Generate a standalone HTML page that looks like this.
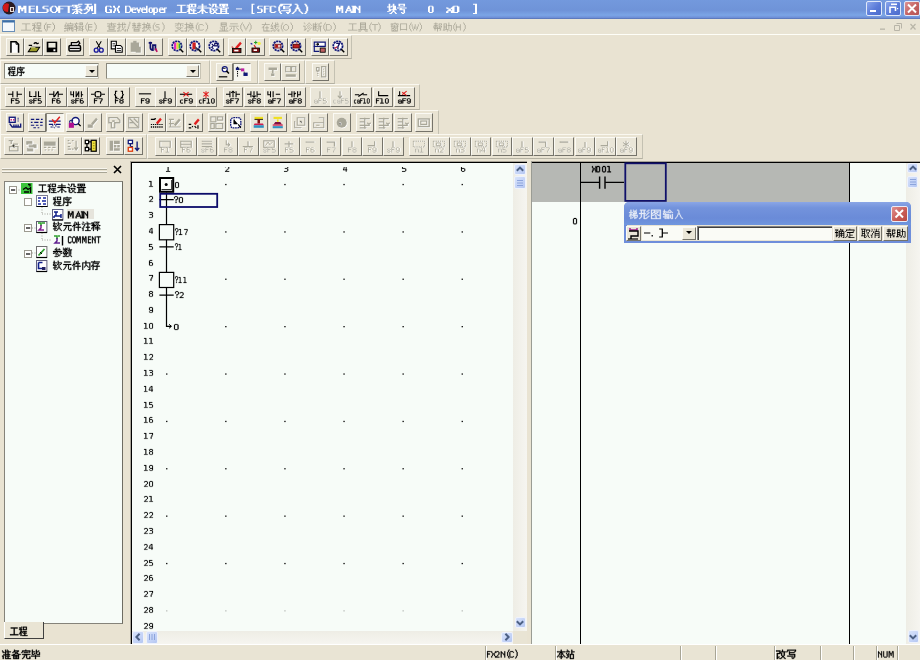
<!DOCTYPE html><html><head><meta charset="utf-8"><style>
*{margin:0;padding:0;box-sizing:border-box}
html,body{width:920px;height:660px;overflow:hidden;background:#e9e3d2;font-family:"Liberation Sans",sans-serif}
body{position:relative}
.a{position:absolute}
.t{position:absolute;overflow:visible}
.b{position:absolute;border-left:1px solid #fbfaf4;border-top:1px solid #fbfaf4;border-right:1px solid #75736a;border-bottom:1px solid #75736a;background:#eae6d8}
.i{position:absolute;overflow:visible}
</style></head><body><div class="a" style="left:0px;top:0px;width:920px;height:19px;background:linear-gradient(#7399dd 0%,#6f93d8 55%,#7ba5e6 80%,#6f90d8 92%,#5570b0 100%)"></div>
<svg class="i" style="left:2px;top:1px;width:14px;height:14px" viewBox="0 0 14 14"><circle cx="7" cy="7" r="6.5" fill="#2a1a20"/><path d="M1 5 Q3 1 7 3 L6 11 Q2 11 1 8z" fill="#d01818"/><rect x="8" y="6" width="4" height="5" fill="#e8e0d8"/><rect x="9" y="7" width="2" height="3" fill="#503030"/></svg>
<svg class="t" style="left:17.80px;top:1.60px;width:82.43px;height:14.72px" viewBox="0 0 78 16" preserveAspectRatio="none" aria-label="MELSOFT系列"><path fill="#fff" d="M57 2h4v1h-4zM63 2h7v1h-7zM72 2h2v1h-2zM51 3h7v1h-7zM65 3h2v1h-2zM72 3h2v1h-2zM0 4h3v1h-3zM5 4h3v1h-3zM10 4h6v1h-6zM17 4h2v1h-2zM24 4h5v1h-5zM32 4h4v1h-4zM38 4h14v1h-14zM54 4h2v1h-2zM58 4h2v1h-2zM65 4h2v1h-2zM69 4h2v1h-2zM72 4h2v1h-2zM0 5h3v1h-3zM5 5h3v1h-3zM10 5h2v1h-2zM17 5h2v1h-2zM23 5h2v1h-2zM31 5h2v1h-2zM35 5h2v1h-2zM38 5h2v1h-2zM47 5h2v1h-2zM52 5h7v1h-7zM64 5h7v1h-7zM72 5h2v1h-2zM0 6h8v1h-8zM10 6h2v1h-2zM17 6h2v1h-2zM23 6h2v1h-2zM30 6h2v1h-2zM36 6h4v1h-4zM47 6h2v1h-2zM55 6h2v1h-2zM64 6h2v1h-2zM67 6h4v1h-4zM72 6h2v1h-2zM0 7h8v1h-8zM10 7h6v1h-6zM17 7h2v1h-2zM24 7h4v1h-4zM30 7h2v1h-2zM36 7h7v1h-7zM47 7h2v1h-2zM54 7h2v1h-2zM58 7h2v1h-2zM63 7h3v1h-3zM67 7h4v1h-4zM72 7h2v1h-2zM0 8h2v1h-2zM3 8h2v1h-2zM6 8h2v1h-2zM10 8h2v1h-2zM17 8h2v1h-2zM27 8h2v1h-2zM30 8h2v1h-2zM36 8h4v1h-4zM47 8h2v1h-2zM51 8h10v1h-10zM62 8h2v1h-2zM65 8h3v1h-3zM69 8h2v1h-2zM72 8h2v1h-2zM0 9h2v1h-2zM3 9h2v1h-2zM6 9h2v1h-2zM10 9h2v1h-2zM17 9h2v1h-2zM27 9h2v1h-2zM30 9h2v1h-2zM36 9h4v1h-4zM47 9h2v1h-2zM55 9h2v1h-2zM59 9h2v1h-2zM66 9h2v1h-2zM69 9h2v1h-2zM72 9h2v1h-2zM0 10h2v1h-2zM6 10h2v1h-2zM10 10h2v1h-2zM17 10h2v1h-2zM27 10h2v1h-2zM31 10h2v1h-2zM35 10h2v1h-2zM38 10h2v1h-2zM47 10h2v1h-2zM53 10h6v1h-6zM65 10h2v1h-2zM72 10h2v1h-2zM0 11h2v1h-2zM6 11h2v1h-2zM10 11h6v1h-6zM17 11h11v1h-11zM32 11h4v1h-4zM38 11h2v1h-2zM47 11h2v1h-2zM52 11h2v1h-2zM55 11h2v1h-2zM58 11h2v1h-2zM64 11h2v1h-2zM72 11h2v1h-2zM51 12h2v1h-2zM54 12h3v1h-3zM59 12h2v1h-2zM62 12h3v1h-3zM70 12h4v1h-4z"/></svg>
<svg class="t" style="left:105.00px;top:1.60px;width:19.00px;height:14.72px" viewBox="0 0 19 16" preserveAspectRatio="none" aria-label="GX"><path fill="#fff" d="M1 4h5v1h-5zM8 4h2v1h-2zM13 4h2v1h-2zM0 5h2v1h-2zM5 5h2v1h-2zM8 5h2v1h-2zM13 5h2v1h-2zM0 6h2v1h-2zM9 6h2v1h-2zM12 6h2v1h-2zM0 7h2v1h-2zM10 7h3v1h-3zM0 8h2v1h-2zM4 8h3v1h-3zM9 8h2v1h-2zM12 8h2v1h-2zM0 9h2v1h-2zM5 9h2v1h-2zM9 9h2v1h-2zM12 9h2v1h-2zM0 10h2v1h-2zM5 10h2v1h-2zM8 10h2v1h-2zM13 10h2v1h-2zM1 11h6v1h-6zM8 11h2v1h-2zM13 11h2v1h-2z"/></svg>
<svg class="t" style="left:125.00px;top:1.60px;width:46.04px;height:14.72px" viewBox="0 0 57 16" preserveAspectRatio="none" aria-label="Developer"><path fill="#fff" d="M0 4h6v1h-6zM26 4h2v1h-2zM0 5h2v1h-2zM5 5h2v1h-2zM26 5h2v1h-2zM0 6h2v1h-2zM6 6h2v1h-2zM9 6h4v1h-4zM14 6h2v1h-2zM18 6h2v1h-2zM21 6h4v1h-4zM26 6h2v1h-2zM30 6h4v1h-4zM35 6h5v1h-5zM43 6h4v1h-4zM48 6h4v1h-4zM0 7h2v1h-2zM6 7h4v1h-4zM12 7h4v1h-4zM18 7h4v1h-4zM24 7h4v1h-4zM29 7h2v1h-2zM33 7h4v1h-4zM39 7h2v1h-2zM42 7h2v1h-2zM46 7h4v1h-4zM0 8h2v1h-2zM6 8h8v1h-8zM15 8h4v1h-4zM20 8h8v1h-8zM29 8h2v1h-2zM33 8h4v1h-4zM39 8h2v1h-2zM42 8h8v1h-8zM0 9h2v1h-2zM6 9h4v1h-4zM15 9h4v1h-4zM20 9h2v1h-2zM26 9h2v1h-2zM29 9h2v1h-2zM33 9h4v1h-4zM39 9h2v1h-2zM42 9h2v1h-2zM48 9h2v1h-2zM0 10h2v1h-2zM5 10h2v1h-2zM8 10h2v1h-2zM16 10h2v1h-2zM20 10h2v1h-2zM26 10h2v1h-2zM29 10h2v1h-2zM33 10h4v1h-4zM39 10h2v1h-2zM42 10h2v1h-2zM48 10h2v1h-2zM0 11h6v1h-6zM9 11h5v1h-5zM16 11h2v1h-2zM21 11h7v1h-7zM30 11h4v1h-4zM35 11h5v1h-5zM43 11h7v1h-7zM35 12h2v1h-2zM35 13h2v1h-2z"/></svg>
<svg class="t" style="left:176.00px;top:1.60px;width:57.42px;height:14.72px" viewBox="0 0 65 16" preserveAspectRatio="none" aria-label="工程未设置"><path fill="#fff" d="M15 2h8v1h-8zM29 2h2v1h-2zM37 2h2v1h-2zM41 2h5v1h-5zM49 2h10v1h-10zM1 3h10v1h-10zM12 3h4v1h-4zM17 3h2v1h-2zM21 3h2v1h-2zM29 3h2v1h-2zM38 3h2v1h-2zM41 3h2v1h-2zM44 3h2v1h-2zM49 3h2v1h-2zM52 3h4v1h-4zM57 3h2v1h-2zM5 4h2v1h-2zM14 4h2v1h-2zM17 4h2v1h-2zM21 4h2v1h-2zM25 4h10v1h-10zM41 4h2v1h-2zM44 4h2v1h-2zM49 4h10v1h-10zM5 5h2v1h-2zM12 5h11v1h-11zM29 5h2v1h-2zM40 5h2v1h-2zM44 5h4v1h-4zM53 5h2v1h-2zM5 6h2v1h-2zM14 6h2v1h-2zM24 6h16v1h-16zM48 6h12v1h-12zM5 7h2v1h-2zM14 7h9v1h-9zM29 7h2v1h-2zM38 7h9v1h-9zM50 7h2v1h-2zM56 7h2v1h-2zM5 8h2v1h-2zM13 8h5v1h-5zM19 8h2v1h-2zM28 8h4v1h-4zM38 8h2v1h-2zM41 8h2v1h-2zM45 8h2v1h-2zM50 8h8v1h-8zM5 9h2v1h-2zM13 9h3v1h-3zM17 9h6v1h-6zM27 9h6v1h-6zM38 9h2v1h-2zM42 9h4v1h-4zM50 9h2v1h-2zM56 9h2v1h-2zM5 10h2v1h-2zM12 10h4v1h-4zM19 10h2v1h-2zM26 10h2v1h-2zM29 10h2v1h-2zM32 10h2v1h-2zM38 10h3v1h-3zM43 10h2v1h-2zM50 10h8v1h-8zM0 11h12v1h-12zM14 11h2v1h-2zM19 11h2v1h-2zM24 11h3v1h-3zM29 11h2v1h-2zM33 11h3v1h-3zM38 11h2v1h-2zM42 11h4v1h-4zM50 11h2v1h-2zM56 11h2v1h-2zM14 12h10v1h-10zM29 12h2v1h-2zM39 12h4v1h-4zM45 12h15v1h-15z"/></svg>
<svg class="t" style="left:236.00px;top:1.60px;width:8.00px;height:14.72px" viewBox="0 0 8 16" preserveAspectRatio="none" aria-label="-"><path fill="#fff" d="M0 7h6v1h-6z"/></svg>
<svg class="t" style="left:249.50px;top:1.60px;width:6.00px;height:14.72px" viewBox="0 0 8 16" preserveAspectRatio="none" aria-label="["><path fill="#fff" d="M2 2h4v1h-4zM2 3h2v1h-2zM2 4h2v1h-2zM2 5h2v1h-2zM2 6h2v1h-2zM2 7h2v1h-2zM2 8h2v1h-2zM2 9h2v1h-2zM2 10h2v1h-2zM2 11h2v1h-2zM2 12h4v1h-4z"/></svg>
<svg class="t" style="left:256.50px;top:1.60px;width:54.10px;height:14.72px" viewBox="0 0 56 16" preserveAspectRatio="none" aria-label="SFC(写入)"><path fill="#fff" d="M24 2h12v1h-12zM39 2h3v1h-3zM49 2h2v1h-2zM23 3h4v1h-4zM34 3h2v1h-2zM41 3h2v1h-2zM50 3h2v1h-2zM1 4h5v1h-5zM7 4h6v1h-6zM14 4h5v1h-5zM23 4h3v1h-3zM27 4h2v1h-2zM33 4h2v1h-2zM41 4h2v1h-2zM50 4h2v1h-2zM0 5h2v1h-2zM7 5h2v1h-2zM13 5h2v1h-2zM18 5h2v1h-2zM22 5h2v1h-2zM27 5h7v1h-7zM41 5h2v1h-2zM51 5h2v1h-2zM0 6h2v1h-2zM7 6h2v1h-2zM13 6h2v1h-2zM22 6h2v1h-2zM27 6h2v1h-2zM40 6h4v1h-4zM51 6h2v1h-2zM1 7h4v1h-4zM7 7h5v1h-5zM13 7h2v1h-2zM22 7h2v1h-2zM27 7h8v1h-8zM40 7h4v1h-4zM51 7h2v1h-2zM4 8h2v1h-2zM7 8h2v1h-2zM13 8h2v1h-2zM22 8h2v1h-2zM33 8h2v1h-2zM39 8h2v1h-2zM43 8h2v1h-2zM51 8h2v1h-2zM4 9h2v1h-2zM7 9h2v1h-2zM13 9h2v1h-2zM22 9h2v1h-2zM25 9h10v1h-10zM39 9h2v1h-2zM43 9h2v1h-2zM51 9h2v1h-2zM4 10h2v1h-2zM7 10h2v1h-2zM13 10h2v1h-2zM18 10h2v1h-2zM23 10h2v1h-2zM33 10h2v1h-2zM38 10h2v1h-2zM44 10h2v1h-2zM50 10h2v1h-2zM0 11h5v1h-5zM7 11h2v1h-2zM14 11h5v1h-5zM23 11h2v1h-2zM30 11h4v1h-4zM37 11h2v1h-2zM45 11h2v1h-2zM50 11h2v1h-2zM24 12h2v1h-2zM31 12h2v1h-2zM36 12h2v1h-2zM46 12h2v1h-2zM49 12h2v1h-2z"/></svg>
<svg class="t" style="left:336.00px;top:1.60px;width:29.04px;height:14.72px" viewBox="0 0 32 16" preserveAspectRatio="none" aria-label="MAIN"><path fill="#fff" d="M0 4h3v1h-3zM5 4h3v1h-3zM13 4h2v1h-2zM17 4h5v1h-5zM25 4h2v1h-2zM0 5h3v1h-3zM5 5h3v1h-3zM13 5h2v1h-2zM18 5h5v1h-5zM25 5h2v1h-2zM0 6h8v1h-8zM12 6h4v1h-4zM18 6h6v1h-6zM25 6h2v1h-2zM0 7h8v1h-8zM12 7h4v1h-4zM18 7h4v1h-4zM23 7h4v1h-4zM0 8h2v1h-2zM3 8h2v1h-2zM6 8h2v1h-2zM11 8h2v1h-2zM15 8h2v1h-2zM18 8h4v1h-4zM24 8h3v1h-3zM0 9h2v1h-2zM3 9h2v1h-2zM6 9h2v1h-2zM11 9h6v1h-6zM18 9h4v1h-4zM25 9h2v1h-2zM0 10h2v1h-2zM6 10h2v1h-2zM10 10h2v1h-2zM16 10h6v1h-6zM25 10h2v1h-2zM0 11h2v1h-2zM6 11h2v1h-2zM10 11h2v1h-2zM16 11h6v1h-6zM25 11h2v1h-2z"/></svg>
<svg class="t" style="left:386.80px;top:1.60px;width:23.80px;height:14.72px" viewBox="0 0 29 16" preserveAspectRatio="none" aria-label="块号"><path fill="#fff" d="M2 2h2v1h-2zM7 2h2v1h-2zM14 2h8v1h-8zM2 3h2v1h-2zM7 3h2v1h-2zM14 3h2v1h-2zM20 3h2v1h-2zM2 4h2v1h-2zM5 4h6v1h-6zM14 4h8v1h-8zM0 5h6v1h-6zM7 5h4v1h-4zM2 6h2v1h-2zM7 6h4v1h-4zM12 6h12v1h-12zM2 7h2v1h-2zM7 7h4v1h-4zM16 7h2v1h-2zM2 8h10v1h-10zM15 8h7v1h-7zM2 9h3v1h-3zM7 9h2v1h-2zM20 9h2v1h-2zM0 10h3v1h-3zM6 10h4v1h-4zM20 10h2v1h-2zM5 11h2v1h-2zM9 11h2v1h-2zM17 11h2v1h-2zM20 11h2v1h-2zM3 12h3v1h-3zM10 12h2v1h-2zM18 12h3v1h-3z"/></svg>
<svg class="t" style="left:427.70px;top:1.60px;width:11.40px;height:14.72px" viewBox="0 0 12 16" preserveAspectRatio="none" aria-label="0"><path fill="#fff" d="M1 4h4v1h-4zM0 5h2v1h-2zM4 5h2v1h-2zM0 6h2v1h-2zM4 6h2v1h-2zM0 7h2v1h-2zM4 7h2v1h-2zM0 8h2v1h-2zM4 8h2v1h-2zM0 9h2v1h-2zM4 9h2v1h-2zM0 10h2v1h-2zM4 10h2v1h-2zM1 11h4v1h-4z"/></svg>
<svg class="t" style="left:446.00px;top:1.60px;width:20.71px;height:14.72px" viewBox="0 0 17 16" preserveAspectRatio="none" aria-label="x0"><path fill="#fff" d="M6 4h4v1h-4zM5 5h2v1h-2zM9 5h2v1h-2zM0 6h2v1h-2zM4 6h3v1h-3zM9 6h2v1h-2zM1 7h6v1h-6zM9 7h2v1h-2zM2 8h2v1h-2zM5 8h2v1h-2zM9 8h2v1h-2zM1 9h6v1h-6zM9 9h2v1h-2zM0 10h2v1h-2zM4 10h3v1h-3zM9 10h2v1h-2zM0 11h2v1h-2zM4 11h6v1h-6z"/></svg>
<svg class="t" style="left:472.00px;top:1.60px;width:8.00px;height:14.72px" viewBox="0 0 8 16" preserveAspectRatio="none" aria-label="]"><path fill="#fff" d="M1 2h4v1h-4zM3 3h2v1h-2zM3 4h2v1h-2zM3 5h2v1h-2zM3 6h2v1h-2zM3 7h2v1h-2zM3 8h2v1h-2zM3 9h2v1h-2zM3 10h2v1h-2zM3 11h2v1h-2zM1 12h4v1h-4z"/></svg>
<div class="a" style="left:866px;top:1px;width:16px;height:15px;border:1px solid #dfe8fa;border-radius:2px;background:linear-gradient(135deg,#8aa6ec,#5a7ad8 55%,#4c6ccc)"></div>
<div class="a" style="left:870px;top:10px;width:6px;height:2px;background:#fff"></div>
<div class="a" style="left:885px;top:1px;width:16px;height:15px;border:1px solid #dfe8fa;border-radius:2px;background:linear-gradient(135deg,#8aa6ec,#5a7ad8 55%,#4c6ccc)"></div>
<svg class="i" style="left:885px;top:1px;width:16px;height:15px" viewBox="0 0 16 15"><rect x="6" y="2.5" width="6" height="1.6" fill="#fff"/><path d="M5 12V6.2H10.5V10" fill="none" stroke="#fff" stroke-width="1.6"/><rect x="12" y="7" width="1.2" height="1.2" fill="#fff"/></svg>
<div class="a" style="left:904px;top:1px;width:16px;height:15px;border:1px solid #dfe8fa;border-radius:2px;background:linear-gradient(135deg,#dc9494,#c46262 55%,#b45454)"></div>
<svg class="i" style="left:904px;top:1px;width:16px;height:15px" viewBox="0 0 16 15"><path d="M4 3.5L12 11.5M12 3.5L4 11.5" stroke="#fff" stroke-width="2"/></svg>
<div class="a" style="left:0px;top:19px;width:920px;height:15px;background:#e9e4d4"></div>
<div class="a" style="left:0px;top:34px;width:920px;height:1px;background:#fefef8"></div>
<svg class="i" style="left:2px;top:20px;width:14px;height:12px" viewBox="0 0 14 12"><rect x="0.5" y="0.5" width="12" height="11" fill="#f4f8fc" stroke="#6a8fb8"/><rect x="0.5" y="0.5" width="12" height="2" fill="#3a6ea8"/></svg>
<svg class="t" style="left:21.00px;top:21.00px;width:36.76px;height:12.80px" viewBox="0 0 40 16" preserveAspectRatio="none" aria-label="工程(F)"><path fill="#a9a697" d="M15 2h1v1h-1zM17 2h5v1h-5zM27 2h1v1h-1zM34 2h1v1h-1zM1 3h9v1h-9zM12 3h3v1h-3zM17 3h1v1h-1zM21 3h1v1h-1zM26 3h1v1h-1zM35 3h1v1h-1zM5 4h1v1h-1zM14 4h1v1h-1zM17 4h1v1h-1zM21 4h1v1h-1zM26 4h1v1h-1zM28 4h5v1h-5zM35 4h1v1h-1zM5 5h1v1h-1zM12 5h4v1h-4zM17 5h5v1h-5zM25 5h1v1h-1zM28 5h1v1h-1zM36 5h1v1h-1zM5 6h1v1h-1zM14 6h1v1h-1zM25 6h1v1h-1zM28 6h1v1h-1zM36 6h1v1h-1zM5 7h1v1h-1zM14 7h2v1h-2zM17 7h5v1h-5zM25 7h1v1h-1zM28 7h4v1h-4zM36 7h1v1h-1zM5 8h1v1h-1zM13 8h2v1h-2zM16 8h1v1h-1zM19 8h1v1h-1zM25 8h1v1h-1zM28 8h1v1h-1zM36 8h1v1h-1zM5 9h1v1h-1zM13 9h2v1h-2zM17 9h5v1h-5zM25 9h1v1h-1zM28 9h1v1h-1zM36 9h1v1h-1zM5 10h1v1h-1zM12 10h1v1h-1zM14 10h1v1h-1zM19 10h1v1h-1zM26 10h1v1h-1zM28 10h1v1h-1zM35 10h1v1h-1zM0 11h11v1h-11zM14 11h1v1h-1zM19 11h1v1h-1zM26 11h1v1h-1zM28 11h1v1h-1zM35 11h1v1h-1zM14 12h1v1h-1zM16 12h7v1h-7zM27 12h1v1h-1zM34 12h1v1h-1z"/></svg>
<svg class="t" style="left:64.00px;top:21.00px;width:35.17px;height:12.80px" viewBox="0 0 41 16" preserveAspectRatio="none" aria-label="编辑(E)"><path fill="#a9a697" d="M2 2h1v1h-1zM7 2h1v1h-1zM14 2h1v1h-1zM18 2h4v1h-4zM27 2h1v1h-1zM35 2h1v1h-1zM2 3h1v1h-1zM4 3h7v1h-7zM12 3h5v1h-5zM18 3h1v1h-1zM21 3h1v1h-1zM26 3h1v1h-1zM36 3h1v1h-1zM1 4h1v1h-1zM4 4h1v1h-1zM10 4h1v1h-1zM13 4h1v1h-1zM18 4h4v1h-4zM26 4h1v1h-1zM28 4h5v1h-5zM36 4h1v1h-1zM1 5h1v1h-1zM3 5h8v1h-8zM13 5h2v1h-2zM25 5h1v1h-1zM28 5h1v1h-1zM37 5h1v1h-1zM0 6h3v1h-3zM4 6h1v1h-1zM12 6h1v1h-1zM14 6h1v1h-1zM17 6h6v1h-6zM25 6h1v1h-1zM28 6h1v1h-1zM37 6h1v1h-1zM2 7h1v1h-1zM4 7h7v1h-7zM12 7h5v1h-5zM18 7h1v1h-1zM21 7h1v1h-1zM25 7h1v1h-1zM28 7h5v1h-5zM37 7h1v1h-1zM1 8h1v1h-1zM4 8h1v1h-1zM6 8h1v1h-1zM8 8h1v1h-1zM10 8h1v1h-1zM14 8h1v1h-1zM18 8h2v1h-2zM21 8h1v1h-1zM25 8h1v1h-1zM28 8h1v1h-1zM37 8h1v1h-1zM0 9h11v1h-11zM14 9h3v1h-3zM18 9h1v1h-1zM20 9h2v1h-2zM25 9h1v1h-1zM28 9h1v1h-1zM37 9h1v1h-1zM4 10h1v1h-1zM6 10h1v1h-1zM8 10h1v1h-1zM10 10h1v1h-1zM12 10h3v1h-3zM18 10h1v1h-1zM21 10h2v1h-2zM26 10h1v1h-1zM28 10h1v1h-1zM36 10h1v1h-1zM2 11h3v1h-3zM6 11h1v1h-1zM8 11h1v1h-1zM10 11h1v1h-1zM14 11h1v1h-1zM16 11h6v1h-6zM26 11h1v1h-1zM28 11h5v1h-5zM36 11h1v1h-1zM0 12h2v1h-2zM4 12h1v1h-1zM9 12h2v1h-2zM14 12h1v1h-1zM21 12h1v1h-1zM27 12h1v1h-1zM35 12h1v1h-1z"/></svg>
<svg class="t" style="left:107.00px;top:21.00px;width:60.00px;height:12.80px" viewBox="0 0 72 16" preserveAspectRatio="none" aria-label="查找/替换(S)"><path fill="#a9a697" d="M27 1h1v1h-1zM5 2h1v1h-1zM14 2h1v1h-1zM18 2h1v1h-1zM20 2h1v1h-1zM27 2h1v1h-1zM32 2h1v1h-1zM38 2h1v1h-1zM44 2h1v1h-1zM48 2h1v1h-1zM57 2h1v1h-1zM66 2h1v1h-1zM0 3h11v1h-11zM14 3h1v1h-1zM18 3h1v1h-1zM21 3h1v1h-1zM27 3h1v1h-1zM30 3h5v1h-5zM36 3h5v1h-5zM44 3h1v1h-1zM48 3h4v1h-4zM56 3h1v1h-1zM67 3h1v1h-1zM3 4h1v1h-1zM5 4h1v1h-1zM7 4h1v1h-1zM12 4h11v1h-11zM26 4h1v1h-1zM32 4h1v1h-1zM38 4h1v1h-1zM42 4h6v1h-6zM50 4h1v1h-1zM56 4h1v1h-1zM59 4h4v1h-4zM67 4h1v1h-1zM2 5h1v1h-1zM5 5h1v1h-1zM8 5h1v1h-1zM14 5h1v1h-1zM18 5h1v1h-1zM26 5h1v1h-1zM30 5h5v1h-5zM36 5h5v1h-5zM44 5h1v1h-1zM47 5h5v1h-5zM55 5h1v1h-1zM58 5h1v1h-1zM68 5h1v1h-1zM0 6h11v1h-11zM14 6h1v1h-1zM16 6h1v1h-1zM18 6h1v1h-1zM21 6h1v1h-1zM26 6h1v1h-1zM32 6h2v1h-2zM37 6h2v1h-2zM44 6h1v1h-1zM46 6h2v1h-2zM49 6h1v1h-1zM51 6h1v1h-1zM55 6h1v1h-1zM58 6h1v1h-1zM68 6h1v1h-1zM2 7h1v1h-1zM8 7h1v1h-1zM14 7h2v1h-2zM18 7h1v1h-1zM21 7h1v1h-1zM25 7h1v1h-1zM31 7h1v1h-1zM34 7h1v1h-1zM36 7h1v1h-1zM39 7h1v1h-1zM44 7h2v1h-2zM47 7h1v1h-1zM49 7h1v1h-1zM51 7h1v1h-1zM55 7h1v1h-1zM59 7h3v1h-3zM68 7h1v1h-1zM2 8h7v1h-7zM13 8h2v1h-2zM18 8h1v1h-1zM20 8h1v1h-1zM25 8h1v1h-1zM30 8h1v1h-1zM32 8h7v1h-7zM40 8h1v1h-1zM43 8h2v1h-2zM46 8h7v1h-7zM55 8h1v1h-1zM62 8h1v1h-1zM68 8h1v1h-1zM2 9h1v1h-1zM8 9h1v1h-1zM12 9h1v1h-1zM14 9h1v1h-1zM19 9h1v1h-1zM25 9h1v1h-1zM32 9h1v1h-1zM38 9h1v1h-1zM42 9h1v1h-1zM44 9h1v1h-1zM49 9h1v1h-1zM55 9h1v1h-1zM62 9h1v1h-1zM68 9h1v1h-1zM2 10h7v1h-7zM14 10h1v1h-1zM18 10h2v1h-2zM22 10h1v1h-1zM24 10h1v1h-1zM32 10h7v1h-7zM44 10h1v1h-1zM48 10h1v1h-1zM50 10h1v1h-1zM56 10h1v1h-1zM62 10h1v1h-1zM67 10h1v1h-1zM14 11h1v1h-1zM17 11h1v1h-1zM20 11h1v1h-1zM22 11h1v1h-1zM24 11h1v1h-1zM32 11h1v1h-1zM38 11h1v1h-1zM44 11h1v1h-1zM47 11h1v1h-1zM51 11h1v1h-1zM56 11h1v1h-1zM58 11h4v1h-4zM67 11h1v1h-1zM0 12h11v1h-11zM12 12h3v1h-3zM16 12h1v1h-1zM21 12h2v1h-2zM24 12h1v1h-1zM32 12h7v1h-7zM42 12h3v1h-3zM46 12h1v1h-1zM52 12h1v1h-1zM57 12h1v1h-1zM66 12h1v1h-1z"/></svg>
<svg class="t" style="left:173.53px;top:21.00px;width:36.69px;height:12.80px" viewBox="0 0 42 16" preserveAspectRatio="none" aria-label="变换(C)"><path fill="#a9a697" d="M5 2h1v1h-1zM14 2h1v1h-1zM18 2h1v1h-1zM27 2h1v1h-1zM36 2h1v1h-1zM1 3h10v1h-10zM14 3h1v1h-1zM18 3h4v1h-4zM26 3h1v1h-1zM37 3h1v1h-1zM4 4h1v1h-1zM7 4h1v1h-1zM12 4h6v1h-6zM20 4h1v1h-1zM26 4h1v1h-1zM29 4h4v1h-4zM37 4h1v1h-1zM2 5h1v1h-1zM4 5h1v1h-1zM7 5h1v1h-1zM9 5h1v1h-1zM14 5h1v1h-1zM17 5h5v1h-5zM25 5h1v1h-1zM28 5h1v1h-1zM33 5h1v1h-1zM38 5h1v1h-1zM1 6h1v1h-1zM4 6h1v1h-1zM7 6h1v1h-1zM10 6h1v1h-1zM14 6h1v1h-1zM16 6h2v1h-2zM19 6h1v1h-1zM21 6h1v1h-1zM25 6h1v1h-1zM28 6h1v1h-1zM38 6h1v1h-1zM14 7h2v1h-2zM17 7h1v1h-1zM19 7h1v1h-1zM21 7h1v1h-1zM25 7h1v1h-1zM28 7h1v1h-1zM38 7h1v1h-1zM2 8h8v1h-8zM13 8h2v1h-2zM16 8h7v1h-7zM25 8h1v1h-1zM28 8h1v1h-1zM38 8h1v1h-1zM4 9h1v1h-1zM7 9h1v1h-1zM12 9h1v1h-1zM14 9h1v1h-1zM19 9h1v1h-1zM25 9h1v1h-1zM28 9h1v1h-1zM38 9h1v1h-1zM5 10h2v1h-2zM14 10h1v1h-1zM18 10h1v1h-1zM20 10h1v1h-1zM26 10h1v1h-1zM28 10h1v1h-1zM33 10h1v1h-1zM37 10h1v1h-1zM4 11h1v1h-1zM7 11h1v1h-1zM14 11h1v1h-1zM17 11h1v1h-1zM21 11h1v1h-1zM26 11h1v1h-1zM29 11h4v1h-4zM37 11h1v1h-1zM1 12h3v1h-3zM8 12h3v1h-3zM12 12h3v1h-3zM16 12h1v1h-1zM22 12h1v1h-1zM27 12h1v1h-1zM36 12h1v1h-1z"/></svg>
<svg class="t" style="left:218.50px;top:21.00px;width:35.07px;height:12.80px" viewBox="0 0 41 16" preserveAspectRatio="none" aria-label="显示(V)"><path fill="#a9a697" d="M2 2h7v1h-7zM27 2h1v1h-1zM35 2h1v1h-1zM2 3h1v1h-1zM8 3h1v1h-1zM13 3h9v1h-9zM26 3h1v1h-1zM36 3h1v1h-1zM2 4h7v1h-7zM26 4h1v1h-1zM28 4h1v1h-1zM34 4h1v1h-1zM36 4h1v1h-1zM2 5h1v1h-1zM8 5h1v1h-1zM25 5h1v1h-1zM28 5h1v1h-1zM34 5h1v1h-1zM37 5h1v1h-1zM2 6h7v1h-7zM12 6h11v1h-11zM25 6h1v1h-1zM29 6h1v1h-1zM33 6h1v1h-1zM37 6h1v1h-1zM4 7h1v1h-1zM6 7h1v1h-1zM17 7h1v1h-1zM25 7h1v1h-1zM29 7h1v1h-1zM33 7h1v1h-1zM37 7h1v1h-1zM1 8h1v1h-1zM4 8h1v1h-1zM6 8h1v1h-1zM9 8h1v1h-1zM14 8h1v1h-1zM17 8h1v1h-1zM20 8h1v1h-1zM25 8h1v1h-1zM30 8h1v1h-1zM32 8h1v1h-1zM37 8h1v1h-1zM2 9h1v1h-1zM4 9h1v1h-1zM6 9h1v1h-1zM9 9h1v1h-1zM14 9h1v1h-1zM17 9h1v1h-1zM21 9h1v1h-1zM25 9h1v1h-1zM30 9h1v1h-1zM32 9h1v1h-1zM37 9h1v1h-1zM2 10h1v1h-1zM4 10h1v1h-1zM6 10h1v1h-1zM8 10h1v1h-1zM13 10h1v1h-1zM17 10h1v1h-1zM22 10h1v1h-1zM26 10h1v1h-1zM31 10h1v1h-1zM36 10h1v1h-1zM4 11h1v1h-1zM6 11h1v1h-1zM12 11h1v1h-1zM17 11h1v1h-1zM22 11h1v1h-1zM26 11h1v1h-1zM31 11h1v1h-1zM36 11h1v1h-1zM0 12h11v1h-11zM16 12h2v1h-2zM27 12h1v1h-1zM35 12h1v1h-1z"/></svg>
<svg class="t" style="left:261.21px;top:21.00px;width:34.18px;height:12.80px" viewBox="0 0 43 16" preserveAspectRatio="none" aria-label="在线(O)"><path fill="#a9a697" d="M5 2h1v1h-1zM14 2h1v1h-1zM18 2h1v1h-1zM20 2h1v1h-1zM27 2h1v1h-1zM37 2h1v1h-1zM5 3h1v1h-1zM14 3h1v1h-1zM18 3h1v1h-1zM21 3h1v1h-1zM26 3h1v1h-1zM38 3h1v1h-1zM1 4h10v1h-10zM13 4h1v1h-1zM18 4h4v1h-4zM26 4h1v1h-1zM30 4h3v1h-3zM38 4h1v1h-1zM4 5h1v1h-1zM13 5h1v1h-1zM16 5h3v1h-3zM25 5h1v1h-1zM29 5h1v1h-1zM33 5h1v1h-1zM39 5h1v1h-1zM3 6h1v1h-1zM7 6h1v1h-1zM12 6h3v1h-3zM18 6h5v1h-5zM25 6h1v1h-1zM28 6h1v1h-1zM34 6h1v1h-1zM39 6h1v1h-1zM2 7h2v1h-2zM7 7h1v1h-1zM14 7h1v1h-1zM16 7h3v1h-3zM25 7h1v1h-1zM28 7h1v1h-1zM34 7h1v1h-1zM39 7h1v1h-1zM1 8h1v1h-1zM3 8h1v1h-1zM5 8h5v1h-5zM13 8h1v1h-1zM18 8h1v1h-1zM21 8h1v1h-1zM25 8h1v1h-1zM28 8h1v1h-1zM34 8h1v1h-1zM39 8h1v1h-1zM3 9h1v1h-1zM7 9h1v1h-1zM12 9h4v1h-4zM18 9h1v1h-1zM20 9h1v1h-1zM25 9h1v1h-1zM28 9h1v1h-1zM34 9h1v1h-1zM39 9h1v1h-1zM3 10h1v1h-1zM7 10h1v1h-1zM16 10h1v1h-1zM19 10h1v1h-1zM22 10h1v1h-1zM26 10h1v1h-1zM29 10h1v1h-1zM33 10h1v1h-1zM38 10h1v1h-1zM3 11h1v1h-1zM7 11h1v1h-1zM14 11h2v1h-2zM18 11h1v1h-1zM20 11h1v1h-1zM22 11h1v1h-1zM26 11h1v1h-1zM30 11h3v1h-3zM38 11h1v1h-1zM3 12h8v1h-8zM12 12h2v1h-2zM16 12h2v1h-2zM21 12h2v1h-2zM27 12h1v1h-1zM37 12h1v1h-1z"/></svg>
<svg class="t" style="left:303.00px;top:21.00px;width:35.15px;height:12.80px" viewBox="0 0 43 16" preserveAspectRatio="none" aria-label="诊断(D)"><path fill="#a9a697" d="M1 2h1v1h-1zM7 2h1v1h-1zM15 2h1v1h-1zM21 2h2v1h-2zM27 2h1v1h-1zM37 2h1v1h-1zM2 3h1v1h-1zM6 3h1v1h-1zM8 3h1v1h-1zM12 3h2v1h-2zM15 3h1v1h-1zM17 3h1v1h-1zM19 3h2v1h-2zM26 3h1v1h-1zM38 3h1v1h-1zM5 4h1v1h-1zM9 4h1v1h-1zM12 4h1v1h-1zM14 4h3v1h-3zM19 4h1v1h-1zM26 4h1v1h-1zM28 4h5v1h-5zM38 4h1v1h-1zM4 5h1v1h-1zM7 5h1v1h-1zM10 5h1v1h-1zM12 5h1v1h-1zM15 5h1v1h-1zM19 5h1v1h-1zM25 5h1v1h-1zM28 5h1v1h-1zM33 5h1v1h-1zM39 5h1v1h-1zM0 6h3v1h-3zM6 6h1v1h-1zM12 6h6v1h-6zM19 6h4v1h-4zM25 6h1v1h-1zM28 6h1v1h-1zM34 6h1v1h-1zM39 6h1v1h-1zM2 7h1v1h-1zM5 7h1v1h-1zM8 7h1v1h-1zM12 7h1v1h-1zM14 7h2v1h-2zM19 7h1v1h-1zM21 7h1v1h-1zM25 7h1v1h-1zM28 7h1v1h-1zM34 7h1v1h-1zM39 7h1v1h-1zM2 8h1v1h-1zM7 8h1v1h-1zM10 8h1v1h-1zM12 8h2v1h-2zM15 8h2v1h-2zM19 8h1v1h-1zM21 8h1v1h-1zM25 8h1v1h-1zM28 8h1v1h-1zM34 8h1v1h-1zM39 8h1v1h-1zM2 9h1v1h-1zM4 9h1v1h-1zM6 9h1v1h-1zM9 9h1v1h-1zM12 9h2v1h-2zM15 9h1v1h-1zM17 9h1v1h-1zM19 9h1v1h-1zM21 9h1v1h-1zM25 9h1v1h-1zM28 9h1v1h-1zM34 9h1v1h-1zM39 9h1v1h-1zM2 10h2v1h-2zM8 10h1v1h-1zM12 10h1v1h-1zM15 10h1v1h-1zM19 10h1v1h-1zM21 10h1v1h-1zM26 10h1v1h-1zM28 10h1v1h-1zM33 10h1v1h-1zM38 10h1v1h-1zM1 11h2v1h-2zM7 11h1v1h-1zM12 11h5v1h-5zM18 11h1v1h-1zM21 11h1v1h-1zM26 11h1v1h-1zM28 11h5v1h-5zM38 11h1v1h-1zM5 12h2v1h-2zM17 12h1v1h-1zM21 12h1v1h-1zM27 12h1v1h-1zM37 12h1v1h-1z"/></svg>
<svg class="t" style="left:348.40px;top:21.00px;width:35.17px;height:12.80px" viewBox="0 0 41 16" preserveAspectRatio="none" aria-label="工具(T)"><path fill="#a9a697" d="M14 2h7v1h-7zM27 2h1v1h-1zM35 2h1v1h-1zM1 3h9v1h-9zM14 3h1v1h-1zM20 3h1v1h-1zM26 3h1v1h-1zM36 3h1v1h-1zM5 4h1v1h-1zM14 4h7v1h-7zM26 4h1v1h-1zM28 4h7v1h-7zM36 4h1v1h-1zM5 5h1v1h-1zM14 5h1v1h-1zM20 5h1v1h-1zM25 5h1v1h-1zM31 5h1v1h-1zM37 5h1v1h-1zM5 6h1v1h-1zM14 6h7v1h-7zM25 6h1v1h-1zM31 6h1v1h-1zM37 6h1v1h-1zM5 7h1v1h-1zM14 7h1v1h-1zM20 7h1v1h-1zM25 7h1v1h-1zM31 7h1v1h-1zM37 7h1v1h-1zM5 8h1v1h-1zM14 8h7v1h-7zM25 8h1v1h-1zM31 8h1v1h-1zM37 8h1v1h-1zM5 9h1v1h-1zM14 9h1v1h-1zM20 9h1v1h-1zM25 9h1v1h-1zM31 9h1v1h-1zM37 9h1v1h-1zM5 10h1v1h-1zM12 10h11v1h-11zM26 10h1v1h-1zM31 10h1v1h-1zM36 10h1v1h-1zM0 11h11v1h-11zM15 11h1v1h-1zM19 11h1v1h-1zM26 11h1v1h-1zM31 11h1v1h-1zM36 11h1v1h-1zM12 12h3v1h-3zM20 12h3v1h-3zM27 12h1v1h-1zM35 12h1v1h-1z"/></svg>
<svg class="t" style="left:390.23px;top:21.00px;width:34.88px;height:12.80px" viewBox="0 0 45 16" preserveAspectRatio="none" aria-label="窗口(W)"><path fill="#a9a697" d="M6 2h1v1h-1zM27 2h1v1h-1zM38 2h1v1h-1zM1 3h10v1h-10zM13 3h9v1h-9zM26 3h1v1h-1zM39 3h1v1h-1zM1 4h1v1h-1zM3 4h1v1h-1zM8 4h1v1h-1zM10 4h1v1h-1zM13 4h1v1h-1zM21 4h1v1h-1zM26 4h1v1h-1zM28 4h1v1h-1zM32 4h1v1h-1zM36 4h1v1h-1zM39 4h1v1h-1zM2 5h1v1h-1zM5 5h1v1h-1zM9 5h1v1h-1zM13 5h1v1h-1zM21 5h1v1h-1zM25 5h1v1h-1zM28 5h1v1h-1zM32 5h1v1h-1zM36 5h1v1h-1zM40 5h1v1h-1zM1 6h10v1h-10zM13 6h1v1h-1zM21 6h1v1h-1zM25 6h1v1h-1zM28 6h1v1h-1zM32 6h1v1h-1zM36 6h1v1h-1zM40 6h1v1h-1zM2 7h1v1h-1zM5 7h1v1h-1zM9 7h1v1h-1zM13 7h1v1h-1zM21 7h1v1h-1zM25 7h1v1h-1zM29 7h1v1h-1zM31 7h1v1h-1zM33 7h1v1h-1zM35 7h1v1h-1zM40 7h1v1h-1zM2 8h1v1h-1zM4 8h6v1h-6zM13 8h1v1h-1zM21 8h1v1h-1zM25 8h1v1h-1zM29 8h1v1h-1zM31 8h1v1h-1zM33 8h1v1h-1zM35 8h1v1h-1zM40 8h1v1h-1zM2 9h3v1h-3zM7 9h1v1h-1zM9 9h1v1h-1zM13 9h1v1h-1zM21 9h1v1h-1zM25 9h1v1h-1zM29 9h1v1h-1zM31 9h1v1h-1zM33 9h1v1h-1zM35 9h1v1h-1zM40 9h1v1h-1zM2 10h1v1h-1zM5 10h2v1h-2zM9 10h1v1h-1zM13 10h9v1h-9zM26 10h1v1h-1zM30 10h1v1h-1zM34 10h1v1h-1zM39 10h1v1h-1zM2 11h1v1h-1zM4 11h1v1h-1zM7 11h1v1h-1zM9 11h1v1h-1zM13 11h1v1h-1zM21 11h1v1h-1zM26 11h1v1h-1zM30 11h1v1h-1zM34 11h1v1h-1zM39 11h1v1h-1zM2 12h8v1h-8zM27 12h1v1h-1zM38 12h1v1h-1z"/></svg>
<svg class="t" style="left:433.00px;top:21.00px;width:35.05px;height:12.80px" viewBox="0 0 43 16" preserveAspectRatio="none" aria-label="帮助(H)"><path fill="#a9a697" d="M3 2h1v1h-1zM19 2h1v1h-1zM27 2h1v1h-1zM37 2h1v1h-1zM1 3h5v1h-5zM7 3h4v1h-4zM13 3h4v1h-4zM19 3h1v1h-1zM26 3h1v1h-1zM38 3h1v1h-1zM3 4h1v1h-1zM7 4h1v1h-1zM10 4h1v1h-1zM13 4h1v1h-1zM16 4h1v1h-1zM19 4h1v1h-1zM26 4h1v1h-1zM28 4h1v1h-1zM33 4h1v1h-1zM38 4h1v1h-1zM1 5h5v1h-5zM7 5h1v1h-1zM9 5h1v1h-1zM13 5h1v1h-1zM16 5h1v1h-1zM18 5h5v1h-5zM25 5h1v1h-1zM28 5h1v1h-1zM33 5h1v1h-1zM39 5h1v1h-1zM3 6h1v1h-1zM7 6h1v1h-1zM10 6h1v1h-1zM13 6h4v1h-4zM19 6h1v1h-1zM22 6h1v1h-1zM25 6h1v1h-1zM28 6h1v1h-1zM33 6h1v1h-1zM39 6h1v1h-1zM0 7h6v1h-6zM7 7h4v1h-4zM13 7h1v1h-1zM16 7h1v1h-1zM19 7h1v1h-1zM22 7h1v1h-1zM25 7h1v1h-1zM28 7h6v1h-6zM39 7h1v1h-1zM2 8h1v1h-1zM5 8h1v1h-1zM7 8h1v1h-1zM13 8h4v1h-4zM19 8h1v1h-1zM22 8h1v1h-1zM25 8h1v1h-1zM28 8h1v1h-1zM33 8h1v1h-1zM39 8h1v1h-1zM1 9h9v1h-9zM13 9h1v1h-1zM16 9h1v1h-1zM19 9h1v1h-1zM22 9h1v1h-1zM25 9h1v1h-1zM28 9h1v1h-1zM33 9h1v1h-1zM39 9h1v1h-1zM2 10h1v1h-1zM5 10h1v1h-1zM9 10h1v1h-1zM13 10h1v1h-1zM15 10h4v1h-4zM22 10h1v1h-1zM26 10h1v1h-1zM28 10h1v1h-1zM33 10h1v1h-1zM38 10h1v1h-1zM2 11h1v1h-1zM5 11h1v1h-1zM8 11h2v1h-2zM12 11h3v1h-3zM18 11h1v1h-1zM20 11h1v1h-1zM22 11h1v1h-1zM26 11h1v1h-1zM28 11h1v1h-1zM33 11h1v1h-1zM38 11h1v1h-1zM5 12h1v1h-1zM17 12h1v1h-1zM21 12h1v1h-1zM27 12h1v1h-1zM37 12h1v1h-1z"/></svg>
<svg class="i" style="left:868px;top:21px;width:52px;height:12px" viewBox="0 0 52 12"><rect x="12" y="7.5" width="5" height="1.3" fill="#b8b5a8"/><path d="M26.5 4.5h5v5h-5z M28.5 2.5h5v5" fill="none" stroke="#b8b5a8" stroke-width="1"/><path d="M42.5 3L47.5 8.5M47.5 3L42.5 8.5" stroke="#b8b5a8" stroke-width="1.2"/></svg>
<div class="a" style="left:0px;top:35px;width:352px;height:24px;border-top:1px solid #faf8f0;border-left:1px solid #faf8f0;border-bottom:1px solid #b4b1a2;border-right:1px solid #c4c1b2"></div>
<div class="b" style="left:5.5px;top:38px;width:18.5px;height:18px"></div>
<svg class="i" style="left:8.00px;top:40.25px;width:13.5px;height:13.5px" viewBox="0 0 16 16"><path d="M3.5 15V2h6l3 3v10" fill="#fcfcfc" stroke="#000" stroke-width="1.8"/><path d="M9.5 2v3h3" fill="none" stroke="#000" stroke-width="1.1"/></svg>
<div class="b" style="left:24px;top:38px;width:18.5px;height:18px"></div>
<svg class="i" style="left:26.50px;top:40.25px;width:13.5px;height:13.5px" viewBox="0 0 16 16"><path d="M1.5 14L5 8.5h10L11.5 14z" fill="#9a9a2a" stroke="#000" stroke-width="1.2"/><path d="M2 6.5h4M8 4.5q2.5 -2.5 4 0l2 -1" fill="none" stroke="#000" stroke-width="1.5"/><path d="M4 9h6" stroke="#e8e890" stroke-width="1"/></svg>
<div class="b" style="left:42.5px;top:38px;width:18.5px;height:18px"></div>
<svg class="i" style="left:45.00px;top:40.25px;width:13.5px;height:13.5px" viewBox="0 0 16 16"><rect x="2" y="2" width="12.5" height="12.5" fill="#000"/><rect x="4" y="3.5" width="8.5" height="5.5" fill="#ecebdf"/><rect x="10" y="11" width="2.3" height="2.3" fill="#fff"/></svg>
<div class="b" style="left:65.5px;top:38px;width:18.5px;height:18px"></div>
<svg class="i" style="left:68.00px;top:40.25px;width:13.5px;height:13.5px" viewBox="0 0 16 16"><path d="M4 6V3h6.5l2 -1.5 1.5 2.5-2 1.5" fill="#fff" stroke="#000" stroke-width="1.5"/><rect x="1.2" y="6.5" width="13.6" height="6.5" rx="1.5" fill="#fff" stroke="#000" stroke-width="1.8"/><path d="M2 10h12" stroke="#000" stroke-width="1.6"/></svg>
<div class="b" style="left:89px;top:38px;width:18.5px;height:18px"></div>
<svg class="i" style="left:91.50px;top:40.25px;width:13.5px;height:13.5px" viewBox="0 0 16 16"><path d="M5 1.5L10 10M11 1.5L6 10" stroke="#000" stroke-width="1.2"/><circle cx="5" cy="12" r="2.3" fill="none" stroke="#1a1a9a" stroke-width="1.6"/><circle cx="11" cy="12" r="2.3" fill="none" stroke="#1a1a9a" stroke-width="1.6"/></svg>
<div class="b" style="left:107.5px;top:38px;width:18.5px;height:18px"></div>
<svg class="i" style="left:110.00px;top:40.25px;width:13.5px;height:13.5px" viewBox="0 0 16 16"><path d="M1.5 1.5h6v9h-6z" fill="#fff" stroke="#000" stroke-width="1.3"/><path d="M3 4.5h3M3 7h3" stroke="#000"/><path d="M6.5 6.5h6l2 2v6h-8z" fill="#fff" stroke="#000" stroke-width="1.3"/><path d="M8 10h5M8 12.5h5" stroke="#000"/></svg>
<div class="b" style="left:126px;top:38px;width:18.5px;height:18px"></div>
<svg class="i" style="left:128.50px;top:40.25px;width:13.5px;height:13.5px" viewBox="0 0 16 16"><g transform="translate(0.8,0.8)"><rect x="2" y="3" width="10" height="11" fill="#ffffff"/><rect x="5" y="1" width="4" height="3" fill="#ffffff"/><rect x="8" y="8" width="6" height="7" fill="#ffffff"/></g><rect x="2" y="3" width="10" height="11" fill="#a9a799"/><rect x="5" y="1" width="4" height="3" fill="#a9a799"/><rect x="8" y="8" width="6" height="7" fill="#a9a799"/></svg>
<div class="b" style="left:144.5px;top:38px;width:18.5px;height:18px"></div>
<svg class="i" style="left:147.00px;top:40.25px;width:13.5px;height:13.5px" viewBox="0 0 16 16"><path d="M2 3.5h4M4 2v7q0 3 3 3V6h3v6" fill="none" stroke="#10106a" stroke-width="2"/><path d="M10 10l2 4" stroke="#c01060" stroke-width="2"/></svg>
<div class="b" style="left:168px;top:38px;width:18.5px;height:18px"></div>
<svg class="i" style="left:170.50px;top:40.25px;width:13.5px;height:13.5px" viewBox="0 0 16 16"><circle cx="7" cy="7" r="5.5" fill="#fff" stroke="#101878" stroke-width="2.1" stroke-dasharray="2.6 0.7"/><rect x="3.5" y="3" width="3" height="8" fill="#e030c0"/><rect x="6.5" y="3" width="2.5" height="8" fill="#f0e030"/><rect x="9" y="4" width="2" height="6" fill="#30b030"/><path d="M11 11L14.5 14.5" stroke="#000" stroke-width="1.8"/></svg>
<div class="b" style="left:186.5px;top:38px;width:18.5px;height:18px"></div>
<svg class="i" style="left:189.00px;top:40.25px;width:13.5px;height:13.5px" viewBox="0 0 16 16"><circle cx="7" cy="7" r="5.5" fill="#fff" stroke="#101878" stroke-width="2.1" stroke-dasharray="2.6 0.7"/><path d="M4 3h4v8H4z" fill="#d02020"/><path d="M7 7l4 3-3 2z" fill="#404050"/><path d="M11 11L14.5 14.5" stroke="#000" stroke-width="1.8"/></svg>
<div class="b" style="left:205px;top:38px;width:18.5px;height:18px"></div>
<svg class="i" style="left:207.50px;top:40.25px;width:13.5px;height:13.5px" viewBox="0 0 16 16"><circle cx="7" cy="7" r="5.5" fill="#fff" stroke="#101878" stroke-width="2.1" stroke-dasharray="2.6 0.7"/><path d="M4.5 4.5l2 2-2 2 2 2M8 4h3v3H8z" stroke="#101060" stroke-width="1.4" fill="none"/><path d="M11 11L14.5 14.5" stroke="#000" stroke-width="1.8"/></svg>
<div class="b" style="left:227.5px;top:38px;width:18.5px;height:18px"></div>
<svg class="i" style="left:230.00px;top:40.25px;width:13.5px;height:13.5px" viewBox="0 0 16 16"><path d="M6 9l6-7 2 2-6 7z" fill="#e02020"/><path d="M2 8l2 1" stroke="#c02020" stroke-width="1.2"/><rect x="3" y="10" width="10" height="5" fill="#801010" stroke="#000" stroke-width="1"/><rect x="5" y="11.5" width="5" height="2" fill="#fff"/></svg>
<div class="b" style="left:246px;top:38px;width:18.5px;height:18px"></div>
<svg class="i" style="left:248.50px;top:40.25px;width:13.5px;height:13.5px" viewBox="0 0 16 16"><path d="M8 1v4M6 3h4" stroke="#20a020" stroke-width="1.2"/><circle cx="12" cy="4" r="2" fill="#f0f040"/><path d="M2 4l2 1" stroke="#1a1a9a" stroke-width="1.4"/><path d="M6 6l2 3" stroke="#e02020" stroke-width="1.4"/><rect x="3.5" y="9.5" width="9" height="5" fill="#801010" stroke="#000" stroke-width="1"/><rect x="5.5" y="11" width="4" height="2" fill="#fff"/></svg>
<div class="b" style="left:269px;top:38px;width:18.5px;height:18px"></div>
<svg class="i" style="left:271.50px;top:40.25px;width:13.5px;height:13.5px" viewBox="0 0 16 16"><circle cx="7" cy="7" r="5.5" fill="#fff" stroke="#101878" stroke-width="2.1" stroke-dasharray="2.6 0.7"/><rect x="3.5" y="5" width="7" height="4.5" fill="#e8c0c0" stroke="#600000" stroke-width="1"/><rect x="4" y="5.5" width="3" height="3.5" fill="#b01010"/><path d="M11 11L14.5 14.5" stroke="#000" stroke-width="1.8"/></svg>
<div class="b" style="left:287.5px;top:38px;width:18.5px;height:18px"></div>
<svg class="i" style="left:290.00px;top:40.25px;width:13.5px;height:13.5px" viewBox="0 0 16 16"><circle cx="7" cy="7" r="5.5" fill="#fff" stroke="#101878" stroke-width="2.1" stroke-dasharray="2.6 0.7"/><rect x="3.5" y="5" width="7.5" height="4.5" fill="#c02020" stroke="#400000" stroke-width="1"/><rect x="7" y="2.5" width="2" height="2" fill="#c06060"/><path d="M11 11L14.5 14.5" stroke="#000" stroke-width="1.8"/></svg>
<div class="b" style="left:310.5px;top:38px;width:18.5px;height:18px"></div>
<svg class="i" style="left:313.00px;top:40.25px;width:13.5px;height:13.5px" viewBox="0 0 16 16"><path d="M1.5 2.5h13v5h-13z" fill="#fff" stroke="#101878" stroke-width="1.4"/><path d="M3 5h4M5 3.5L7 5 5 6.5" stroke="#000" stroke-width="1"/><path d="M1.5 7.5v6h6" fill="none" stroke="#101878" stroke-width="1.4"/><rect x="8.5" y="9.5" width="6" height="5" fill="#c06060" stroke="#000" stroke-width="1"/></svg>
<div class="b" style="left:329px;top:38px;width:18.5px;height:18px"></div>
<svg class="i" style="left:331.50px;top:40.25px;width:13.5px;height:13.5px" viewBox="0 0 16 16"><circle cx="7" cy="7" r="5.5" fill="#fff" stroke="#101878" stroke-width="2.1" stroke-dasharray="2.6 0.7"/><path d="M5 4h4l-2 4v3" stroke="#101060" stroke-width="1.6" fill="none"/><path d="M3 10l3 -2" stroke="#c02040" stroke-width="1.6"/><path d="M11 11L14.5 14.5" stroke="#000" stroke-width="1.8"/></svg>
<div class="a" style="left:0px;top:60px;width:210px;height:24px;border-top:1px solid #faf8f0;border-left:1px solid #faf8f0;border-bottom:1px solid #b4b1a2;border-right:1px solid #c4c1b2"></div>
<div class="a" style="left:4px;top:63px;width:95px;height:16px;background:#f7fcf8;border:1.5px solid #8a887c;border-right-color:#c8c4b4;border-bottom-color:#c8c4b4"></div>
<div class="b" style="left:85px;top:65px;width:13px;height:12px"></div>
<svg class="t" style="left:7.50px;top:64.62px;width:20.09px;height:13.60px" viewBox="0 0 28 16" preserveAspectRatio="none" aria-label="程序"><path fill="#000" d="M3 2h1v1h-1zM5 2h5v1h-5zM17 2h1v1h-1zM0 3h3v1h-3zM5 3h1v1h-1zM9 3h1v1h-1zM13 3h10v1h-10zM2 4h1v1h-1zM5 4h1v1h-1zM9 4h1v1h-1zM13 4h1v1h-1zM0 5h4v1h-4zM5 5h5v1h-5zM13 5h1v1h-1zM15 5h6v1h-6zM2 6h1v1h-1zM13 6h1v1h-1zM17 6h1v1h-1zM19 6h1v1h-1zM2 7h2v1h-2zM5 7h5v1h-5zM13 7h1v1h-1zM18 7h1v1h-1zM1 8h2v1h-2zM4 8h1v1h-1zM7 8h1v1h-1zM13 8h10v1h-10zM1 9h2v1h-2zM5 9h5v1h-5zM13 9h1v1h-1zM18 9h1v1h-1zM21 9h1v1h-1zM0 10h1v1h-1zM2 10h1v1h-1zM7 10h1v1h-1zM13 10h1v1h-1zM18 10h1v1h-1zM2 11h1v1h-1zM7 11h1v1h-1zM12 11h1v1h-1zM18 11h1v1h-1zM2 12h1v1h-1zM4 12h7v1h-7zM12 12h1v1h-1zM16 12h3v1h-3z" stroke="#000" stroke-width="0.25"/></svg>
<div class="a" style="left:106px;top:63px;width:95px;height:16px;background:#f7fcf8;border:1.5px solid #8a887c;border-right-color:#c8c4b4;border-bottom-color:#c8c4b4"></div>
<div class="b" style="left:186px;top:65px;width:13px;height:12px"></div>
<svg class="i" style="left:88.5px;top:70px;width:6px;height:4px" viewBox="0 0 6 4"><path d="M0 0h6L3 3z" fill="#000"/></svg>
<svg class="i" style="left:189.5px;top:70px;width:6px;height:4px" viewBox="0 0 6 4"><path d="M0 0h6L3 3z" fill="#000"/></svg>
<div class="a" style="left:210px;top:60px;width:47.5px;height:24px;border-top:1px solid #faf8f0;border-left:1px solid #faf8f0;border-bottom:1px solid #b4b1a2;border-right:1px solid #c4c1b2"></div>
<div class="b" style="left:216px;top:63px;width:17px;height:18px"></div>
<svg class="i" style="left:217.75px;top:65.25px;width:13.5px;height:13.5px" viewBox="0 0 16 16"><circle cx="8" cy="5" r="3" fill="#fff" stroke="#101878" stroke-width="1.4"/><path d="M10 7l3 3" stroke="#000" stroke-width="1.8"/><path d="M1 14h10" stroke="#000" stroke-width="1.4"/><path d="M6 4h3" stroke="#000"/></svg>
<div class="b" style="left:233px;top:63px;width:18px;height:18px;border-color:#8a887c #fbfaf4 #fbfaf4 #8a887c;background:#f6f5ee"></div>
<svg class="i" style="left:235.25px;top:65.25px;width:13.5px;height:13.5px" viewBox="0 0 16 16"><path d="M3 2v12" stroke="#000" stroke-width="1.2" stroke-dasharray="1.5 1"/><rect x="1" y="3" width="4" height="3" fill="#101878"/><rect x="7" y="4" width="4" height="3.5" fill="#c020a0"/><rect x="10" y="9" width="5" height="4" fill="#101878"/><path d="M5 5h2M11 8v1" stroke="#000"/></svg>
<div class="a" style="left:257.5px;top:60px;width:47.5px;height:24px;border-top:1px solid #faf8f0;border-left:1px solid #faf8f0;border-bottom:1px solid #b4b1a2;border-right:1px solid #c4c1b2"></div>
<div class="b" style="left:264px;top:63px;width:17px;height:18px"></div>
<svg class="i" style="left:265.75px;top:65.25px;width:13.5px;height:13.5px" viewBox="0 0 16 16"><g transform="translate(0.8,0.8)"><rect x="3" y="3" width="10" height="3" fill="#ffffff"/><rect x="7" y="6" width="2" height="4" fill="#ffffff"/><rect x="6" y="10" width="4" height="3" fill="#ffffff"/></g><rect x="3" y="3" width="10" height="3" fill="#a9a799"/><rect x="7" y="6" width="2" height="4" fill="#a9a799"/><rect x="6" y="10" width="4" height="3" fill="#a9a799"/></svg>
<div class="b" style="left:281px;top:63px;width:18.7px;height:18px"></div>
<svg class="i" style="left:283.60px;top:65.25px;width:13.5px;height:13.5px" viewBox="0 0 16 16"><g transform="translate(0.8,0.8)"><path d="M2 2h6v6H2z M9 2h5v6H9z" fill="none" stroke="#ffffff" stroke-width="1.4"/><path d="M2 11h12v3H2z" fill="#ffffff"/></g><path d="M2 2h6v6H2z M9 2h5v6H9z" fill="none" stroke="#a9a799" stroke-width="1.4"/><path d="M2 11h12v3H2z" fill="#a9a799"/></svg>
<div class="a" style="left:305px;top:60px;width:30px;height:24px;border-top:1px solid #faf8f0;border-left:1px solid #faf8f0;border-bottom:1px solid #b4b1a2;border-right:1px solid #c4c1b2"></div>
<div class="b" style="left:312px;top:63px;width:17.4px;height:18px"></div>
<svg class="i" style="left:313.95px;top:65.25px;width:13.5px;height:13.5px" viewBox="0 0 16 16"><g transform="translate(0.8,0.8)"><path d="M3 3h3v4H3z" fill="none" stroke="#ffffff" stroke-width="1.4"/><path d="M4.5 7v6" stroke="#ffffff" stroke-width="1.4" stroke-dasharray="1.5 1"/><path d="M9 2h5v12H9z" fill="none" stroke="#ffffff" stroke-width="1.4"/><path d="M11 5h1M11 8h1M11 11h1" stroke="#ffffff" stroke-width="1.4"/></g><path d="M3 3h3v4H3z" fill="none" stroke="#a9a799" stroke-width="1.4"/><path d="M4.5 7v6" stroke="#a9a799" stroke-width="1.4" stroke-dasharray="1.5 1"/><path d="M9 2h5v12H9z" fill="none" stroke="#a9a799" stroke-width="1.4"/><path d="M11 5h1M11 8h1M11 11h1" stroke="#a9a799" stroke-width="1.4"/></svg>
<div class="a" style="left:0px;top:84px;width:420px;height:26px;border-top:1px solid #faf8f0;border-left:1px solid #faf8f0;border-bottom:1px solid #b4b1a2;border-right:1px solid #c4c1b2"></div>
<div class="b" style="left:4.5px;top:87px;width:20.5px;height:19.5px"></div>
<svg class="i" style="left:7.70px;top:89.60px;width:14.00px;height:8.55px" viewBox="0 0 16 9"><path d="M0 4.5h5M11 4.5h5M5.5 1v7M10.5 1v7" stroke="#000" stroke-width="1.25"/></svg>
<svg class="t" style="left:10.55px;top:95.65px;width:12.22px;height:9.92px" viewBox="0 0 16 16" preserveAspectRatio="none" aria-label="F5"><path fill="#000" d="M0 4h5v1h-5zM6 4h4v1h-4zM0 5h1v1h-1zM6 5h1v1h-1zM0 6h1v1h-1zM6 6h1v1h-1zM0 7h4v1h-4zM6 7h4v1h-4zM0 8h1v1h-1zM10 8h1v1h-1zM0 9h1v1h-1zM10 9h1v1h-1zM0 10h1v1h-1zM10 10h1v1h-1zM0 11h1v1h-1zM6 11h4v1h-4z" stroke="#000" stroke-width="0.3"/></svg>
<div class="b" style="left:25px;top:87px;width:20.5px;height:19.5px"></div>
<svg class="i" style="left:28.20px;top:89.60px;width:14.00px;height:8.55px" viewBox="0 0 16 9"><path d="M2 1v6h3M9 1v7M12 1v7M12 7h3M9 7H6" stroke="#000" stroke-width="1.25" fill="none"/></svg>
<svg class="t" style="left:28.95px;top:95.65px;width:17.05px;height:9.92px" viewBox="0 0 23 16" preserveAspectRatio="none" aria-label="sF5"><path fill="#000" d="M6 4h5v1h-5zM12 4h4v1h-4zM6 5h1v1h-1zM12 5h1v1h-1zM1 6h3v1h-3zM6 6h1v1h-1zM12 6h1v1h-1zM0 7h1v1h-1zM4 7h1v1h-1zM6 7h4v1h-4zM12 7h4v1h-4zM1 8h2v1h-2zM6 8h1v1h-1zM16 8h1v1h-1zM3 9h1v1h-1zM6 9h1v1h-1zM16 9h1v1h-1zM0 10h1v1h-1zM4 10h1v1h-1zM6 10h1v1h-1zM16 10h1v1h-1zM1 11h3v1h-3zM6 11h1v1h-1zM12 11h4v1h-4z" stroke="#000" stroke-width="0.3"/></svg>
<div class="b" style="left:46px;top:87px;width:20.5px;height:19.5px"></div>
<svg class="i" style="left:49.20px;top:89.60px;width:14.00px;height:8.55px" viewBox="0 0 16 9"><path d="M0 4.5h5M11 4.5h5M5.5 1v7M10.5 1v7M6 7.5l4-6" stroke="#000" stroke-width="1.25"/></svg>
<svg class="t" style="left:52.05px;top:95.65px;width:12.22px;height:9.92px" viewBox="0 0 16 16" preserveAspectRatio="none" aria-label="F6"><path fill="#000" d="M0 4h5v1h-5zM7 4h3v1h-3zM0 5h1v1h-1zM6 5h1v1h-1zM0 6h1v1h-1zM6 6h1v1h-1zM0 7h4v1h-4zM6 7h4v1h-4zM0 8h1v1h-1zM6 8h1v1h-1zM10 8h1v1h-1zM0 9h1v1h-1zM6 9h1v1h-1zM10 9h1v1h-1zM0 10h1v1h-1zM6 10h1v1h-1zM10 10h1v1h-1zM0 11h1v1h-1zM7 11h3v1h-3z" stroke="#000" stroke-width="0.3"/></svg>
<div class="b" style="left:67px;top:87px;width:20.5px;height:19.5px"></div>
<svg class="i" style="left:70.20px;top:89.60px;width:14.00px;height:8.55px" viewBox="0 0 16 9"><path d="M1 1v4h3M4 1v7M7 1v7M7 7.5l3-6M10 1v7M13 1v7M13 5h2" stroke="#000" stroke-width="1.2" fill="none"/></svg>
<svg class="t" style="left:70.95px;top:95.65px;width:17.05px;height:9.92px" viewBox="0 0 23 16" preserveAspectRatio="none" aria-label="sF6"><path fill="#000" d="M6 4h5v1h-5zM13 4h3v1h-3zM6 5h1v1h-1zM12 5h1v1h-1zM1 6h3v1h-3zM6 6h1v1h-1zM12 6h1v1h-1zM0 7h1v1h-1zM4 7h1v1h-1zM6 7h4v1h-4zM12 7h4v1h-4zM1 8h2v1h-2zM6 8h1v1h-1zM12 8h1v1h-1zM16 8h1v1h-1zM3 9h1v1h-1zM6 9h1v1h-1zM12 9h1v1h-1zM16 9h1v1h-1zM0 10h1v1h-1zM4 10h1v1h-1zM6 10h1v1h-1zM12 10h1v1h-1zM16 10h1v1h-1zM1 11h3v1h-3zM6 11h1v1h-1zM13 11h3v1h-3z" stroke="#000" stroke-width="0.3"/></svg>
<div class="b" style="left:88px;top:87px;width:20.5px;height:19.5px"></div>
<svg class="i" style="left:91.20px;top:89.60px;width:14.00px;height:8.55px" viewBox="0 0 16 9"><path d="M0 4.5h4M12 4.5h4" stroke="#000" stroke-width="1.25"/><path d="M5.5 1.5q-2 3 0 6M10.5 1.5q2 3 0 6" fill="none" stroke="#000" stroke-width="1.25"/><path d="M6 1.5h4M6 7.5h4" stroke="#000" stroke-width="1.3"/></svg>
<svg class="t" style="left:94.05px;top:95.65px;width:12.22px;height:9.92px" viewBox="0 0 16 16" preserveAspectRatio="none" aria-label="F7"><path fill="#000" d="M0 4h5v1h-5zM6 4h5v1h-5zM0 5h1v1h-1zM10 5h1v1h-1zM0 6h1v1h-1zM10 6h1v1h-1zM0 7h4v1h-4zM9 7h1v1h-1zM0 8h1v1h-1zM9 8h1v1h-1zM0 9h1v1h-1zM8 9h1v1h-1zM0 10h1v1h-1zM8 10h1v1h-1zM0 11h1v1h-1zM8 11h1v1h-1z" stroke="#000" stroke-width="0.3"/></svg>
<div class="b" style="left:109px;top:87px;width:20.5px;height:19.5px"></div>
<svg class="i" style="left:112.20px;top:89.60px;width:14.00px;height:8.55px" viewBox="0 0 16 9"><path d="M6 1h-2v3l-1 1 1 1v2h2M10 1h2v3l1 1-1 1v2h-2" fill="none" stroke="#000" stroke-width="1.25"/></svg>
<svg class="t" style="left:115.05px;top:95.65px;width:12.22px;height:9.92px" viewBox="0 0 16 16" preserveAspectRatio="none" aria-label="F8"><path fill="#000" d="M0 4h5v1h-5zM7 4h3v1h-3zM0 5h1v1h-1zM6 5h1v1h-1zM10 5h1v1h-1zM0 6h1v1h-1zM6 6h1v1h-1zM10 6h1v1h-1zM0 7h4v1h-4zM7 7h3v1h-3zM0 8h1v1h-1zM6 8h1v1h-1zM10 8h1v1h-1zM0 9h1v1h-1zM6 9h1v1h-1zM10 9h1v1h-1zM0 10h1v1h-1zM6 10h1v1h-1zM10 10h1v1h-1zM0 11h1v1h-1zM7 11h3v1h-3z" stroke="#000" stroke-width="0.3"/></svg>
<div class="b" style="left:135px;top:87px;width:20.5px;height:19.5px"></div>
<svg class="i" style="left:138.20px;top:89.60px;width:14.00px;height:8.55px" viewBox="0 0 16 9"><path d="M1 4h14" stroke="#000" stroke-width="1.25"/></svg>
<svg class="t" style="left:141.05px;top:95.65px;width:12.22px;height:9.92px" viewBox="0 0 16 16" preserveAspectRatio="none" aria-label="F9"><path fill="#000" d="M0 4h5v1h-5zM7 4h3v1h-3zM0 5h1v1h-1zM6 5h1v1h-1zM10 5h1v1h-1zM0 6h1v1h-1zM6 6h1v1h-1zM10 6h1v1h-1zM0 7h4v1h-4zM6 7h1v1h-1zM10 7h1v1h-1zM0 8h1v1h-1zM7 8h4v1h-4zM0 9h1v1h-1zM10 9h1v1h-1zM0 10h1v1h-1zM6 10h1v1h-1zM10 10h1v1h-1zM0 11h1v1h-1zM7 11h3v1h-3z" stroke="#000" stroke-width="0.3"/></svg>
<div class="b" style="left:155px;top:87px;width:20.5px;height:19.5px"></div>
<svg class="i" style="left:158.20px;top:89.60px;width:14.00px;height:8.55px" viewBox="0 0 16 9"><path d="M8 1v8" stroke="#000" stroke-width="1.25"/></svg>
<svg class="t" style="left:158.95px;top:95.65px;width:17.05px;height:9.92px" viewBox="0 0 23 16" preserveAspectRatio="none" aria-label="sF9"><path fill="#000" d="M6 4h5v1h-5zM13 4h3v1h-3zM6 5h1v1h-1zM12 5h1v1h-1zM16 5h1v1h-1zM1 6h3v1h-3zM6 6h1v1h-1zM12 6h1v1h-1zM16 6h1v1h-1zM0 7h1v1h-1zM4 7h1v1h-1zM6 7h4v1h-4zM12 7h1v1h-1zM16 7h1v1h-1zM1 8h2v1h-2zM6 8h1v1h-1zM13 8h4v1h-4zM3 9h1v1h-1zM6 9h1v1h-1zM16 9h1v1h-1zM0 10h1v1h-1zM4 10h1v1h-1zM6 10h1v1h-1zM12 10h1v1h-1zM16 10h1v1h-1zM1 11h3v1h-3zM6 11h1v1h-1zM13 11h3v1h-3z" stroke="#000" stroke-width="0.3"/></svg>
<div class="b" style="left:176px;top:87px;width:20.5px;height:19.5px"></div>
<svg class="i" style="left:179.20px;top:89.60px;width:14.00px;height:8.55px" viewBox="0 0 16 9"><path d="M1 4.5h14" stroke="#000" stroke-width="1.25"/><path d="M5 2l6 5M11 2L5 7" stroke="#e01818" stroke-width="1.2"/></svg>
<svg class="t" style="left:179.95px;top:95.65px;width:16.31px;height:9.92px" viewBox="0 0 22 16" preserveAspectRatio="none" aria-label="cF9"><path fill="#000" d="M6 4h5v1h-5zM13 4h3v1h-3zM6 5h1v1h-1zM12 5h1v1h-1zM16 5h1v1h-1zM1 6h3v1h-3zM6 6h1v1h-1zM12 6h1v1h-1zM16 6h1v1h-1zM0 7h1v1h-1zM6 7h4v1h-4zM12 7h1v1h-1zM16 7h1v1h-1zM0 8h1v1h-1zM6 8h1v1h-1zM13 8h4v1h-4zM0 9h1v1h-1zM6 9h1v1h-1zM16 9h1v1h-1zM0 10h1v1h-1zM6 10h1v1h-1zM12 10h1v1h-1zM16 10h1v1h-1zM1 11h3v1h-3zM6 11h1v1h-1zM13 11h3v1h-3z" stroke="#000" stroke-width="0.3"/></svg>
<div class="b" style="left:196px;top:87px;width:20.5px;height:19.5px"></div>
<svg class="i" style="left:199.20px;top:89.60px;width:14.00px;height:8.55px" viewBox="0 0 16 9"><path d="M8 1v8" stroke="#e01818" stroke-width="1.25"/><path d="M5 2l6 5M11 2L5 7" stroke="#e01818" stroke-width="1.2"/></svg>
<svg class="t" style="left:198.50px;top:95.65px;width:18.73px;height:9.92px" viewBox="0 0 29 16" preserveAspectRatio="none" aria-label="cF10"><path fill="#000" d="M6 4h5v1h-5zM12 4h3v1h-3zM20 4h3v1h-3zM6 5h1v1h-1zM14 5h1v1h-1zM19 5h1v1h-1zM23 5h1v1h-1zM1 6h3v1h-3zM6 6h1v1h-1zM14 6h1v1h-1zM19 6h1v1h-1zM23 6h1v1h-1zM0 7h1v1h-1zM6 7h4v1h-4zM14 7h1v1h-1zM19 7h1v1h-1zM23 7h1v1h-1zM0 8h1v1h-1zM6 8h1v1h-1zM14 8h1v1h-1zM19 8h1v1h-1zM23 8h1v1h-1zM0 9h1v1h-1zM6 9h1v1h-1zM14 9h1v1h-1zM19 9h1v1h-1zM23 9h1v1h-1zM0 10h1v1h-1zM6 10h1v1h-1zM14 10h1v1h-1zM19 10h1v1h-1zM23 10h1v1h-1zM1 11h3v1h-3zM6 11h1v1h-1zM12 11h5v1h-5zM20 11h3v1h-3z" stroke="#000" stroke-width="0.3"/></svg>
<div class="b" style="left:222.5px;top:87px;width:20.5px;height:19.5px"></div>
<svg class="i" style="left:225.70px;top:89.60px;width:14.00px;height:8.55px" viewBox="0 0 16 9"><path d="M0 4.5h4M4.5 1v7M8 1v7M6 3l2-2 2 2M11.5 1v7M12 4.5h4" stroke="#000" stroke-width="1.2" fill="none"/></svg>
<svg class="t" style="left:226.45px;top:95.65px;width:17.05px;height:9.92px" viewBox="0 0 23 16" preserveAspectRatio="none" aria-label="sF7"><path fill="#000" d="M6 4h5v1h-5zM12 4h5v1h-5zM6 5h1v1h-1zM16 5h1v1h-1zM1 6h3v1h-3zM6 6h1v1h-1zM16 6h1v1h-1zM0 7h1v1h-1zM4 7h1v1h-1zM6 7h4v1h-4zM15 7h1v1h-1zM1 8h2v1h-2zM6 8h1v1h-1zM15 8h1v1h-1zM3 9h1v1h-1zM6 9h1v1h-1zM14 9h1v1h-1zM0 10h1v1h-1zM4 10h1v1h-1zM6 10h1v1h-1zM14 10h1v1h-1zM1 11h3v1h-3zM6 11h1v1h-1zM14 11h1v1h-1z" stroke="#000" stroke-width="0.3"/></svg>
<div class="b" style="left:244px;top:87px;width:20.5px;height:19.5px"></div>
<svg class="i" style="left:247.20px;top:89.60px;width:14.00px;height:8.55px" viewBox="0 0 16 9"><path d="M0 4.5h4M4.5 1v7M8 1v7M6 6l2 2 2-2M11.5 1v7M12 4.5h4" stroke="#000" stroke-width="1.2" fill="none"/></svg>
<svg class="t" style="left:247.95px;top:95.65px;width:17.05px;height:9.92px" viewBox="0 0 23 16" preserveAspectRatio="none" aria-label="sF8"><path fill="#000" d="M6 4h5v1h-5zM13 4h3v1h-3zM6 5h1v1h-1zM12 5h1v1h-1zM16 5h1v1h-1zM1 6h3v1h-3zM6 6h1v1h-1zM12 6h1v1h-1zM16 6h1v1h-1zM0 7h1v1h-1zM4 7h1v1h-1zM6 7h4v1h-4zM13 7h3v1h-3zM1 8h2v1h-2zM6 8h1v1h-1zM12 8h1v1h-1zM16 8h1v1h-1zM3 9h1v1h-1zM6 9h1v1h-1zM12 9h1v1h-1zM16 9h1v1h-1zM0 10h1v1h-1zM4 10h1v1h-1zM6 10h1v1h-1zM12 10h1v1h-1zM16 10h1v1h-1zM1 11h3v1h-3zM6 11h1v1h-1zM13 11h3v1h-3z" stroke="#000" stroke-width="0.3"/></svg>
<div class="b" style="left:264px;top:87px;width:20.5px;height:19.5px"></div>
<svg class="i" style="left:267.20px;top:89.60px;width:14.00px;height:8.55px" viewBox="0 0 16 9"><path d="M1 1v4h3M4 1v7M7 1v7M10 4.5h5" stroke="#000" stroke-width="1.2" fill="none"/></svg>
<svg class="t" style="left:267.95px;top:95.65px;width:17.05px;height:9.92px" viewBox="0 0 23 16" preserveAspectRatio="none" aria-label="aF7"><path fill="#000" d="M6 4h5v1h-5zM12 4h5v1h-5zM6 5h1v1h-1zM16 5h1v1h-1zM1 6h3v1h-3zM6 6h1v1h-1zM16 6h1v1h-1zM0 7h1v1h-1zM4 7h1v1h-1zM6 7h4v1h-4zM15 7h1v1h-1zM1 8h4v1h-4zM6 8h1v1h-1zM15 8h1v1h-1zM0 9h1v1h-1zM4 9h1v1h-1zM6 9h1v1h-1zM14 9h1v1h-1zM0 10h1v1h-1zM4 10h1v1h-1zM6 10h1v1h-1zM14 10h1v1h-1zM1 11h4v1h-4zM6 11h1v1h-1zM14 11h1v1h-1z" stroke="#000" stroke-width="0.3"/></svg>
<div class="b" style="left:285px;top:87px;width:20.5px;height:19.5px"></div>
<svg class="i" style="left:288.20px;top:89.60px;width:14.00px;height:8.55px" viewBox="0 0 16 9"><path d="M0 4.5h4M4.5 1v7M7 1v7M7 5l2-2M11 1v7M14 1v4h-3" stroke="#000" stroke-width="1.2" fill="none"/></svg>
<svg class="t" style="left:288.95px;top:95.65px;width:17.05px;height:9.92px" viewBox="0 0 23 16" preserveAspectRatio="none" aria-label="aF8"><path fill="#000" d="M6 4h5v1h-5zM13 4h3v1h-3zM6 5h1v1h-1zM12 5h1v1h-1zM16 5h1v1h-1zM1 6h3v1h-3zM6 6h1v1h-1zM12 6h1v1h-1zM16 6h1v1h-1zM0 7h1v1h-1zM4 7h1v1h-1zM6 7h4v1h-4zM13 7h3v1h-3zM1 8h4v1h-4zM6 8h1v1h-1zM12 8h1v1h-1zM16 8h1v1h-1zM0 9h1v1h-1zM4 9h1v1h-1zM6 9h1v1h-1zM12 9h1v1h-1zM16 9h1v1h-1zM0 10h1v1h-1zM4 10h1v1h-1zM6 10h1v1h-1zM12 10h1v1h-1zM16 10h1v1h-1zM1 11h4v1h-4zM6 11h1v1h-1zM13 11h3v1h-3z" stroke="#000" stroke-width="0.3"/></svg>
<div class="b" style="left:310px;top:87px;width:20.5px;height:19.5px"></div>
<svg class="i" style="left:314.00px;top:90.40px;width:14.00px;height:8.55px" viewBox="0 0 16 9"><path d="M8 1v8" stroke="#fff" stroke-width="1.3"/></svg>
<svg class="i" style="left:313.20px;top:89.60px;width:14.00px;height:8.55px" viewBox="0 0 16 9"><path d="M8 1v8" stroke="#aaa89a" stroke-width="1.3"/></svg>
<svg class="t" style="left:314.75px;top:96.45px;width:17.05px;height:9.92px" viewBox="0 0 23 16" preserveAspectRatio="none" aria-label="aF5"><path fill="#fff" d="M6 4h5v1h-5zM12 4h4v1h-4zM6 5h1v1h-1zM12 5h1v1h-1zM1 6h3v1h-3zM6 6h1v1h-1zM12 6h1v1h-1zM0 7h1v1h-1zM4 7h1v1h-1zM6 7h4v1h-4zM12 7h4v1h-4zM1 8h4v1h-4zM6 8h1v1h-1zM16 8h1v1h-1zM0 9h1v1h-1zM4 9h1v1h-1zM6 9h1v1h-1zM16 9h1v1h-1zM0 10h1v1h-1zM4 10h1v1h-1zM6 10h1v1h-1zM16 10h1v1h-1zM1 11h4v1h-4zM6 11h1v1h-1zM12 11h4v1h-4z"/></svg>
<svg class="t" style="left:313.95px;top:95.65px;width:17.05px;height:9.92px" viewBox="0 0 23 16" preserveAspectRatio="none" aria-label="aF5"><path fill="#aaa89a" d="M6 4h5v1h-5zM12 4h4v1h-4zM6 5h1v1h-1zM12 5h1v1h-1zM1 6h3v1h-3zM6 6h1v1h-1zM12 6h1v1h-1zM0 7h1v1h-1zM4 7h1v1h-1zM6 7h4v1h-4zM12 7h4v1h-4zM1 8h4v1h-4zM6 8h1v1h-1zM16 8h1v1h-1zM0 9h1v1h-1zM4 9h1v1h-1zM6 9h1v1h-1zM16 9h1v1h-1zM0 10h1v1h-1zM4 10h1v1h-1zM6 10h1v1h-1zM16 10h1v1h-1zM1 11h4v1h-4zM6 11h1v1h-1zM12 11h4v1h-4z"/></svg>
<div class="b" style="left:330px;top:87px;width:20.5px;height:19.5px"></div>
<svg class="i" style="left:334.00px;top:90.40px;width:14.00px;height:8.55px" viewBox="0 0 16 9"><path d="M8 1v8M5.5 6l2.5 3 2.5-3" stroke="#fff" stroke-width="1.3" fill="none"/></svg>
<svg class="i" style="left:333.20px;top:89.60px;width:14.00px;height:8.55px" viewBox="0 0 16 9"><path d="M8 1v8M5.5 6l2.5 3 2.5-3" stroke="#aaa89a" stroke-width="1.3" fill="none"/></svg>
<svg class="t" style="left:333.30px;top:96.45px;width:19.54px;height:9.92px" viewBox="0 0 29 16" preserveAspectRatio="none" aria-label="caF5"><path fill="#fff" d="M12 4h5v1h-5zM18 4h4v1h-4zM12 5h1v1h-1zM18 5h1v1h-1zM1 6h3v1h-3zM7 6h3v1h-3zM12 6h1v1h-1zM18 6h1v1h-1zM0 7h1v1h-1zM6 7h1v1h-1zM10 7h1v1h-1zM12 7h4v1h-4zM18 7h4v1h-4zM0 8h1v1h-1zM7 8h4v1h-4zM12 8h1v1h-1zM22 8h1v1h-1zM0 9h1v1h-1zM6 9h1v1h-1zM10 9h1v1h-1zM12 9h1v1h-1zM22 9h1v1h-1zM0 10h1v1h-1zM6 10h1v1h-1zM10 10h1v1h-1zM12 10h1v1h-1zM22 10h1v1h-1zM1 11h3v1h-3zM7 11h4v1h-4zM12 11h1v1h-1zM18 11h4v1h-4z"/></svg>
<svg class="t" style="left:332.50px;top:95.65px;width:19.54px;height:9.92px" viewBox="0 0 29 16" preserveAspectRatio="none" aria-label="caF5"><path fill="#aaa89a" d="M12 4h5v1h-5zM18 4h4v1h-4zM12 5h1v1h-1zM18 5h1v1h-1zM1 6h3v1h-3zM7 6h3v1h-3zM12 6h1v1h-1zM18 6h1v1h-1zM0 7h1v1h-1zM6 7h1v1h-1zM10 7h1v1h-1zM12 7h4v1h-4zM18 7h4v1h-4zM0 8h1v1h-1zM7 8h4v1h-4zM12 8h1v1h-1zM22 8h1v1h-1zM0 9h1v1h-1zM6 9h1v1h-1zM10 9h1v1h-1zM12 9h1v1h-1zM22 9h1v1h-1zM0 10h1v1h-1zM6 10h1v1h-1zM10 10h1v1h-1zM12 10h1v1h-1zM22 10h1v1h-1zM1 11h3v1h-3zM7 11h4v1h-4zM12 11h1v1h-1zM18 11h4v1h-4z"/></svg>
<div class="b" style="left:351px;top:87px;width:20.5px;height:19.5px"></div>
<svg class="i" style="left:354.20px;top:89.60px;width:14.00px;height:8.55px" viewBox="0 0 16 9"><path d="M1 5h5M10 5h5M5 7l6-4" stroke="#000" stroke-width="1.25"/></svg>
<svg class="t" style="left:353.50px;top:95.65px;width:18.60px;height:9.92px" viewBox="0 0 36 16" preserveAspectRatio="none" aria-label="caF10"><path fill="#000" d="M12 4h5v1h-5zM18 4h3v1h-3zM26 4h3v1h-3zM12 5h1v1h-1zM20 5h1v1h-1zM25 5h1v1h-1zM29 5h1v1h-1zM1 6h3v1h-3zM7 6h3v1h-3zM12 6h1v1h-1zM20 6h1v1h-1zM25 6h1v1h-1zM29 6h1v1h-1zM0 7h1v1h-1zM6 7h1v1h-1zM10 7h1v1h-1zM12 7h4v1h-4zM20 7h1v1h-1zM25 7h1v1h-1zM29 7h1v1h-1zM0 8h1v1h-1zM7 8h4v1h-4zM12 8h1v1h-1zM20 8h1v1h-1zM25 8h1v1h-1zM29 8h1v1h-1zM0 9h1v1h-1zM6 9h1v1h-1zM10 9h1v1h-1zM12 9h1v1h-1zM20 9h1v1h-1zM25 9h1v1h-1zM29 9h1v1h-1zM0 10h1v1h-1zM6 10h1v1h-1zM10 10h1v1h-1zM12 10h1v1h-1zM20 10h1v1h-1zM25 10h1v1h-1zM29 10h1v1h-1zM1 11h3v1h-3zM7 11h4v1h-4zM12 11h1v1h-1zM18 11h5v1h-5zM26 11h3v1h-3z" stroke="#000" stroke-width="0.3"/></svg>
<div class="b" style="left:372.5px;top:87px;width:20.5px;height:19.5px"></div>
<svg class="i" style="left:375.70px;top:89.60px;width:14.00px;height:8.55px" viewBox="0 0 16 9"><path d="M3 1v5h11" stroke="#000" stroke-width="1.25" fill="none"/></svg>
<svg class="t" style="left:376.45px;top:95.65px;width:16.80px;height:9.92px" viewBox="0 0 24 16" preserveAspectRatio="none" aria-label="F10"><path fill="#000" d="M0 4h5v1h-5zM6 4h3v1h-3zM14 4h3v1h-3zM0 5h1v1h-1zM8 5h1v1h-1zM13 5h1v1h-1zM17 5h1v1h-1zM0 6h1v1h-1zM8 6h1v1h-1zM13 6h1v1h-1zM17 6h1v1h-1zM0 7h4v1h-4zM8 7h1v1h-1zM13 7h1v1h-1zM17 7h1v1h-1zM0 8h1v1h-1zM8 8h1v1h-1zM13 8h1v1h-1zM17 8h1v1h-1zM0 9h1v1h-1zM8 9h1v1h-1zM13 9h1v1h-1zM17 9h1v1h-1zM0 10h1v1h-1zM8 10h1v1h-1zM13 10h1v1h-1zM17 10h1v1h-1zM0 11h1v1h-1zM6 11h5v1h-5zM14 11h3v1h-3z" stroke="#000" stroke-width="0.3"/></svg>
<div class="b" style="left:394px;top:87px;width:20.5px;height:19.5px"></div>
<svg class="i" style="left:397.20px;top:89.60px;width:14.00px;height:8.55px" viewBox="0 0 16 9"><path d="M1 6h14M3 1v5" stroke="#000" stroke-width="1.25" fill="none"/><path d="M6 2l5 4M11 1L6 5" stroke="#e01818" stroke-width="1.2"/></svg>
<svg class="t" style="left:397.95px;top:95.65px;width:17.05px;height:9.92px" viewBox="0 0 23 16" preserveAspectRatio="none" aria-label="aF9"><path fill="#000" d="M6 4h5v1h-5zM13 4h3v1h-3zM6 5h1v1h-1zM12 5h1v1h-1zM16 5h1v1h-1zM1 6h3v1h-3zM6 6h1v1h-1zM12 6h1v1h-1zM16 6h1v1h-1zM0 7h1v1h-1zM4 7h1v1h-1zM6 7h4v1h-4zM12 7h1v1h-1zM16 7h1v1h-1zM1 8h4v1h-4zM6 8h1v1h-1zM13 8h4v1h-4zM0 9h1v1h-1zM4 9h1v1h-1zM6 9h1v1h-1zM16 9h1v1h-1zM0 10h1v1h-1zM4 10h1v1h-1zM6 10h1v1h-1zM12 10h1v1h-1zM16 10h1v1h-1zM1 11h4v1h-4zM6 11h1v1h-1zM13 11h3v1h-3z" stroke="#000" stroke-width="0.3"/></svg>
<div class="a" style="left:0px;top:110px;width:439px;height:25px;border-top:1px solid #faf8f0;border-left:1px solid #faf8f0;border-bottom:1px solid #b4b1a2;border-right:1px solid #c4c1b2"></div>
<div class="b" style="left:5.5px;top:113px;width:18px;height:18.5px"></div>
<svg class="i" style="left:7.75px;top:115.50px;width:13.5px;height:13.5px" viewBox="0 0 16 16"><rect x="1.5" y="1.5" width="7" height="6" fill="#fff" stroke="#101878" stroke-width="1.6"/><rect x="3" y="3.5" width="1.6" height="2" fill="#c02070"/><rect x="6" y="3.5" width="1.6" height="2" fill="#c02070"/><path d="M2 9l3 4h10V9" fill="none" stroke="#101878" stroke-width="1.6"/><path d="M7 10v3M9.5 10v3M12 10v3" stroke="#101878" stroke-width="1.6"/><path d="M12 2v5" stroke="#101878" stroke-width="1.3" stroke-dasharray="1.2 1"/></svg>
<div class="b" style="left:27.5px;top:113px;width:18px;height:18.5px"></div>
<svg class="i" style="left:29.75px;top:115.50px;width:13.5px;height:13.5px" viewBox="0 0 16 16"><path d="M1 4h4M7 4h4M13 4h2M1 7.5h2M5 7.5h5M12 7.5h3M1 11h4M7 11h3M12 11h3M4 14h3M9 14h2" stroke="#101878" stroke-width="1.3"/></svg>
<div class="b" style="left:46px;top:113px;width:18px;height:18.5px;border-color:#8a887c #fbfaf4 #fbfaf4 #8a887c;background:#f6f5ee"></div>
<svg class="i" style="left:48.25px;top:115.50px;width:13.5px;height:13.5px" viewBox="0 0 16 16"><path d="M1 6h14M1 10h5M9 10h6" stroke="#101878" stroke-width="1.4"/><path d="M5 4l3 4 6-7" fill="none" stroke="#e02020" stroke-width="1.8"/><circle cx="7.5" cy="12" r="2" fill="none" stroke="#101878" stroke-width="1.2" stroke-dasharray="1 1"/><path d="M3 13h2M11 13h3" stroke="#101878" stroke-width="1.3"/></svg>
<div class="b" style="left:65.5px;top:113px;width:18px;height:18.5px"></div>
<svg class="i" style="left:67.75px;top:115.50px;width:13.5px;height:13.5px" viewBox="0 0 16 16"><circle cx="9" cy="6" r="4.2" fill="#fff" stroke="#101878" stroke-width="1.6"/><path d="M12 9l3 3" stroke="#000" stroke-width="1.6"/><rect x="1" y="8" width="6" height="6" fill="#b01090"/><path d="M2 8V6q2-2 4 0" fill="none" stroke="#101878" stroke-width="1.2"/></svg>
<div class="b" style="left:84px;top:113px;width:18px;height:18.5px"></div>
<svg class="i" style="left:86.25px;top:115.50px;width:13.5px;height:13.5px" viewBox="0 0 16 16"><g transform="translate(0.8,0.8)"><path d="M6 9l6-7 2 2-6 7z" fill="#ffffff"/><path d="M2 10h6v4H2z" fill="#ffffff"/></g><path d="M6 9l6-7 2 2-6 7z" fill="#a9a799"/><path d="M2 10h6v4H2z" fill="#a9a799"/></svg>
<div class="b" style="left:106px;top:113px;width:18px;height:18.5px"></div>
<svg class="i" style="left:108.25px;top:115.50px;width:13.5px;height:13.5px" viewBox="0 0 16 16"><g transform="translate(0.8,0.8)"><path d="M1 2h10l3 3v3H8v6H4V8H1z" fill="none" stroke="#ffffff" stroke-width="1.6"/><rect x="5" y="5" width="3" height="2" fill="#ffffff"/></g><path d="M1 2h10l3 3v3H8v6H4V8H1z" fill="none" stroke="#a9a799" stroke-width="1.6"/><rect x="5" y="5" width="3" height="2" fill="#a9a799"/></svg>
<div class="b" style="left:125px;top:113px;width:18px;height:18.5px"></div>
<svg class="i" style="left:127.25px;top:115.50px;width:13.5px;height:13.5px" viewBox="0 0 16 16"><g transform="translate(0.8,0.8)"><path d="M2 2h12v12H2z" fill="none" stroke="#ffffff" stroke-width="1.4"/><path d="M3 3l10 10M3 8h5M8 3l5 5" stroke="#ffffff" stroke-width="1.6"/></g><path d="M2 2h12v12H2z" fill="none" stroke="#a9a799" stroke-width="1.4"/><path d="M3 3l10 10M3 8h5M8 3l5 5" stroke="#a9a799" stroke-width="1.6"/></svg>
<div class="b" style="left:147.5px;top:113px;width:18px;height:18.5px"></div>
<svg class="i" style="left:149.75px;top:115.50px;width:13.5px;height:13.5px" viewBox="0 0 16 16"><path d="M1 4h4l2 -1" stroke="#000" stroke-width="1.4"/><path d="M7 8l5-6 2 2-5 6z" fill="#e02020"/><path d="M1 10h14" stroke="#000" stroke-width="1.2" stroke-dasharray="1.5 1"/><path d="M1 13h14" stroke="#000" stroke-width="2" stroke-dasharray="1.5 1"/></svg>
<div class="b" style="left:166px;top:113px;width:18px;height:18.5px"></div>
<svg class="i" style="left:168.25px;top:115.50px;width:13.5px;height:13.5px" viewBox="0 0 16 16"><g transform="translate(0.8,0.8)"><path d="M1 4h6M1 9h6M1 13h14M3 4v9" stroke="#ffffff" stroke-width="1.4"/><path d="M7 10l6-7 2 2-6 7z" fill="#ffffff"/></g><path d="M1 4h6M1 9h6M1 13h14M3 4v9" stroke="#a9a799" stroke-width="1.4"/><path d="M7 10l6-7 2 2-6 7z" fill="#a9a799"/></svg>
<div class="b" style="left:185px;top:113px;width:18px;height:18.5px"></div>
<svg class="i" style="left:187.25px;top:115.50px;width:13.5px;height:13.5px" viewBox="0 0 16 16"><path d="M8 9l5-6 2 2-5 6z" fill="#e02020"/><path d="M2 10h3M9 12l2 2M2 14h3M13 11v4M6 12l1 1" stroke="#000" stroke-width="1.4"/></svg>
<div class="b" style="left:207.5px;top:113px;width:18px;height:18.5px"></div>
<svg class="i" style="left:209.75px;top:115.50px;width:13.5px;height:13.5px" viewBox="0 0 16 16"><g transform="translate(0.8,0.8)"><path d="M1 1h6v6H1z M9 1h6v4H9z M1 9h4v6H1z M7 9h8v6H7z" fill="none" stroke="#ffffff" stroke-width="1.5"/></g><path d="M1 1h6v6H1z M9 1h6v4H9z M1 9h4v6H1z M7 9h8v6H7z" fill="none" stroke="#a9a799" stroke-width="1.5"/></svg>
<div class="b" style="left:227px;top:113px;width:18px;height:18.5px"></div>
<svg class="i" style="left:229.25px;top:115.50px;width:13.5px;height:13.5px" viewBox="0 0 16 16"><path d="M2 6q0-4 4-4h5q3 0 3 4v4q0 4-4 4H5q-3 0-3-4z" fill="#fff" stroke="#101878" stroke-width="1.6" stroke-dasharray="2 0.8"/><path d="M6 4v5h4M11 10l3 4" stroke="#000" stroke-width="1.4"/></svg>
<div class="b" style="left:250px;top:113px;width:18px;height:18.5px"></div>
<svg class="i" style="left:252.25px;top:115.50px;width:13.5px;height:13.5px" viewBox="0 0 16 16"><path d="M3 1h10v3H3z" fill="#f0e020"/><path d="M3 4h10" stroke="#000"/><path d="M6.5 4h3v5h-3z" fill="#801010"/><path d="M3 9h10l1 2H2z" fill="#d02050"/><path d="M2 11h12v3H2z" fill="#3090c0"/></svg>
<div class="b" style="left:269px;top:113px;width:18px;height:18.5px"></div>
<svg class="i" style="left:271.25px;top:115.50px;width:13.5px;height:13.5px" viewBox="0 0 16 16"><path d="M3 1h10v2.5H3z" fill="#f0e020"/><path d="M7 4h2v3H7z" fill="#f0e020"/><path d="M5 7h6l2 3H3z" fill="#801040"/><path d="M2 10h12v1.5H2z" fill="#d02050"/><path d="M2 12h12v2.5H2z" fill="#3090c0"/></svg>
<div class="b" style="left:291px;top:113px;width:18px;height:18.5px"></div>
<svg class="i" style="left:293.25px;top:115.50px;width:13.5px;height:13.5px" viewBox="0 0 16 16"><g transform="translate(0.8,0.8)"><path d="M5 2h9v9H5z M2 6v8h8" fill="none" stroke="#ffffff" stroke-width="1.3"/><path d="M8 6h2v2" stroke="#ffffff"/></g><path d="M5 2h9v9H5z M2 6v8h8" fill="none" stroke="#a9a799" stroke-width="1.3"/><path d="M8 6h2v2" stroke="#a9a799"/></svg>
<div class="b" style="left:310px;top:113px;width:18px;height:18.5px"></div>
<svg class="i" style="left:312.25px;top:115.50px;width:13.5px;height:13.5px" viewBox="0 0 16 16"><g transform="translate(0.8,0.8)"><path d="M8 2h6v6 M2 8h12v6H2z M5 11h4" fill="none" stroke="#ffffff" stroke-width="1.3"/></g><path d="M8 2h6v6 M2 8h12v6H2z M5 11h4" fill="none" stroke="#a9a799" stroke-width="1.3"/></svg>
<div class="b" style="left:332.5px;top:113px;width:18px;height:18.5px"></div>
<svg class="i" style="left:334.75px;top:115.50px;width:13.5px;height:13.5px" viewBox="0 0 16 16"><g transform="translate(0.8,0.8)"><circle cx="8" cy="8" r="6" fill="#ffffff"/><path d="M5 8h2v3" stroke="#fff" stroke-width="1"/></g><circle cx="8" cy="8" r="6" fill="#a9a799"/><path d="M5 8h2v3" stroke="#fff" stroke-width="1"/></svg>
<div class="b" style="left:356px;top:113px;width:18px;height:18.5px"></div>
<svg class="i" style="left:358.25px;top:115.50px;width:13.5px;height:13.5px" viewBox="0 0 16 16"><g transform="translate(0.8,0.8)"><path d="M2 3h12M2 7h6M2 11h12M2 14h8M8 2v13" stroke="#ffffff" stroke-width="1.5"/><path d="M11 8l2 2 2-2" stroke="#ffffff" stroke-width="1.3" fill="none"/></g><path d="M2 3h12M2 7h6M2 11h12M2 14h8M8 2v13" stroke="#a9a799" stroke-width="1.5"/><path d="M11 8l2 2 2-2" stroke="#a9a799" stroke-width="1.3" fill="none"/></svg>
<div class="b" style="left:375px;top:113px;width:18px;height:18.5px"></div>
<svg class="i" style="left:377.25px;top:115.50px;width:13.5px;height:13.5px" viewBox="0 0 16 16"><g transform="translate(0.8,0.8)"><path d="M2 3h12M2 7h6M2 11h12M2 14h8M8 2v13" stroke="#ffffff" stroke-width="1.5"/><path d="M11 8l2 2 2-2" stroke="#ffffff" stroke-width="1.3" fill="none"/></g><path d="M2 3h12M2 7h6M2 11h12M2 14h8M8 2v13" stroke="#a9a799" stroke-width="1.5"/><path d="M11 8l2 2 2-2" stroke="#a9a799" stroke-width="1.3" fill="none"/></svg>
<div class="b" style="left:394px;top:113px;width:18px;height:18.5px"></div>
<svg class="i" style="left:396.25px;top:115.50px;width:13.5px;height:13.5px" viewBox="0 0 16 16"><g transform="translate(0.8,0.8)"><path d="M2 3h12M2 7h6M2 11h12M2 14h8M8 2v13" stroke="#ffffff" stroke-width="1.5"/><path d="M11 8l2 2 2-2" stroke="#ffffff" stroke-width="1.3" fill="none"/></g><path d="M2 3h12M2 7h6M2 11h12M2 14h8M8 2v13" stroke="#a9a799" stroke-width="1.5"/><path d="M11 8l2 2 2-2" stroke="#a9a799" stroke-width="1.3" fill="none"/></svg>
<div class="b" style="left:415px;top:113px;width:18px;height:18.5px"></div>
<svg class="i" style="left:417.25px;top:115.50px;width:13.5px;height:13.5px" viewBox="0 0 16 16"><g transform="translate(0.8,0.8)"><rect x="1.5" y="3.5" width="13" height="9" fill="none" stroke="#ffffff" stroke-width="1.6"/><rect x="4.5" y="6" width="7" height="4" fill="none" stroke="#ffffff" stroke-width="1.4"/></g><rect x="1.5" y="3.5" width="13" height="9" fill="none" stroke="#a9a799" stroke-width="1.6"/><rect x="4.5" y="6" width="7" height="4" fill="none" stroke="#a9a799" stroke-width="1.4"/></svg>
<div class="a" style="left:0px;top:134px;width:147px;height:25px;border-top:1px solid #faf8f0;border-left:1px solid #faf8f0;border-bottom:1px solid #b4b1a2;border-right:1px solid #c4c1b2"></div>
<div class="b" style="left:4.3px;top:137px;width:18.3px;height:18px"></div>
<svg class="i" style="left:6.70px;top:139.25px;width:13.5px;height:13.5px" viewBox="0 0 16 16"><g transform="translate(0.8,0.8)"><path d="M2 2h5M5 2v4M7 6h6M3 9h10v5H3z" fill="none" stroke="#ffffff" stroke-width="1.5"/><path d="M8 6l-2 2 2 2" stroke="#ffffff"/></g><path d="M2 2h5M5 2v4M7 6h6M3 9h10v5H3z" fill="none" stroke="#a9a799" stroke-width="1.5"/><path d="M8 6l-2 2 2 2" stroke="#a9a799"/></svg>
<div class="b" style="left:22.6px;top:137px;width:18.3px;height:18px"></div>
<svg class="i" style="left:25.00px;top:139.25px;width:13.5px;height:13.5px" viewBox="0 0 16 16"><g transform="translate(0.8,0.8)"><path d="M1 2h8v5H1z M4 6h10v5H4z M2 10h8v5H2z" fill="#ffffff" stroke="#fff" stroke-width="0.6"/></g><path d="M1 2h8v5H1z M4 6h10v5H4z M2 10h8v5H2z" fill="#a9a799" stroke="#fff" stroke-width="0.6"/></svg>
<div class="b" style="left:41px;top:137px;width:18.3px;height:18px"></div>
<svg class="i" style="left:43.40px;top:139.25px;width:13.5px;height:13.5px" viewBox="0 0 16 16"><g transform="translate(0.8,0.8)"><path d="M1 3h14v5H1z" fill="#ffffff"/><path d="M1 10h3M6 10h3M11 10h4M2 13h2M6 13h2M10 13h2" stroke="#ffffff" stroke-width="1.4"/></g><path d="M1 3h14v5H1z" fill="#a9a799"/><path d="M1 10h3M6 10h3M11 10h4M2 13h2M6 13h2M10 13h2" stroke="#a9a799" stroke-width="1.4"/></svg>
<div class="b" style="left:63.5px;top:137px;width:18.3px;height:18px"></div>
<svg class="i" style="left:65.90px;top:139.25px;width:13.5px;height:13.5px" viewBox="0 0 16 16"><g transform="translate(0.8,0.8)"><path d="M2 2h2M2 5h4M7 2h2M2 9h3M2 12h4M7 12h2M12 2v11M10 10l2 3 2-3" fill="none" stroke="#ffffff" stroke-width="1.4"/></g><path d="M2 2h2M2 5h4M7 2h2M2 9h3M2 12h4M7 12h2M12 2v11M10 10l2 3 2-3" fill="none" stroke="#a9a799" stroke-width="1.4"/></svg>
<div class="b" style="left:81.7px;top:137px;width:18.3px;height:18px"></div>
<svg class="i" style="left:84.10px;top:139.25px;width:13.5px;height:13.5px" viewBox="0 0 16 16"><rect x="1.5" y="1.5" width="4" height="4" fill="#fff" stroke="#000" stroke-width="1.5"/><rect x="1.5" y="10" width="4" height="4" fill="#fff" stroke="#000" stroke-width="1.5"/><path d="M3.5 5.5v4.5M5.5 3.5h3M5.5 12h3" stroke="#000" stroke-width="1.5"/><rect x="8.5" y="1.5" width="6" height="13" fill="#f0e040" stroke="#000" stroke-width="1.5"/><path d="M10.5 5h2M10.5 8h2M10.5 11h2" stroke="#808000"/></svg>
<div class="b" style="left:106px;top:137px;width:18.3px;height:18px"></div>
<svg class="i" style="left:108.40px;top:139.25px;width:13.5px;height:13.5px" viewBox="0 0 16 16"><g transform="translate(0.8,0.8)"><path d="M2 2h4v12H2z M7 2h7v4H7z M7 7h3v3H7z M11 7h3v3h-3z M7 11h7v3H7z" fill="#ffffff"/></g><path d="M2 2h4v12H2z M7 2h7v4H7z M7 7h3v3H7z M11 7h3v3h-3z M7 11h7v3H7z" fill="#a9a799"/></svg>
<div class="b" style="left:124.3px;top:137px;width:18.3px;height:18px"></div>
<svg class="i" style="left:126.70px;top:139.25px;width:13.5px;height:13.5px" viewBox="0 0 16 16"><rect x="1.5" y="1.5" width="5" height="4" fill="#fff" stroke="#101878" stroke-width="1.5"/><path d="M4 5.5V9M4 9h3" stroke="#101878" stroke-width="1.5"/><rect x="1.5" y="10" width="5" height="4.5" fill="#fff" stroke="#e04010" stroke-width="1.6"/><path d="M12 3v10M9.5 10.5l2.5 3 2.5-3" fill="none" stroke="#101878" stroke-width="1.6"/></svg>
<div class="a" style="left:147px;top:134px;width:496px;height:25px;border-top:1px solid #faf8f0;border-left:1px solid #faf8f0;border-bottom:1px solid #b4b1a2;border-right:1px solid #c4c1b2"></div>
<div class="b" style="left:155px;top:137px;width:20.5px;height:18.5px"></div>
<svg class="i" style="left:159.00px;top:140.40px;width:14.00px;height:8.55px" viewBox="0 0 16 9"><rect x="2" y="1" width="12" height="7" fill="none" stroke="#fff" stroke-width="1.3"/></svg>
<svg class="i" style="left:158.20px;top:139.60px;width:14.00px;height:8.55px" viewBox="0 0 16 9"><rect x="2" y="1" width="12" height="7" fill="none" stroke="#aaa89a" stroke-width="1.3"/></svg>
<svg class="t" style="left:161.85px;top:145.45px;width:12.22px;height:9.92px" viewBox="0 0 16 16" preserveAspectRatio="none" aria-label="F1"><path fill="#fff" d="M0 4h5v1h-5zM6 4h3v1h-3zM0 5h1v1h-1zM8 5h1v1h-1zM0 6h1v1h-1zM8 6h1v1h-1zM0 7h4v1h-4zM8 7h1v1h-1zM0 8h1v1h-1zM8 8h1v1h-1zM0 9h1v1h-1zM8 9h1v1h-1zM0 10h1v1h-1zM8 10h1v1h-1zM0 11h1v1h-1zM6 11h5v1h-5z"/></svg>
<svg class="t" style="left:161.05px;top:144.65px;width:12.22px;height:9.92px" viewBox="0 0 16 16" preserveAspectRatio="none" aria-label="F1"><path fill="#aaa89a" d="M0 4h5v1h-5zM6 4h3v1h-3zM0 5h1v1h-1zM8 5h1v1h-1zM0 6h1v1h-1zM8 6h1v1h-1zM0 7h4v1h-4zM8 7h1v1h-1zM0 8h1v1h-1zM8 8h1v1h-1zM0 9h1v1h-1zM8 9h1v1h-1zM0 10h1v1h-1zM8 10h1v1h-1zM0 11h1v1h-1zM6 11h5v1h-5z"/></svg>
<div class="b" style="left:176px;top:137px;width:20.5px;height:18.5px"></div>
<svg class="i" style="left:180.00px;top:140.40px;width:14.00px;height:8.55px" viewBox="0 0 16 9"><rect x="2" y="1" width="12" height="7" fill="none" stroke="#fff" stroke-width="1.3"/><path d="M2 4.5h12" stroke="#fff" stroke-width="1.2"/></svg>
<svg class="i" style="left:179.20px;top:139.60px;width:14.00px;height:8.55px" viewBox="0 0 16 9"><rect x="2" y="1" width="12" height="7" fill="none" stroke="#aaa89a" stroke-width="1.3"/><path d="M2 4.5h12" stroke="#aaa89a" stroke-width="1.2"/></svg>
<svg class="t" style="left:182.85px;top:145.45px;width:12.22px;height:9.92px" viewBox="0 0 16 16" preserveAspectRatio="none" aria-label="F6"><path fill="#fff" d="M0 4h5v1h-5zM7 4h3v1h-3zM0 5h1v1h-1zM6 5h1v1h-1zM0 6h1v1h-1zM6 6h1v1h-1zM0 7h4v1h-4zM6 7h4v1h-4zM0 8h1v1h-1zM6 8h1v1h-1zM10 8h1v1h-1zM0 9h1v1h-1zM6 9h1v1h-1zM10 9h1v1h-1zM0 10h1v1h-1zM6 10h1v1h-1zM10 10h1v1h-1zM0 11h1v1h-1zM7 11h3v1h-3z"/></svg>
<svg class="t" style="left:182.05px;top:144.65px;width:12.22px;height:9.92px" viewBox="0 0 16 16" preserveAspectRatio="none" aria-label="F6"><path fill="#aaa89a" d="M0 4h5v1h-5zM7 4h3v1h-3zM0 5h1v1h-1zM6 5h1v1h-1zM0 6h1v1h-1zM6 6h1v1h-1zM0 7h4v1h-4zM6 7h4v1h-4zM0 8h1v1h-1zM6 8h1v1h-1zM10 8h1v1h-1zM0 9h1v1h-1zM6 9h1v1h-1zM10 9h1v1h-1zM0 10h1v1h-1zM6 10h1v1h-1zM10 10h1v1h-1zM0 11h1v1h-1zM7 11h3v1h-3z"/></svg>
<div class="b" style="left:196.6px;top:137px;width:20.5px;height:18.5px"></div>
<svg class="i" style="left:200.60px;top:140.40px;width:14.00px;height:8.55px" viewBox="0 0 16 9"><path d="M2 1h12M2 4h12M2 7h12" stroke="#fff" stroke-width="1.3"/></svg>
<svg class="i" style="left:199.80px;top:139.60px;width:14.00px;height:8.55px" viewBox="0 0 16 9"><path d="M2 1h12M2 4h12M2 7h12" stroke="#aaa89a" stroke-width="1.3"/></svg>
<svg class="t" style="left:201.35px;top:145.45px;width:17.05px;height:9.92px" viewBox="0 0 23 16" preserveAspectRatio="none" aria-label="sF6"><path fill="#fff" d="M6 4h5v1h-5zM13 4h3v1h-3zM6 5h1v1h-1zM12 5h1v1h-1zM1 6h3v1h-3zM6 6h1v1h-1zM12 6h1v1h-1zM0 7h1v1h-1zM4 7h1v1h-1zM6 7h4v1h-4zM12 7h4v1h-4zM1 8h2v1h-2zM6 8h1v1h-1zM12 8h1v1h-1zM16 8h1v1h-1zM3 9h1v1h-1zM6 9h1v1h-1zM12 9h1v1h-1zM16 9h1v1h-1zM0 10h1v1h-1zM4 10h1v1h-1zM6 10h1v1h-1zM12 10h1v1h-1zM16 10h1v1h-1zM1 11h3v1h-3zM6 11h1v1h-1zM13 11h3v1h-3z"/></svg>
<svg class="t" style="left:200.55px;top:144.65px;width:17.05px;height:9.92px" viewBox="0 0 23 16" preserveAspectRatio="none" aria-label="sF6"><path fill="#aaa89a" d="M6 4h5v1h-5zM13 4h3v1h-3zM6 5h1v1h-1zM12 5h1v1h-1zM1 6h3v1h-3zM6 6h1v1h-1zM12 6h1v1h-1zM0 7h1v1h-1zM4 7h1v1h-1zM6 7h4v1h-4zM12 7h4v1h-4zM1 8h2v1h-2zM6 8h1v1h-1zM12 8h1v1h-1zM16 8h1v1h-1zM3 9h1v1h-1zM6 9h1v1h-1zM12 9h1v1h-1zM16 9h1v1h-1zM0 10h1v1h-1zM4 10h1v1h-1zM6 10h1v1h-1zM12 10h1v1h-1zM16 10h1v1h-1zM1 11h3v1h-3zM6 11h1v1h-1zM13 11h3v1h-3z"/></svg>
<div class="b" style="left:217.6px;top:137px;width:20.5px;height:18.5px"></div>
<svg class="i" style="left:221.60px;top:140.40px;width:14.00px;height:8.55px" viewBox="0 0 16 9"><path d="M6 0v5h4M8 3l2 2-2 2" stroke="#fff" stroke-width="1.2" fill="none"/></svg>
<svg class="i" style="left:220.80px;top:139.60px;width:14.00px;height:8.55px" viewBox="0 0 16 9"><path d="M6 0v5h4M8 3l2 2-2 2" stroke="#aaa89a" stroke-width="1.2" fill="none"/></svg>
<svg class="t" style="left:224.45px;top:145.45px;width:12.22px;height:9.92px" viewBox="0 0 16 16" preserveAspectRatio="none" aria-label="F8"><path fill="#fff" d="M0 4h5v1h-5zM7 4h3v1h-3zM0 5h1v1h-1zM6 5h1v1h-1zM10 5h1v1h-1zM0 6h1v1h-1zM6 6h1v1h-1zM10 6h1v1h-1zM0 7h4v1h-4zM7 7h3v1h-3zM0 8h1v1h-1zM6 8h1v1h-1zM10 8h1v1h-1zM0 9h1v1h-1zM6 9h1v1h-1zM10 9h1v1h-1zM0 10h1v1h-1zM6 10h1v1h-1zM10 10h1v1h-1zM0 11h1v1h-1zM7 11h3v1h-3z"/></svg>
<svg class="t" style="left:223.65px;top:144.65px;width:12.22px;height:9.92px" viewBox="0 0 16 16" preserveAspectRatio="none" aria-label="F8"><path fill="#aaa89a" d="M0 4h5v1h-5zM7 4h3v1h-3zM0 5h1v1h-1zM6 5h1v1h-1zM10 5h1v1h-1zM0 6h1v1h-1zM6 6h1v1h-1zM10 6h1v1h-1zM0 7h4v1h-4zM7 7h3v1h-3zM0 8h1v1h-1zM6 8h1v1h-1zM10 8h1v1h-1zM0 9h1v1h-1zM6 9h1v1h-1zM10 9h1v1h-1zM0 10h1v1h-1zM6 10h1v1h-1zM10 10h1v1h-1zM0 11h1v1h-1zM7 11h3v1h-3z"/></svg>
<div class="b" style="left:238px;top:137px;width:20.5px;height:18.5px"></div>
<svg class="i" style="left:242.00px;top:140.40px;width:14.00px;height:8.55px" viewBox="0 0 16 9"><path d="M8 1v6M2 7h12" stroke="#fff" stroke-width="1.3"/></svg>
<svg class="i" style="left:241.20px;top:139.60px;width:14.00px;height:8.55px" viewBox="0 0 16 9"><path d="M8 1v6M2 7h12" stroke="#aaa89a" stroke-width="1.3"/></svg>
<svg class="t" style="left:244.85px;top:145.45px;width:12.22px;height:9.92px" viewBox="0 0 16 16" preserveAspectRatio="none" aria-label="F7"><path fill="#fff" d="M0 4h5v1h-5zM6 4h5v1h-5zM0 5h1v1h-1zM10 5h1v1h-1zM0 6h1v1h-1zM10 6h1v1h-1zM0 7h4v1h-4zM9 7h1v1h-1zM0 8h1v1h-1zM9 8h1v1h-1zM0 9h1v1h-1zM8 9h1v1h-1zM0 10h1v1h-1zM8 10h1v1h-1zM0 11h1v1h-1zM8 11h1v1h-1z"/></svg>
<svg class="t" style="left:244.05px;top:144.65px;width:12.22px;height:9.92px" viewBox="0 0 16 16" preserveAspectRatio="none" aria-label="F7"><path fill="#aaa89a" d="M0 4h5v1h-5zM6 4h5v1h-5zM0 5h1v1h-1zM10 5h1v1h-1zM0 6h1v1h-1zM10 6h1v1h-1zM0 7h4v1h-4zM9 7h1v1h-1zM0 8h1v1h-1zM9 8h1v1h-1zM0 9h1v1h-1zM8 9h1v1h-1zM0 10h1v1h-1zM8 10h1v1h-1zM0 11h1v1h-1zM8 11h1v1h-1z"/></svg>
<div class="b" style="left:258.7px;top:137px;width:20.5px;height:18.5px"></div>
<svg class="i" style="left:262.70px;top:140.40px;width:14.00px;height:8.55px" viewBox="0 0 16 9"><rect x="2" y="0.5" width="12" height="7.5" fill="none" stroke="#fff" stroke-width="1.3"/><path d="M4 6l3-4 2 3 3-3" stroke="#fff" stroke-width="1" fill="none"/></svg>
<svg class="i" style="left:261.90px;top:139.60px;width:14.00px;height:8.55px" viewBox="0 0 16 9"><rect x="2" y="0.5" width="12" height="7.5" fill="none" stroke="#aaa89a" stroke-width="1.3"/><path d="M4 6l3-4 2 3 3-3" stroke="#aaa89a" stroke-width="1" fill="none"/></svg>
<svg class="t" style="left:263.45px;top:145.45px;width:17.05px;height:9.92px" viewBox="0 0 23 16" preserveAspectRatio="none" aria-label="sF5"><path fill="#fff" d="M6 4h5v1h-5zM12 4h4v1h-4zM6 5h1v1h-1zM12 5h1v1h-1zM1 6h3v1h-3zM6 6h1v1h-1zM12 6h1v1h-1zM0 7h1v1h-1zM4 7h1v1h-1zM6 7h4v1h-4zM12 7h4v1h-4zM1 8h2v1h-2zM6 8h1v1h-1zM16 8h1v1h-1zM3 9h1v1h-1zM6 9h1v1h-1zM16 9h1v1h-1zM0 10h1v1h-1zM4 10h1v1h-1zM6 10h1v1h-1zM16 10h1v1h-1zM1 11h3v1h-3zM6 11h1v1h-1zM12 11h4v1h-4z"/></svg>
<svg class="t" style="left:262.65px;top:144.65px;width:17.05px;height:9.92px" viewBox="0 0 23 16" preserveAspectRatio="none" aria-label="sF5"><path fill="#aaa89a" d="M6 4h5v1h-5zM12 4h4v1h-4zM6 5h1v1h-1zM12 5h1v1h-1zM1 6h3v1h-3zM6 6h1v1h-1zM12 6h1v1h-1zM0 7h1v1h-1zM4 7h1v1h-1zM6 7h4v1h-4zM12 7h4v1h-4zM1 8h2v1h-2zM6 8h1v1h-1zM16 8h1v1h-1zM3 9h1v1h-1zM6 9h1v1h-1zM16 9h1v1h-1zM0 10h1v1h-1zM4 10h1v1h-1zM6 10h1v1h-1zM16 10h1v1h-1zM1 11h3v1h-3zM6 11h1v1h-1zM12 11h4v1h-4z"/></svg>
<div class="b" style="left:279px;top:137px;width:20.5px;height:18.5px"></div>
<svg class="i" style="left:283.00px;top:140.40px;width:14.00px;height:8.55px" viewBox="0 0 16 9"><path d="M8 1v7M3 4h10" stroke="#fff" stroke-width="1.3"/></svg>
<svg class="i" style="left:282.20px;top:139.60px;width:14.00px;height:8.55px" viewBox="0 0 16 9"><path d="M8 1v7M3 4h10" stroke="#aaa89a" stroke-width="1.3"/></svg>
<svg class="t" style="left:285.85px;top:145.45px;width:12.22px;height:9.92px" viewBox="0 0 16 16" preserveAspectRatio="none" aria-label="F5"><path fill="#fff" d="M0 4h5v1h-5zM6 4h4v1h-4zM0 5h1v1h-1zM6 5h1v1h-1zM0 6h1v1h-1zM6 6h1v1h-1zM0 7h4v1h-4zM6 7h4v1h-4zM0 8h1v1h-1zM10 8h1v1h-1zM0 9h1v1h-1zM10 9h1v1h-1zM0 10h1v1h-1zM10 10h1v1h-1zM0 11h1v1h-1zM6 11h4v1h-4z"/></svg>
<svg class="t" style="left:285.05px;top:144.65px;width:12.22px;height:9.92px" viewBox="0 0 16 16" preserveAspectRatio="none" aria-label="F5"><path fill="#aaa89a" d="M0 4h5v1h-5zM6 4h4v1h-4zM0 5h1v1h-1zM6 5h1v1h-1zM0 6h1v1h-1zM6 6h1v1h-1zM0 7h4v1h-4zM6 7h4v1h-4zM0 8h1v1h-1zM10 8h1v1h-1zM0 9h1v1h-1zM10 9h1v1h-1zM0 10h1v1h-1zM10 10h1v1h-1zM0 11h1v1h-1zM6 11h4v1h-4z"/></svg>
<div class="b" style="left:300px;top:137px;width:20.5px;height:18.5px"></div>
<svg class="i" style="left:304.00px;top:140.40px;width:14.00px;height:8.55px" viewBox="0 0 16 9"><path d="M3 2h10" stroke="#fff" stroke-width="1.3"/></svg>
<svg class="i" style="left:303.20px;top:139.60px;width:14.00px;height:8.55px" viewBox="0 0 16 9"><path d="M3 2h10" stroke="#aaa89a" stroke-width="1.3"/></svg>
<svg class="t" style="left:306.85px;top:145.45px;width:12.22px;height:9.92px" viewBox="0 0 16 16" preserveAspectRatio="none" aria-label="F6"><path fill="#fff" d="M0 4h5v1h-5zM7 4h3v1h-3zM0 5h1v1h-1zM6 5h1v1h-1zM0 6h1v1h-1zM6 6h1v1h-1zM0 7h4v1h-4zM6 7h4v1h-4zM0 8h1v1h-1zM6 8h1v1h-1zM10 8h1v1h-1zM0 9h1v1h-1zM6 9h1v1h-1zM10 9h1v1h-1zM0 10h1v1h-1zM6 10h1v1h-1zM10 10h1v1h-1zM0 11h1v1h-1zM7 11h3v1h-3z"/></svg>
<svg class="t" style="left:306.05px;top:144.65px;width:12.22px;height:9.92px" viewBox="0 0 16 16" preserveAspectRatio="none" aria-label="F6"><path fill="#aaa89a" d="M0 4h5v1h-5zM7 4h3v1h-3zM0 5h1v1h-1zM6 5h1v1h-1zM0 6h1v1h-1zM6 6h1v1h-1zM0 7h4v1h-4zM6 7h4v1h-4zM0 8h1v1h-1zM6 8h1v1h-1zM10 8h1v1h-1zM0 9h1v1h-1zM6 9h1v1h-1zM10 9h1v1h-1zM0 10h1v1h-1zM6 10h1v1h-1zM10 10h1v1h-1zM0 11h1v1h-1zM7 11h3v1h-3z"/></svg>
<div class="b" style="left:320.5px;top:137px;width:20.5px;height:18.5px"></div>
<svg class="i" style="left:324.50px;top:140.40px;width:14.00px;height:8.55px" viewBox="0 0 16 9"><path d="M3 2h9v5" stroke="#fff" stroke-width="1.6" fill="none"/></svg>
<svg class="i" style="left:323.70px;top:139.60px;width:14.00px;height:8.55px" viewBox="0 0 16 9"><path d="M3 2h9v5" stroke="#aaa89a" stroke-width="1.6" fill="none"/></svg>
<svg class="t" style="left:327.35px;top:145.45px;width:12.22px;height:9.92px" viewBox="0 0 16 16" preserveAspectRatio="none" aria-label="F7"><path fill="#fff" d="M0 4h5v1h-5zM6 4h5v1h-5zM0 5h1v1h-1zM10 5h1v1h-1zM0 6h1v1h-1zM10 6h1v1h-1zM0 7h4v1h-4zM9 7h1v1h-1zM0 8h1v1h-1zM9 8h1v1h-1zM0 9h1v1h-1zM8 9h1v1h-1zM0 10h1v1h-1zM8 10h1v1h-1zM0 11h1v1h-1zM8 11h1v1h-1z"/></svg>
<svg class="t" style="left:326.55px;top:144.65px;width:12.22px;height:9.92px" viewBox="0 0 16 16" preserveAspectRatio="none" aria-label="F7"><path fill="#aaa89a" d="M0 4h5v1h-5zM6 4h5v1h-5zM0 5h1v1h-1zM10 5h1v1h-1zM0 6h1v1h-1zM10 6h1v1h-1zM0 7h4v1h-4zM9 7h1v1h-1zM0 8h1v1h-1zM9 8h1v1h-1zM0 9h1v1h-1zM8 9h1v1h-1zM0 10h1v1h-1zM8 10h1v1h-1zM0 11h1v1h-1zM8 11h1v1h-1z"/></svg>
<div class="b" style="left:341.5px;top:137px;width:20.5px;height:18.5px"></div>
<svg class="i" style="left:345.50px;top:140.40px;width:14.00px;height:8.55px" viewBox="0 0 16 9"><path d="M8 1v7" stroke="#fff" stroke-width="1.3"/></svg>
<svg class="i" style="left:344.70px;top:139.60px;width:14.00px;height:8.55px" viewBox="0 0 16 9"><path d="M8 1v7" stroke="#aaa89a" stroke-width="1.3"/></svg>
<svg class="t" style="left:348.35px;top:145.45px;width:12.22px;height:9.92px" viewBox="0 0 16 16" preserveAspectRatio="none" aria-label="F8"><path fill="#fff" d="M0 4h5v1h-5zM7 4h3v1h-3zM0 5h1v1h-1zM6 5h1v1h-1zM10 5h1v1h-1zM0 6h1v1h-1zM6 6h1v1h-1zM10 6h1v1h-1zM0 7h4v1h-4zM7 7h3v1h-3zM0 8h1v1h-1zM6 8h1v1h-1zM10 8h1v1h-1zM0 9h1v1h-1zM6 9h1v1h-1zM10 9h1v1h-1zM0 10h1v1h-1zM6 10h1v1h-1zM10 10h1v1h-1zM0 11h1v1h-1zM7 11h3v1h-3z"/></svg>
<svg class="t" style="left:347.55px;top:144.65px;width:12.22px;height:9.92px" viewBox="0 0 16 16" preserveAspectRatio="none" aria-label="F8"><path fill="#aaa89a" d="M0 4h5v1h-5zM7 4h3v1h-3zM0 5h1v1h-1zM6 5h1v1h-1zM10 5h1v1h-1zM0 6h1v1h-1zM6 6h1v1h-1zM10 6h1v1h-1zM0 7h4v1h-4zM7 7h3v1h-3zM0 8h1v1h-1zM6 8h1v1h-1zM10 8h1v1h-1zM0 9h1v1h-1zM6 9h1v1h-1zM10 9h1v1h-1zM0 10h1v1h-1zM6 10h1v1h-1zM10 10h1v1h-1zM0 11h1v1h-1zM7 11h3v1h-3z"/></svg>
<div class="b" style="left:362px;top:137px;width:20.5px;height:18.5px"></div>
<svg class="i" style="left:366.00px;top:140.40px;width:14.00px;height:8.55px" viewBox="0 0 16 9"><path d="M3 6h8M11 1v6" stroke="#fff" stroke-width="1.3" fill="none"/></svg>
<svg class="i" style="left:365.20px;top:139.60px;width:14.00px;height:8.55px" viewBox="0 0 16 9"><path d="M3 6h8M11 1v6" stroke="#aaa89a" stroke-width="1.3" fill="none"/></svg>
<svg class="t" style="left:368.85px;top:145.45px;width:12.22px;height:9.92px" viewBox="0 0 16 16" preserveAspectRatio="none" aria-label="F9"><path fill="#fff" d="M0 4h5v1h-5zM7 4h3v1h-3zM0 5h1v1h-1zM6 5h1v1h-1zM10 5h1v1h-1zM0 6h1v1h-1zM6 6h1v1h-1zM10 6h1v1h-1zM0 7h4v1h-4zM6 7h1v1h-1zM10 7h1v1h-1zM0 8h1v1h-1zM7 8h4v1h-4zM0 9h1v1h-1zM10 9h1v1h-1zM0 10h1v1h-1zM6 10h1v1h-1zM10 10h1v1h-1zM0 11h1v1h-1zM7 11h3v1h-3z"/></svg>
<svg class="t" style="left:368.05px;top:144.65px;width:12.22px;height:9.92px" viewBox="0 0 16 16" preserveAspectRatio="none" aria-label="F9"><path fill="#aaa89a" d="M0 4h5v1h-5zM7 4h3v1h-3zM0 5h1v1h-1zM6 5h1v1h-1zM10 5h1v1h-1zM0 6h1v1h-1zM6 6h1v1h-1zM10 6h1v1h-1zM0 7h4v1h-4zM6 7h1v1h-1zM10 7h1v1h-1zM0 8h1v1h-1zM7 8h4v1h-4zM0 9h1v1h-1zM10 9h1v1h-1zM0 10h1v1h-1zM6 10h1v1h-1zM10 10h1v1h-1zM0 11h1v1h-1zM7 11h3v1h-3z"/></svg>
<div class="b" style="left:383px;top:137px;width:20.5px;height:18.5px"></div>
<svg class="i" style="left:387.00px;top:140.40px;width:14.00px;height:8.55px" viewBox="0 0 16 9"><path d="M8 1v7" stroke="#fff" stroke-width="1.3"/></svg>
<svg class="i" style="left:386.20px;top:139.60px;width:14.00px;height:8.55px" viewBox="0 0 16 9"><path d="M8 1v7" stroke="#aaa89a" stroke-width="1.3"/></svg>
<svg class="t" style="left:387.75px;top:145.45px;width:17.05px;height:9.92px" viewBox="0 0 23 16" preserveAspectRatio="none" aria-label="sF9"><path fill="#fff" d="M6 4h5v1h-5zM13 4h3v1h-3zM6 5h1v1h-1zM12 5h1v1h-1zM16 5h1v1h-1zM1 6h3v1h-3zM6 6h1v1h-1zM12 6h1v1h-1zM16 6h1v1h-1zM0 7h1v1h-1zM4 7h1v1h-1zM6 7h4v1h-4zM12 7h1v1h-1zM16 7h1v1h-1zM1 8h2v1h-2zM6 8h1v1h-1zM13 8h4v1h-4zM3 9h1v1h-1zM6 9h1v1h-1zM16 9h1v1h-1zM0 10h1v1h-1zM4 10h1v1h-1zM6 10h1v1h-1zM12 10h1v1h-1zM16 10h1v1h-1zM1 11h3v1h-3zM6 11h1v1h-1zM13 11h3v1h-3z"/></svg>
<svg class="t" style="left:386.95px;top:144.65px;width:17.05px;height:9.92px" viewBox="0 0 23 16" preserveAspectRatio="none" aria-label="sF9"><path fill="#aaa89a" d="M6 4h5v1h-5zM13 4h3v1h-3zM6 5h1v1h-1zM12 5h1v1h-1zM16 5h1v1h-1zM1 6h3v1h-3zM6 6h1v1h-1zM12 6h1v1h-1zM16 6h1v1h-1zM0 7h1v1h-1zM4 7h1v1h-1zM6 7h4v1h-4zM12 7h1v1h-1zM16 7h1v1h-1zM1 8h2v1h-2zM6 8h1v1h-1zM13 8h4v1h-4zM3 9h1v1h-1zM6 9h1v1h-1zM16 9h1v1h-1zM0 10h1v1h-1zM4 10h1v1h-1zM6 10h1v1h-1zM12 10h1v1h-1zM16 10h1v1h-1zM1 11h3v1h-3zM6 11h1v1h-1zM13 11h3v1h-3z"/></svg>
<div class="b" style="left:408.5px;top:137px;width:20.5px;height:18.5px"></div>
<svg class="i" style="left:412.50px;top:140.40px;width:14.00px;height:8.55px" viewBox="0 0 16 9"><rect x="1.5" y="1" width="13" height="6.5" fill="none" stroke="#fff" stroke-width="1.1" stroke-dasharray="1.5 1"/></svg>
<svg class="i" style="left:411.70px;top:139.60px;width:14.00px;height:8.55px" viewBox="0 0 16 9"><rect x="1.5" y="1" width="13" height="6.5" fill="none" stroke="#aaa89a" stroke-width="1.1" stroke-dasharray="1.5 1"/></svg>
<svg class="t" style="left:415.35px;top:145.45px;width:12.98px;height:9.92px" viewBox="0 0 17 16" preserveAspectRatio="none" aria-label="n1"><path fill="#fff" d="M6 4h3v1h-3zM8 5h1v1h-1zM0 6h4v1h-4zM8 6h1v1h-1zM0 7h1v1h-1zM4 7h1v1h-1zM8 7h1v1h-1zM0 8h1v1h-1zM4 8h1v1h-1zM8 8h1v1h-1zM0 9h1v1h-1zM4 9h1v1h-1zM8 9h1v1h-1zM0 10h1v1h-1zM4 10h1v1h-1zM8 10h1v1h-1zM0 11h1v1h-1zM4 11h1v1h-1zM6 11h5v1h-5z"/></svg>
<svg class="t" style="left:414.55px;top:144.65px;width:12.98px;height:9.92px" viewBox="0 0 17 16" preserveAspectRatio="none" aria-label="n1"><path fill="#aaa89a" d="M6 4h3v1h-3zM8 5h1v1h-1zM0 6h4v1h-4zM8 6h1v1h-1zM0 7h1v1h-1zM4 7h1v1h-1zM8 7h1v1h-1zM0 8h1v1h-1zM4 8h1v1h-1zM8 8h1v1h-1zM0 9h1v1h-1zM4 9h1v1h-1zM8 9h1v1h-1zM0 10h1v1h-1zM4 10h1v1h-1zM8 10h1v1h-1zM0 11h1v1h-1zM4 11h1v1h-1zM6 11h5v1h-5z"/></svg>
<div class="b" style="left:429.2px;top:137px;width:20.5px;height:18.5px"></div>
<svg class="i" style="left:433.20px;top:140.40px;width:14.00px;height:8.55px" viewBox="0 0 16 9"><rect x="1.5" y="1" width="13" height="6.5" fill="none" stroke="#fff" stroke-width="1.1" stroke-dasharray="1.5 1"/><path d="M5 3h5v3H5z" fill="none" stroke="#fff"/></svg>
<svg class="i" style="left:432.40px;top:139.60px;width:14.00px;height:8.55px" viewBox="0 0 16 9"><rect x="1.5" y="1" width="13" height="6.5" fill="none" stroke="#aaa89a" stroke-width="1.1" stroke-dasharray="1.5 1"/><path d="M5 3h5v3H5z" fill="none" stroke="#aaa89a"/></svg>
<svg class="t" style="left:436.05px;top:145.45px;width:12.98px;height:9.92px" viewBox="0 0 17 16" preserveAspectRatio="none" aria-label="n2"><path fill="#fff" d="M7 4h3v1h-3zM6 5h1v1h-1zM10 5h1v1h-1zM0 6h4v1h-4zM10 6h1v1h-1zM0 7h1v1h-1zM4 7h1v1h-1zM10 7h1v1h-1zM0 8h1v1h-1zM4 8h1v1h-1zM9 8h1v1h-1zM0 9h1v1h-1zM4 9h1v1h-1zM8 9h1v1h-1zM0 10h1v1h-1zM4 10h1v1h-1zM7 10h1v1h-1zM0 11h1v1h-1zM4 11h1v1h-1zM6 11h5v1h-5z"/></svg>
<svg class="t" style="left:435.25px;top:144.65px;width:12.98px;height:9.92px" viewBox="0 0 17 16" preserveAspectRatio="none" aria-label="n2"><path fill="#aaa89a" d="M7 4h3v1h-3zM6 5h1v1h-1zM10 5h1v1h-1zM0 6h4v1h-4zM10 6h1v1h-1zM0 7h1v1h-1zM4 7h1v1h-1zM10 7h1v1h-1zM0 8h1v1h-1zM4 8h1v1h-1zM9 8h1v1h-1zM0 9h1v1h-1zM4 9h1v1h-1zM8 9h1v1h-1zM0 10h1v1h-1zM4 10h1v1h-1zM7 10h1v1h-1zM0 11h1v1h-1zM4 11h1v1h-1zM6 11h5v1h-5z"/></svg>
<div class="b" style="left:450px;top:137px;width:20.5px;height:18.5px"></div>
<svg class="i" style="left:454.00px;top:140.40px;width:14.00px;height:8.55px" viewBox="0 0 16 9"><rect x="1.5" y="1" width="13" height="6.5" fill="none" stroke="#fff" stroke-width="1.1" stroke-dasharray="1.5 1"/><path d="M5 3h5v3H5z" fill="none" stroke="#fff"/></svg>
<svg class="i" style="left:453.20px;top:139.60px;width:14.00px;height:8.55px" viewBox="0 0 16 9"><rect x="1.5" y="1" width="13" height="6.5" fill="none" stroke="#aaa89a" stroke-width="1.1" stroke-dasharray="1.5 1"/><path d="M5 3h5v3H5z" fill="none" stroke="#aaa89a"/></svg>
<svg class="t" style="left:456.85px;top:145.45px;width:12.98px;height:9.92px" viewBox="0 0 17 16" preserveAspectRatio="none" aria-label="n3"><path fill="#fff" d="M6 4h4v1h-4zM10 5h1v1h-1zM0 6h4v1h-4zM10 6h1v1h-1zM0 7h1v1h-1zM4 7h1v1h-1zM7 7h3v1h-3zM0 8h1v1h-1zM4 8h1v1h-1zM10 8h1v1h-1zM0 9h1v1h-1zM4 9h1v1h-1zM10 9h1v1h-1zM0 10h1v1h-1zM4 10h1v1h-1zM10 10h1v1h-1zM0 11h1v1h-1zM4 11h1v1h-1zM6 11h4v1h-4z"/></svg>
<svg class="t" style="left:456.05px;top:144.65px;width:12.98px;height:9.92px" viewBox="0 0 17 16" preserveAspectRatio="none" aria-label="n3"><path fill="#aaa89a" d="M6 4h4v1h-4zM10 5h1v1h-1zM0 6h4v1h-4zM10 6h1v1h-1zM0 7h1v1h-1zM4 7h1v1h-1zM7 7h3v1h-3zM0 8h1v1h-1zM4 8h1v1h-1zM10 8h1v1h-1zM0 9h1v1h-1zM4 9h1v1h-1zM10 9h1v1h-1zM0 10h1v1h-1zM4 10h1v1h-1zM10 10h1v1h-1zM0 11h1v1h-1zM4 11h1v1h-1zM6 11h4v1h-4z"/></svg>
<div class="b" style="left:470.7px;top:137px;width:20.5px;height:18.5px"></div>
<svg class="i" style="left:474.70px;top:140.40px;width:14.00px;height:8.55px" viewBox="0 0 16 9"><rect x="1.5" y="1" width="13" height="6.5" fill="none" stroke="#fff" stroke-width="1.1" stroke-dasharray="1.5 1"/><path d="M5 3h5v3H5z" fill="none" stroke="#fff"/></svg>
<svg class="i" style="left:473.90px;top:139.60px;width:14.00px;height:8.55px" viewBox="0 0 16 9"><rect x="1.5" y="1" width="13" height="6.5" fill="none" stroke="#aaa89a" stroke-width="1.1" stroke-dasharray="1.5 1"/><path d="M5 3h5v3H5z" fill="none" stroke="#aaa89a"/></svg>
<svg class="t" style="left:477.55px;top:145.45px;width:11.90px;height:9.92px" viewBox="0 0 17 16" preserveAspectRatio="none" aria-label="n4"><path fill="#fff" d="M9 4h2v1h-2zM8 5h1v1h-1zM10 5h1v1h-1zM0 6h4v1h-4zM7 6h1v1h-1zM10 6h1v1h-1zM0 7h1v1h-1zM4 7h1v1h-1zM7 7h1v1h-1zM10 7h1v1h-1zM0 8h1v1h-1zM4 8h1v1h-1zM6 8h1v1h-1zM10 8h1v1h-1zM0 9h1v1h-1zM4 9h1v1h-1zM6 9h6v1h-6zM0 10h1v1h-1zM4 10h1v1h-1zM10 10h1v1h-1zM0 11h1v1h-1zM4 11h1v1h-1zM10 11h1v1h-1z"/></svg>
<svg class="t" style="left:476.75px;top:144.65px;width:11.90px;height:9.92px" viewBox="0 0 17 16" preserveAspectRatio="none" aria-label="n4"><path fill="#aaa89a" d="M9 4h2v1h-2zM8 5h1v1h-1zM10 5h1v1h-1zM0 6h4v1h-4zM7 6h1v1h-1zM10 6h1v1h-1zM0 7h1v1h-1zM4 7h1v1h-1zM7 7h1v1h-1zM10 7h1v1h-1zM0 8h1v1h-1zM4 8h1v1h-1zM6 8h1v1h-1zM10 8h1v1h-1zM0 9h1v1h-1zM4 9h1v1h-1zM6 9h6v1h-6zM0 10h1v1h-1zM4 10h1v1h-1zM10 10h1v1h-1zM0 11h1v1h-1zM4 11h1v1h-1zM10 11h1v1h-1z"/></svg>
<div class="b" style="left:491.5px;top:137px;width:20.5px;height:18.5px"></div>
<svg class="i" style="left:495.50px;top:140.40px;width:14.00px;height:8.55px" viewBox="0 0 16 9"><rect x="1.5" y="1" width="13" height="6.5" fill="none" stroke="#fff" stroke-width="1.1" stroke-dasharray="1.5 1"/><path d="M5 3h5v3H5z" fill="none" stroke="#fff"/></svg>
<svg class="i" style="left:494.70px;top:139.60px;width:14.00px;height:8.55px" viewBox="0 0 16 9"><rect x="1.5" y="1" width="13" height="6.5" fill="none" stroke="#aaa89a" stroke-width="1.1" stroke-dasharray="1.5 1"/><path d="M5 3h5v3H5z" fill="none" stroke="#aaa89a"/></svg>
<svg class="t" style="left:498.35px;top:145.45px;width:12.98px;height:9.92px" viewBox="0 0 17 16" preserveAspectRatio="none" aria-label="n5"><path fill="#fff" d="M6 4h4v1h-4zM6 5h1v1h-1zM0 6h4v1h-4zM6 6h1v1h-1zM0 7h1v1h-1zM4 7h1v1h-1zM6 7h4v1h-4zM0 8h1v1h-1zM4 8h1v1h-1zM10 8h1v1h-1zM0 9h1v1h-1zM4 9h1v1h-1zM10 9h1v1h-1zM0 10h1v1h-1zM4 10h1v1h-1zM10 10h1v1h-1zM0 11h1v1h-1zM4 11h1v1h-1zM6 11h4v1h-4z"/></svg>
<svg class="t" style="left:497.55px;top:144.65px;width:12.98px;height:9.92px" viewBox="0 0 17 16" preserveAspectRatio="none" aria-label="n5"><path fill="#aaa89a" d="M6 4h4v1h-4zM6 5h1v1h-1zM0 6h4v1h-4zM6 6h1v1h-1zM0 7h1v1h-1zM4 7h1v1h-1zM6 7h4v1h-4zM0 8h1v1h-1zM4 8h1v1h-1zM10 8h1v1h-1zM0 9h1v1h-1zM4 9h1v1h-1zM10 9h1v1h-1zM0 10h1v1h-1zM4 10h1v1h-1zM10 10h1v1h-1zM0 11h1v1h-1zM4 11h1v1h-1zM6 11h4v1h-4z"/></svg>
<div class="b" style="left:512.2px;top:137px;width:20.5px;height:18.5px"></div>
<svg class="i" style="left:516.20px;top:140.40px;width:14.00px;height:8.55px" viewBox="0 0 16 9"><path d="M8 1v7" stroke="#fff" stroke-width="1.3"/></svg>
<svg class="i" style="left:515.40px;top:139.60px;width:14.00px;height:8.55px" viewBox="0 0 16 9"><path d="M8 1v7" stroke="#aaa89a" stroke-width="1.3"/></svg>
<svg class="t" style="left:516.95px;top:145.45px;width:17.05px;height:9.92px" viewBox="0 0 23 16" preserveAspectRatio="none" aria-label="aF5"><path fill="#fff" d="M6 4h5v1h-5zM12 4h4v1h-4zM6 5h1v1h-1zM12 5h1v1h-1zM1 6h3v1h-3zM6 6h1v1h-1zM12 6h1v1h-1zM0 7h1v1h-1zM4 7h1v1h-1zM6 7h4v1h-4zM12 7h4v1h-4zM1 8h4v1h-4zM6 8h1v1h-1zM16 8h1v1h-1zM0 9h1v1h-1zM4 9h1v1h-1zM6 9h1v1h-1zM16 9h1v1h-1zM0 10h1v1h-1zM4 10h1v1h-1zM6 10h1v1h-1zM16 10h1v1h-1zM1 11h4v1h-4zM6 11h1v1h-1zM12 11h4v1h-4z"/></svg>
<svg class="t" style="left:516.15px;top:144.65px;width:17.05px;height:9.92px" viewBox="0 0 23 16" preserveAspectRatio="none" aria-label="aF5"><path fill="#aaa89a" d="M6 4h5v1h-5zM12 4h4v1h-4zM6 5h1v1h-1zM12 5h1v1h-1zM1 6h3v1h-3zM6 6h1v1h-1zM12 6h1v1h-1zM0 7h1v1h-1zM4 7h1v1h-1zM6 7h4v1h-4zM12 7h4v1h-4zM1 8h4v1h-4zM6 8h1v1h-1zM16 8h1v1h-1zM0 9h1v1h-1zM4 9h1v1h-1zM6 9h1v1h-1zM16 9h1v1h-1zM0 10h1v1h-1zM4 10h1v1h-1zM6 10h1v1h-1zM16 10h1v1h-1zM1 11h4v1h-4zM6 11h1v1h-1zM12 11h4v1h-4z"/></svg>
<div class="b" style="left:533px;top:137px;width:20.5px;height:18.5px"></div>
<svg class="i" style="left:537.00px;top:140.40px;width:14.00px;height:8.55px" viewBox="0 0 16 9"><path d="M3 2h8v6" stroke="#fff" stroke-width="1.3" fill="none"/></svg>
<svg class="i" style="left:536.20px;top:139.60px;width:14.00px;height:8.55px" viewBox="0 0 16 9"><path d="M3 2h8v6" stroke="#aaa89a" stroke-width="1.3" fill="none"/></svg>
<svg class="t" style="left:537.75px;top:145.45px;width:17.05px;height:9.92px" viewBox="0 0 23 16" preserveAspectRatio="none" aria-label="aF7"><path fill="#fff" d="M6 4h5v1h-5zM12 4h5v1h-5zM6 5h1v1h-1zM16 5h1v1h-1zM1 6h3v1h-3zM6 6h1v1h-1zM16 6h1v1h-1zM0 7h1v1h-1zM4 7h1v1h-1zM6 7h4v1h-4zM15 7h1v1h-1zM1 8h4v1h-4zM6 8h1v1h-1zM15 8h1v1h-1zM0 9h1v1h-1zM4 9h1v1h-1zM6 9h1v1h-1zM14 9h1v1h-1zM0 10h1v1h-1zM4 10h1v1h-1zM6 10h1v1h-1zM14 10h1v1h-1zM1 11h4v1h-4zM6 11h1v1h-1zM14 11h1v1h-1z"/></svg>
<svg class="t" style="left:536.95px;top:144.65px;width:17.05px;height:9.92px" viewBox="0 0 23 16" preserveAspectRatio="none" aria-label="aF7"><path fill="#aaa89a" d="M6 4h5v1h-5zM12 4h5v1h-5zM6 5h1v1h-1zM16 5h1v1h-1zM1 6h3v1h-3zM6 6h1v1h-1zM16 6h1v1h-1zM0 7h1v1h-1zM4 7h1v1h-1zM6 7h4v1h-4zM15 7h1v1h-1zM1 8h4v1h-4zM6 8h1v1h-1zM15 8h1v1h-1zM0 9h1v1h-1zM4 9h1v1h-1zM6 9h1v1h-1zM14 9h1v1h-1zM0 10h1v1h-1zM4 10h1v1h-1zM6 10h1v1h-1zM14 10h1v1h-1zM1 11h4v1h-4zM6 11h1v1h-1zM14 11h1v1h-1z"/></svg>
<div class="b" style="left:553.7px;top:137px;width:20.5px;height:18.5px"></div>
<svg class="i" style="left:557.70px;top:140.40px;width:14.00px;height:8.55px" viewBox="0 0 16 9"><path d="M3 2h10" stroke="#fff" stroke-width="1.6"/></svg>
<svg class="i" style="left:556.90px;top:139.60px;width:14.00px;height:8.55px" viewBox="0 0 16 9"><path d="M3 2h10" stroke="#aaa89a" stroke-width="1.6"/></svg>
<svg class="t" style="left:558.45px;top:145.45px;width:17.05px;height:9.92px" viewBox="0 0 23 16" preserveAspectRatio="none" aria-label="aF8"><path fill="#fff" d="M6 4h5v1h-5zM13 4h3v1h-3zM6 5h1v1h-1zM12 5h1v1h-1zM16 5h1v1h-1zM1 6h3v1h-3zM6 6h1v1h-1zM12 6h1v1h-1zM16 6h1v1h-1zM0 7h1v1h-1zM4 7h1v1h-1zM6 7h4v1h-4zM13 7h3v1h-3zM1 8h4v1h-4zM6 8h1v1h-1zM12 8h1v1h-1zM16 8h1v1h-1zM0 9h1v1h-1zM4 9h1v1h-1zM6 9h1v1h-1zM12 9h1v1h-1zM16 9h1v1h-1zM0 10h1v1h-1zM4 10h1v1h-1zM6 10h1v1h-1zM12 10h1v1h-1zM16 10h1v1h-1zM1 11h4v1h-4zM6 11h1v1h-1zM13 11h3v1h-3z"/></svg>
<svg class="t" style="left:557.65px;top:144.65px;width:17.05px;height:9.92px" viewBox="0 0 23 16" preserveAspectRatio="none" aria-label="aF8"><path fill="#aaa89a" d="M6 4h5v1h-5zM13 4h3v1h-3zM6 5h1v1h-1zM12 5h1v1h-1zM16 5h1v1h-1zM1 6h3v1h-3zM6 6h1v1h-1zM12 6h1v1h-1zM16 6h1v1h-1zM0 7h1v1h-1zM4 7h1v1h-1zM6 7h4v1h-4zM13 7h3v1h-3zM1 8h4v1h-4zM6 8h1v1h-1zM12 8h1v1h-1zM16 8h1v1h-1zM0 9h1v1h-1zM4 9h1v1h-1zM6 9h1v1h-1zM12 9h1v1h-1zM16 9h1v1h-1zM0 10h1v1h-1zM4 10h1v1h-1zM6 10h1v1h-1zM12 10h1v1h-1zM16 10h1v1h-1zM1 11h4v1h-4zM6 11h1v1h-1zM13 11h3v1h-3z"/></svg>
<div class="b" style="left:574.5px;top:137px;width:20.5px;height:18.5px"></div>
<svg class="i" style="left:578.50px;top:140.40px;width:14.00px;height:8.55px" viewBox="0 0 16 9"><path d="M8 2v6" stroke="#fff" stroke-width="1.3"/></svg>
<svg class="i" style="left:577.70px;top:139.60px;width:14.00px;height:8.55px" viewBox="0 0 16 9"><path d="M8 2v6" stroke="#aaa89a" stroke-width="1.3"/></svg>
<svg class="t" style="left:579.25px;top:145.45px;width:17.05px;height:9.92px" viewBox="0 0 23 16" preserveAspectRatio="none" aria-label="aF9"><path fill="#fff" d="M6 4h5v1h-5zM13 4h3v1h-3zM6 5h1v1h-1zM12 5h1v1h-1zM16 5h1v1h-1zM1 6h3v1h-3zM6 6h1v1h-1zM12 6h1v1h-1zM16 6h1v1h-1zM0 7h1v1h-1zM4 7h1v1h-1zM6 7h4v1h-4zM12 7h1v1h-1zM16 7h1v1h-1zM1 8h4v1h-4zM6 8h1v1h-1zM13 8h4v1h-4zM0 9h1v1h-1zM4 9h1v1h-1zM6 9h1v1h-1zM16 9h1v1h-1zM0 10h1v1h-1zM4 10h1v1h-1zM6 10h1v1h-1zM12 10h1v1h-1zM16 10h1v1h-1zM1 11h4v1h-4zM6 11h1v1h-1zM13 11h3v1h-3z"/></svg>
<svg class="t" style="left:578.45px;top:144.65px;width:17.05px;height:9.92px" viewBox="0 0 23 16" preserveAspectRatio="none" aria-label="aF9"><path fill="#aaa89a" d="M6 4h5v1h-5zM13 4h3v1h-3zM6 5h1v1h-1zM12 5h1v1h-1zM16 5h1v1h-1zM1 6h3v1h-3zM6 6h1v1h-1zM12 6h1v1h-1zM16 6h1v1h-1zM0 7h1v1h-1zM4 7h1v1h-1zM6 7h4v1h-4zM12 7h1v1h-1zM16 7h1v1h-1zM1 8h4v1h-4zM6 8h1v1h-1zM13 8h4v1h-4zM0 9h1v1h-1zM4 9h1v1h-1zM6 9h1v1h-1zM16 9h1v1h-1zM0 10h1v1h-1zM4 10h1v1h-1zM6 10h1v1h-1zM12 10h1v1h-1zM16 10h1v1h-1zM1 11h4v1h-4zM6 11h1v1h-1zM13 11h3v1h-3z"/></svg>
<div class="b" style="left:595.2px;top:137px;width:20.5px;height:18.5px"></div>
<svg class="i" style="left:599.20px;top:140.40px;width:14.00px;height:8.55px" viewBox="0 0 16 9"><path d="M3 6h8M11 1v6" stroke="#fff" stroke-width="1.3" fill="none"/></svg>
<svg class="i" style="left:598.40px;top:139.60px;width:14.00px;height:8.55px" viewBox="0 0 16 9"><path d="M3 6h8M11 1v6" stroke="#aaa89a" stroke-width="1.3" fill="none"/></svg>
<svg class="t" style="left:598.50px;top:145.45px;width:19.38px;height:9.92px" viewBox="0 0 30 16" preserveAspectRatio="none" aria-label="aF10"><path fill="#fff" d="M6 4h5v1h-5zM12 4h3v1h-3zM20 4h3v1h-3zM6 5h1v1h-1zM14 5h1v1h-1zM19 5h1v1h-1zM23 5h1v1h-1zM1 6h3v1h-3zM6 6h1v1h-1zM14 6h1v1h-1zM19 6h1v1h-1zM23 6h1v1h-1zM0 7h1v1h-1zM4 7h1v1h-1zM6 7h4v1h-4zM14 7h1v1h-1zM19 7h1v1h-1zM23 7h1v1h-1zM1 8h4v1h-4zM6 8h1v1h-1zM14 8h1v1h-1zM19 8h1v1h-1zM23 8h1v1h-1zM0 9h1v1h-1zM4 9h1v1h-1zM6 9h1v1h-1zM14 9h1v1h-1zM19 9h1v1h-1zM23 9h1v1h-1zM0 10h1v1h-1zM4 10h1v1h-1zM6 10h1v1h-1zM14 10h1v1h-1zM19 10h1v1h-1zM23 10h1v1h-1zM1 11h4v1h-4zM6 11h1v1h-1zM12 11h5v1h-5zM20 11h3v1h-3z"/></svg>
<svg class="t" style="left:597.70px;top:144.65px;width:19.38px;height:9.92px" viewBox="0 0 30 16" preserveAspectRatio="none" aria-label="aF10"><path fill="#aaa89a" d="M6 4h5v1h-5zM12 4h3v1h-3zM20 4h3v1h-3zM6 5h1v1h-1zM14 5h1v1h-1zM19 5h1v1h-1zM23 5h1v1h-1zM1 6h3v1h-3zM6 6h1v1h-1zM14 6h1v1h-1zM19 6h1v1h-1zM23 6h1v1h-1zM0 7h1v1h-1zM4 7h1v1h-1zM6 7h4v1h-4zM14 7h1v1h-1zM19 7h1v1h-1zM23 7h1v1h-1zM1 8h4v1h-4zM6 8h1v1h-1zM14 8h1v1h-1zM19 8h1v1h-1zM23 8h1v1h-1zM0 9h1v1h-1zM4 9h1v1h-1zM6 9h1v1h-1zM14 9h1v1h-1zM19 9h1v1h-1zM23 9h1v1h-1zM0 10h1v1h-1zM4 10h1v1h-1zM6 10h1v1h-1zM14 10h1v1h-1zM19 10h1v1h-1zM23 10h1v1h-1zM1 11h4v1h-4zM6 11h1v1h-1zM12 11h5v1h-5zM20 11h3v1h-3z"/></svg>
<div class="b" style="left:616px;top:137px;width:20.5px;height:18.5px"></div>
<svg class="i" style="left:620.00px;top:140.40px;width:14.00px;height:8.55px" viewBox="0 0 16 9"><path d="M8 0.5v8M4.5 2.5l7 4M11.5 2.5l-7 4" stroke="#fff" stroke-width="1.1"/></svg>
<svg class="i" style="left:619.20px;top:139.60px;width:14.00px;height:8.55px" viewBox="0 0 16 9"><path d="M8 0.5v8M4.5 2.5l7 4M11.5 2.5l-7 4" stroke="#aaa89a" stroke-width="1.1"/></svg>
<svg class="t" style="left:620.75px;top:145.45px;width:17.05px;height:9.92px" viewBox="0 0 23 16" preserveAspectRatio="none" aria-label="aF9"><path fill="#fff" d="M6 4h5v1h-5zM13 4h3v1h-3zM6 5h1v1h-1zM12 5h1v1h-1zM16 5h1v1h-1zM1 6h3v1h-3zM6 6h1v1h-1zM12 6h1v1h-1zM16 6h1v1h-1zM0 7h1v1h-1zM4 7h1v1h-1zM6 7h4v1h-4zM12 7h1v1h-1zM16 7h1v1h-1zM1 8h4v1h-4zM6 8h1v1h-1zM13 8h4v1h-4zM0 9h1v1h-1zM4 9h1v1h-1zM6 9h1v1h-1zM16 9h1v1h-1zM0 10h1v1h-1zM4 10h1v1h-1zM6 10h1v1h-1zM12 10h1v1h-1zM16 10h1v1h-1zM1 11h4v1h-4zM6 11h1v1h-1zM13 11h3v1h-3z"/></svg>
<svg class="t" style="left:619.95px;top:144.65px;width:17.05px;height:9.92px" viewBox="0 0 23 16" preserveAspectRatio="none" aria-label="aF9"><path fill="#aaa89a" d="M6 4h5v1h-5zM13 4h3v1h-3zM6 5h1v1h-1zM12 5h1v1h-1zM16 5h1v1h-1zM1 6h3v1h-3zM6 6h1v1h-1zM12 6h1v1h-1zM16 6h1v1h-1zM0 7h1v1h-1zM4 7h1v1h-1zM6 7h4v1h-4zM12 7h1v1h-1zM16 7h1v1h-1zM1 8h4v1h-4zM6 8h1v1h-1zM13 8h4v1h-4zM0 9h1v1h-1zM4 9h1v1h-1zM6 9h1v1h-1zM16 9h1v1h-1zM0 10h1v1h-1zM4 10h1v1h-1zM6 10h1v1h-1zM12 10h1v1h-1zM16 10h1v1h-1zM1 11h4v1h-4zM6 11h1v1h-1zM13 11h3v1h-3z"/></svg>
<div class="a" style="left:2px;top:168.2px;width:105px;height:2px;border-top:1px solid #f8f6ee;border-bottom:1px solid #a8a595"></div>
<div class="a" style="left:2px;top:171.2px;width:105px;height:2px;border-top:1px solid #f8f6ee;border-bottom:1px solid #a8a595"></div>
<svg class="i" style="left:113px;top:165px;width:9px;height:9px" viewBox="0 0 9 9"><path d="M1 1L8 8M8 1L1 8" stroke="#000" stroke-width="1.6"/></svg>
<div class="a" style="left:4px;top:180.5px;width:119px;height:443px;background:#f7fcf8;border:1.5px solid #85837a;border-right-color:#6e6c62"></div>
<div class="a" style="left:4px;top:622px;width:40px;height:17px;background:#e9e4d4;border-left:1px solid #fff;border-right:1px solid #404040;border-bottom:1px solid #404040"></div>
<svg class="t" style="left:10.00px;top:624.62px;width:21.30px;height:13.60px" viewBox="0 0 28 16" preserveAspectRatio="none" aria-label="工程"><path fill="#000" d="M15 2h1v1h-1zM17 2h5v1h-5zM1 3h9v1h-9zM12 3h3v1h-3zM17 3h1v1h-1zM21 3h1v1h-1zM5 4h1v1h-1zM14 4h1v1h-1zM17 4h1v1h-1zM21 4h1v1h-1zM5 5h1v1h-1zM12 5h4v1h-4zM17 5h5v1h-5zM5 6h1v1h-1zM14 6h1v1h-1zM5 7h1v1h-1zM14 7h2v1h-2zM17 7h5v1h-5zM5 8h1v1h-1zM13 8h2v1h-2zM16 8h1v1h-1zM19 8h1v1h-1zM5 9h1v1h-1zM13 9h2v1h-2zM17 9h5v1h-5zM5 10h1v1h-1zM12 10h1v1h-1zM14 10h1v1h-1zM19 10h1v1h-1zM0 11h11v1h-11zM14 11h1v1h-1zM19 11h1v1h-1zM14 12h1v1h-1zM16 12h7v1h-7z" stroke="#000" stroke-width="0.4"/></svg>
<svg class="i" style="left:9.3px;top:186px;width:8px;height:8px" viewBox="0 0 8 8"><rect x="0.5" y="0.5" width="7" height="7" fill="#fff" stroke="#9c9a90"/><path d="M2 4h4.2" stroke="#000" stroke-width="1.2"/></svg>
<svg class="i" style="left:16px;top:188.5px;width:5px;height:2px" viewBox="0 0 5 2"><path d="M0 1H5" stroke="#a0a098" stroke-width="1" stroke-dasharray="1 1.5"/></svg>
<svg class="i" style="left:21.3px;top:182.7px;width:11.5px;height:11px" viewBox="0 0 11.5 11"><rect x="0" y="0" width="11.5" height="11" fill="#3cc43c"/><path d="M7 1.5h2v2 M2 6.5l3-2 2 2 3-2 M3 9h5 M9.5 4v6" stroke="#000" stroke-width="1.3" fill="none"/></svg>
<svg class="t" style="left:37.60px;top:182.32px;width:51.85px;height:13.60px" viewBox="0 0 64 16" preserveAspectRatio="none" aria-label="工程未设置"><path fill="#000" d="M15 2h1v1h-1zM17 2h5v1h-5zM29 2h1v1h-1zM37 2h1v1h-1zM41 2h4v1h-4zM49 2h9v1h-9zM1 3h9v1h-9zM12 3h3v1h-3zM17 3h1v1h-1zM21 3h1v1h-1zM29 3h1v1h-1zM38 3h1v1h-1zM41 3h1v1h-1zM44 3h1v1h-1zM49 3h1v1h-1zM52 3h1v1h-1zM54 3h1v1h-1zM57 3h1v1h-1zM5 4h1v1h-1zM14 4h1v1h-1zM17 4h1v1h-1zM21 4h1v1h-1zM25 4h9v1h-9zM41 4h1v1h-1zM44 4h1v1h-1zM49 4h9v1h-9zM5 5h1v1h-1zM12 5h4v1h-4zM17 5h5v1h-5zM29 5h1v1h-1zM40 5h1v1h-1zM44 5h3v1h-3zM53 5h1v1h-1zM5 6h1v1h-1zM14 6h1v1h-1zM24 6h11v1h-11zM36 6h3v1h-3zM48 6h11v1h-11zM5 7h1v1h-1zM14 7h2v1h-2zM17 7h5v1h-5zM29 7h1v1h-1zM38 7h1v1h-1zM40 7h6v1h-6zM50 7h1v1h-1zM56 7h1v1h-1zM5 8h1v1h-1zM13 8h2v1h-2zM16 8h1v1h-1zM19 8h1v1h-1zM28 8h3v1h-3zM38 8h1v1h-1zM41 8h1v1h-1zM45 8h1v1h-1zM50 8h7v1h-7zM5 9h1v1h-1zM13 9h2v1h-2zM17 9h5v1h-5zM27 9h1v1h-1zM29 9h1v1h-1zM31 9h1v1h-1zM38 9h1v1h-1zM42 9h1v1h-1zM44 9h1v1h-1zM50 9h1v1h-1zM56 9h1v1h-1zM5 10h1v1h-1zM12 10h1v1h-1zM14 10h1v1h-1zM19 10h1v1h-1zM26 10h1v1h-1zM29 10h1v1h-1zM32 10h1v1h-1zM38 10h2v1h-2zM43 10h1v1h-1zM50 10h7v1h-7zM0 11h11v1h-11zM14 11h1v1h-1zM19 11h1v1h-1zM24 11h2v1h-2zM29 11h1v1h-1zM33 11h2v1h-2zM38 11h1v1h-1zM42 11h1v1h-1zM44 11h1v1h-1zM50 11h1v1h-1zM56 11h1v1h-1zM14 12h1v1h-1zM16 12h7v1h-7zM29 12h1v1h-1zM39 12h3v1h-3zM45 12h2v1h-2zM48 12h11v1h-11z" stroke="#000" stroke-width="0.25"/></svg>
<svg class="i" style="left:24px;top:198px;width:8px;height:8px" viewBox="0 0 8 8"><rect x="0.5" y="0.5" width="7" height="7" fill="#fff" stroke="#9c9a90"/></svg>
<svg class="i" style="left:36px;top:195.2px;width:12px;height:12px" viewBox="0 0 12 12"><rect x="0.5" y="0.5" width="11" height="11" fill="#fff" stroke="#7c7c90"/><path d="M2 3h3M7 3h3M2 6h2M6 6h4M2 9h3M7 9h3" stroke="#1a2aa0" stroke-width="1.3"/><path d="M0.5 11.5H11.5" stroke="#000"/></svg>
<svg class="t" style="left:52.80px;top:194.82px;width:22.52px;height:13.60px" viewBox="0 0 28 16" preserveAspectRatio="none" aria-label="程序"><path fill="#000" d="M3 2h1v1h-1zM5 2h5v1h-5zM17 2h1v1h-1zM0 3h3v1h-3zM5 3h1v1h-1zM9 3h1v1h-1zM13 3h10v1h-10zM2 4h1v1h-1zM5 4h1v1h-1zM9 4h1v1h-1zM13 4h1v1h-1zM0 5h4v1h-4zM5 5h5v1h-5zM13 5h1v1h-1zM15 5h6v1h-6zM2 6h1v1h-1zM13 6h1v1h-1zM17 6h1v1h-1zM19 6h1v1h-1zM2 7h2v1h-2zM5 7h5v1h-5zM13 7h1v1h-1zM18 7h1v1h-1zM1 8h2v1h-2zM4 8h1v1h-1zM7 8h1v1h-1zM13 8h10v1h-10zM1 9h2v1h-2zM5 9h5v1h-5zM13 9h1v1h-1zM18 9h1v1h-1zM21 9h1v1h-1zM0 10h1v1h-1zM2 10h1v1h-1zM7 10h1v1h-1zM13 10h1v1h-1zM18 10h1v1h-1zM2 11h1v1h-1zM7 11h1v1h-1zM12 11h1v1h-1zM18 11h1v1h-1zM2 12h1v1h-1zM4 12h7v1h-7zM12 12h1v1h-1zM16 12h3v1h-3z" stroke="#000" stroke-width="0.25"/></svg>
<svg class="i" style="left:41px;top:207px;width:2px;height:7px" viewBox="0 0 2 7"><path d="M1 0V7" stroke="#a0a098" stroke-width="1" stroke-dasharray="1 1.5"/></svg>
<svg class="i" style="left:42px;top:213px;width:10px;height:2px" viewBox="0 0 10 2"><path d="M0 1H10" stroke="#a0a098" stroke-width="1" stroke-dasharray="1 1.5"/></svg>
<div class="a" style="left:67px;top:208.5px;width:26.6px;height:10.5px;background:#e6e4dc"></div>
<svg class="i" style="left:52.3px;top:208.8px;width:11.4px;height:11.4px" viewBox="0 0 11.4 11.4"><rect x="0.5" y="0.5" width="10.4" height="10.4" fill="#fff" stroke="#606080"/><path d="M2 3h4M4 3v4M2 7h7M2 7v2M9 5v4" stroke="#10208a" stroke-width="1.5" fill="none"/><path d="M0.5 11H11" stroke="#000" stroke-width="1.2"/></svg>
<svg class="t" style="left:68.00px;top:207.62px;width:23.85px;height:13.60px" viewBox="0 0 31 16" preserveAspectRatio="none" aria-label="MAIN"><path fill="#000" d="M0 4h2v1h-2zM5 4h2v1h-2zM13 4h1v1h-1zM17 4h4v1h-4zM25 4h1v1h-1zM0 5h2v1h-2zM5 5h2v1h-2zM13 5h1v1h-1zM18 5h1v1h-1zM20 5h2v1h-2zM25 5h1v1h-1zM0 6h1v1h-1zM2 6h1v1h-1zM4 6h1v1h-1zM6 6h1v1h-1zM12 6h1v1h-1zM14 6h1v1h-1zM18 6h1v1h-1zM20 6h1v1h-1zM22 6h1v1h-1zM25 6h1v1h-1zM0 7h1v1h-1zM2 7h1v1h-1zM4 7h1v1h-1zM6 7h1v1h-1zM12 7h1v1h-1zM14 7h1v1h-1zM18 7h1v1h-1zM20 7h1v1h-1zM23 7h1v1h-1zM25 7h1v1h-1zM0 8h1v1h-1zM3 8h1v1h-1zM6 8h1v1h-1zM11 8h1v1h-1zM15 8h1v1h-1zM18 8h1v1h-1zM20 8h1v1h-1zM24 8h2v1h-2zM0 9h1v1h-1zM3 9h1v1h-1zM6 9h1v1h-1zM11 9h5v1h-5zM18 9h1v1h-1zM20 9h1v1h-1zM25 9h1v1h-1zM0 10h1v1h-1zM6 10h1v1h-1zM10 10h1v1h-1zM16 10h1v1h-1zM18 10h1v1h-1zM20 10h1v1h-1zM25 10h1v1h-1zM0 11h1v1h-1zM6 11h1v1h-1zM10 11h1v1h-1zM16 11h5v1h-5zM25 11h1v1h-1z" stroke="#000" stroke-width="0.5"/></svg>
<svg class="i" style="left:24.2px;top:224px;width:8px;height:8px" viewBox="0 0 8 8"><rect x="0.5" y="0.5" width="7" height="7" fill="#fff" stroke="#9c9a90"/><path d="M2 4h4.2" stroke="#000" stroke-width="1.2"/></svg>
<svg class="i" style="left:32px;top:226.5px;width:4px;height:2px" viewBox="0 0 4 2"><path d="M0 1H4" stroke="#a0a098" stroke-width="1" stroke-dasharray="1 1.5"/></svg>
<svg class="i" style="left:36.2px;top:221.3px;width:11.4px;height:12px" viewBox="0 0 11.4 12"><rect x="0.5" y="0.5" width="10.4" height="11" fill="#fff" stroke="#606070"/><path d="M2 2h3v3M6 2h3" stroke="#28a028" stroke-width="1.6" fill="none"/><path d="M5 4v3l-2 2h5" stroke="#802090" stroke-width="1.5" fill="none"/><path d="M0.5 11.5H11" stroke="#000" stroke-width="1.2"/></svg>
<svg class="t" style="left:53.00px;top:220.32px;width:51.31px;height:13.60px" viewBox="0 0 64 16" preserveAspectRatio="none" aria-label="软元件注释"><path fill="#000" d="M1 2h1v1h-1zM6 2h1v1h-1zM27 2h1v1h-1zM31 2h1v1h-1zM37 2h1v1h-1zM42 2h1v1h-1zM51 2h7v1h-7zM1 3h1v1h-1zM6 3h1v1h-1zM14 3h8v1h-8zM27 3h1v1h-1zM29 3h1v1h-1zM31 3h1v1h-1zM38 3h1v1h-1zM43 3h1v1h-1zM48 3h3v1h-3zM54 3h1v1h-1zM56 3h1v1h-1zM0 4h5v1h-5zM6 4h5v1h-5zM26 4h1v1h-1zM29 4h1v1h-1zM31 4h1v1h-1zM36 4h1v1h-1zM40 4h7v1h-7zM48 4h1v1h-1zM50 4h1v1h-1zM52 4h1v1h-1zM55 4h1v1h-1zM1 5h1v1h-1zM6 5h1v1h-1zM10 5h1v1h-1zM26 5h1v1h-1zM28 5h6v1h-6zM37 5h1v1h-1zM39 5h1v1h-1zM43 5h1v1h-1zM49 5h3v1h-3zM54 5h1v1h-1zM56 5h1v1h-1zM0 6h1v1h-1zM2 6h1v1h-1zM5 6h1v1h-1zM7 6h1v1h-1zM9 6h1v1h-1zM13 6h10v1h-10zM25 6h3v1h-3zM31 6h1v1h-1zM39 6h1v1h-1zM43 6h1v1h-1zM48 6h6v1h-6zM55 6h1v1h-1zM57 6h2v1h-2zM0 7h5v1h-5zM7 7h1v1h-1zM16 7h1v1h-1zM19 7h1v1h-1zM24 7h1v1h-1zM26 7h1v1h-1zM31 7h1v1h-1zM38 7h1v1h-1zM43 7h1v1h-1zM50 7h2v1h-2zM55 7h1v1h-1zM2 8h1v1h-1zM7 8h1v1h-1zM16 8h1v1h-1zM19 8h1v1h-1zM26 8h1v1h-1zM28 8h7v1h-7zM38 8h1v1h-1zM41 8h5v1h-5zM49 8h2v1h-2zM52 8h6v1h-6zM2 9h3v1h-3zM6 9h1v1h-1zM8 9h1v1h-1zM15 9h1v1h-1zM19 9h1v1h-1zM26 9h1v1h-1zM31 9h1v1h-1zM36 9h2v1h-2zM43 9h1v1h-1zM48 9h1v1h-1zM50 9h1v1h-1zM55 9h1v1h-1zM0 10h3v1h-3zM6 10h1v1h-1zM8 10h1v1h-1zM15 10h1v1h-1zM19 10h1v1h-1zM22 10h1v1h-1zM26 10h1v1h-1zM31 10h1v1h-1zM37 10h1v1h-1zM43 10h1v1h-1zM48 10h1v1h-1zM50 10h1v1h-1zM52 10h7v1h-7zM2 11h1v1h-1zM5 11h1v1h-1zM9 11h1v1h-1zM14 11h1v1h-1zM19 11h1v1h-1zM22 11h1v1h-1zM26 11h1v1h-1zM31 11h1v1h-1zM37 11h1v1h-1zM43 11h1v1h-1zM50 11h1v1h-1zM55 11h1v1h-1zM2 12h1v1h-1zM4 12h1v1h-1zM10 12h1v1h-1zM13 12h1v1h-1zM20 12h3v1h-3zM26 12h1v1h-1zM31 12h1v1h-1zM37 12h1v1h-1zM40 12h7v1h-7zM50 12h1v1h-1zM55 12h1v1h-1z" stroke="#000" stroke-width="0.25"/></svg>
<svg class="i" style="left:41px;top:233px;width:2px;height:7px" viewBox="0 0 2 7"><path d="M1 0V7" stroke="#a0a098" stroke-width="1" stroke-dasharray="1 1.5"/></svg>
<svg class="i" style="left:42px;top:239px;width:10px;height:2px" viewBox="0 0 10 2"><path d="M0 1H10" stroke="#a0a098" stroke-width="1" stroke-dasharray="1 1.5"/></svg>
<svg class="i" style="left:52.5px;top:234.8px;width:11px;height:10.5px" viewBox="0 0 11 10.5"><path d="M1 1h3v3M5 1h2" stroke="#30a030" stroke-width="1.6" fill="none"/><path d="M4 3v3l-2 2h5" stroke="#602090" stroke-width="1.5" fill="none"/><path d="M9.5 1v9.5" stroke="#000" stroke-width="1.4"/></svg>
<svg class="t" style="left:68.30px;top:233.32px;width:33.74px;height:13.60px" viewBox="0 0 59 16" preserveAspectRatio="none" aria-label="COMMENT"><path fill="#000" d="M1 4h4v1h-4zM9 4h3v1h-3zM15 4h2v1h-2zM20 4h2v1h-2zM25 4h2v1h-2zM30 4h2v1h-2zM35 4h5v1h-5zM42 4h1v1h-1zM47 4h1v1h-1zM50 4h7v1h-7zM0 5h1v1h-1zM5 5h1v1h-1zM8 5h1v1h-1zM12 5h1v1h-1zM15 5h2v1h-2zM20 5h2v1h-2zM25 5h2v1h-2zM30 5h2v1h-2zM35 5h1v1h-1zM42 5h2v1h-2zM47 5h1v1h-1zM53 5h1v1h-1zM0 6h1v1h-1zM7 6h1v1h-1zM13 6h1v1h-1zM15 6h1v1h-1zM17 6h1v1h-1zM19 6h1v1h-1zM21 6h1v1h-1zM25 6h1v1h-1zM27 6h1v1h-1zM29 6h1v1h-1zM31 6h1v1h-1zM35 6h1v1h-1zM42 6h1v1h-1zM44 6h1v1h-1zM47 6h1v1h-1zM53 6h1v1h-1zM0 7h1v1h-1zM7 7h1v1h-1zM13 7h1v1h-1zM15 7h1v1h-1zM17 7h1v1h-1zM19 7h1v1h-1zM21 7h1v1h-1zM25 7h1v1h-1zM27 7h1v1h-1zM29 7h1v1h-1zM31 7h1v1h-1zM35 7h5v1h-5zM42 7h1v1h-1zM45 7h1v1h-1zM47 7h1v1h-1zM53 7h1v1h-1zM0 8h1v1h-1zM7 8h1v1h-1zM13 8h1v1h-1zM15 8h1v1h-1zM18 8h1v1h-1zM21 8h1v1h-1zM25 8h1v1h-1zM28 8h1v1h-1zM31 8h1v1h-1zM35 8h1v1h-1zM42 8h1v1h-1zM46 8h2v1h-2zM53 8h1v1h-1zM0 9h1v1h-1zM7 9h1v1h-1zM13 9h1v1h-1zM15 9h1v1h-1zM18 9h1v1h-1zM21 9h1v1h-1zM25 9h1v1h-1zM28 9h1v1h-1zM31 9h1v1h-1zM35 9h1v1h-1zM42 9h1v1h-1zM47 9h1v1h-1zM53 9h1v1h-1zM0 10h1v1h-1zM5 10h1v1h-1zM8 10h1v1h-1zM12 10h1v1h-1zM15 10h1v1h-1zM21 10h1v1h-1zM25 10h1v1h-1zM31 10h1v1h-1zM35 10h1v1h-1zM42 10h1v1h-1zM47 10h1v1h-1zM53 10h1v1h-1zM1 11h4v1h-4zM9 11h3v1h-3zM15 11h1v1h-1zM21 11h1v1h-1zM25 11h1v1h-1zM31 11h1v1h-1zM35 11h5v1h-5zM42 11h1v1h-1zM47 11h1v1h-1zM53 11h1v1h-1z" stroke="#000" stroke-width="0.5"/></svg>
<svg class="i" style="left:24.2px;top:249.5px;width:8px;height:8px" viewBox="0 0 8 8"><rect x="0.5" y="0.5" width="7" height="7" fill="#fff" stroke="#9c9a90"/><path d="M2 4h4.2" stroke="#000" stroke-width="1.2"/></svg>
<svg class="i" style="left:32px;top:252px;width:4px;height:2px" viewBox="0 0 4 2"><path d="M0 1H4" stroke="#a0a098" stroke-width="1" stroke-dasharray="1 1.5"/></svg>
<svg class="i" style="left:36.2px;top:246.3px;width:11.4px;height:12px" viewBox="0 0 11.4 12"><rect x="0.5" y="0.5" width="10.4" height="11" fill="#fff" stroke="#707070"/><path d="M2.5 9.5L8.5 3" stroke="#30a030" stroke-width="1.8"/><path d="M4 6l2 2" stroke="#000" stroke-width="1"/><path d="M0.5 11.5H11" stroke="#000" stroke-width="1.2"/></svg>
<svg class="t" style="left:53.00px;top:246.22px;width:23.13px;height:13.60px" viewBox="0 0 28 16" preserveAspectRatio="none" aria-label="参数"><path fill="#000" d="M4 2h1v1h-1zM12 2h1v1h-1zM15 2h1v1h-1zM17 2h1v1h-1zM19 2h1v1h-1zM3 3h1v1h-1zM7 3h1v1h-1zM13 3h1v1h-1zM15 3h2v1h-2zM19 3h1v1h-1zM2 4h7v1h-7zM12 4h6v1h-6zM19 4h4v1h-4zM4 5h1v1h-1zM14 5h2v1h-2zM18 5h2v1h-2zM21 5h1v1h-1zM0 6h11v1h-11zM13 6h1v1h-1zM15 6h2v1h-2zM19 6h1v1h-1zM21 6h1v1h-1zM2 7h1v1h-1zM5 7h1v1h-1zM8 7h1v1h-1zM12 7h1v1h-1zM15 7h1v1h-1zM17 7h1v1h-1zM19 7h1v1h-1zM21 7h1v1h-1zM0 8h2v1h-2zM3 8h2v1h-2zM9 8h2v1h-2zM12 8h6v1h-6zM19 8h1v1h-1zM21 8h1v1h-1zM5 9h2v1h-2zM14 9h1v1h-1zM16 9h1v1h-1zM19 9h1v1h-1zM21 9h1v1h-1zM3 10h2v1h-2zM8 10h1v1h-1zM13 10h2v1h-2zM16 10h1v1h-1zM20 10h1v1h-1zM6 11h2v1h-2zM15 11h1v1h-1zM19 11h1v1h-1zM21 11h1v1h-1zM2 12h4v1h-4zM12 12h3v1h-3zM16 12h3v1h-3zM22 12h1v1h-1z" stroke="#000" stroke-width="0.25"/></svg>
<svg class="i" style="left:36.2px;top:259.8px;width:11.4px;height:12px" viewBox="0 0 11.4 12"><rect x="0.5" y="0.5" width="10.4" height="11" fill="#fff" stroke="#606080"/><path d="M2.5 2.5h4M2.5 2.5v6h4" stroke="#10208a" stroke-width="1.6" fill="none"/><rect x="6" y="7" width="3.5" height="3" fill="#202060"/><path d="M0.5 11.5H11" stroke="#000" stroke-width="1.2"/></svg>
<svg class="t" style="left:53.00px;top:259.43px;width:50.77px;height:13.60px" viewBox="0 0 64 16" preserveAspectRatio="none" aria-label="软元件内存"><path fill="#000" d="M1 2h1v1h-1zM6 2h1v1h-1zM27 2h1v1h-1zM31 2h1v1h-1zM41 2h1v1h-1zM52 2h1v1h-1zM1 3h1v1h-1zM6 3h1v1h-1zM14 3h8v1h-8zM27 3h1v1h-1zM29 3h1v1h-1zM31 3h1v1h-1zM41 3h1v1h-1zM48 3h11v1h-11zM0 4h5v1h-5zM6 4h5v1h-5zM26 4h1v1h-1zM29 4h1v1h-1zM31 4h1v1h-1zM37 4h10v1h-10zM51 4h1v1h-1zM1 5h1v1h-1zM6 5h1v1h-1zM10 5h1v1h-1zM26 5h1v1h-1zM28 5h6v1h-6zM37 5h1v1h-1zM41 5h1v1h-1zM46 5h1v1h-1zM50 5h1v1h-1zM52 5h6v1h-6zM0 6h1v1h-1zM2 6h1v1h-1zM5 6h1v1h-1zM7 6h1v1h-1zM9 6h1v1h-1zM13 6h10v1h-10zM25 6h3v1h-3zM31 6h1v1h-1zM37 6h1v1h-1zM41 6h1v1h-1zM46 6h1v1h-1zM50 6h1v1h-1zM56 6h1v1h-1zM0 7h5v1h-5zM7 7h1v1h-1zM16 7h1v1h-1zM19 7h1v1h-1zM24 7h1v1h-1zM26 7h1v1h-1zM31 7h1v1h-1zM37 7h1v1h-1zM41 7h2v1h-2zM46 7h1v1h-1zM49 7h2v1h-2zM55 7h1v1h-1zM2 8h1v1h-1zM7 8h1v1h-1zM16 8h1v1h-1zM19 8h1v1h-1zM26 8h1v1h-1zM28 8h7v1h-7zM37 8h1v1h-1zM40 8h1v1h-1zM43 8h1v1h-1zM46 8h1v1h-1zM48 8h1v1h-1zM50 8h9v1h-9zM2 9h3v1h-3zM6 9h1v1h-1zM8 9h1v1h-1zM15 9h1v1h-1zM19 9h1v1h-1zM26 9h1v1h-1zM31 9h1v1h-1zM37 9h1v1h-1zM39 9h1v1h-1zM44 9h1v1h-1zM46 9h1v1h-1zM50 9h1v1h-1zM55 9h1v1h-1zM0 10h3v1h-3zM6 10h1v1h-1zM8 10h1v1h-1zM15 10h1v1h-1zM19 10h1v1h-1zM22 10h1v1h-1zM26 10h1v1h-1zM31 10h1v1h-1zM37 10h1v1h-1zM46 10h1v1h-1zM50 10h1v1h-1zM55 10h1v1h-1zM2 11h1v1h-1zM5 11h1v1h-1zM9 11h1v1h-1zM14 11h1v1h-1zM19 11h1v1h-1zM22 11h1v1h-1zM26 11h1v1h-1zM31 11h1v1h-1zM37 11h1v1h-1zM46 11h1v1h-1zM50 11h1v1h-1zM55 11h1v1h-1zM2 12h1v1h-1zM4 12h1v1h-1zM10 12h1v1h-1zM13 12h1v1h-1zM20 12h3v1h-3zM26 12h1v1h-1zM31 12h1v1h-1zM37 12h1v1h-1zM44 12h3v1h-3zM50 12h1v1h-1zM53 12h3v1h-3z" stroke="#000" stroke-width="0.25"/></svg>
<div class="a" style="left:130px;top:161px;width:397px;height:484px;background:#f7fcf8;border-left:1px solid #a8a498;border-top:1px solid #a8a498;box-shadow:inset 1px 1px 0 #000"></div>
<div class="a" style="left:513px;top:163px;width:14px;height:468px;background:linear-gradient(90deg,#eeede5,#f6f5f0)"></div>
<div class="a" style="left:132px;top:631px;width:381px;height:13px;background:linear-gradient(#eeede5,#f6f5f0)"></div>
<div class="a" style="left:513px;top:631px;width:14px;height:13px;background:#e9e4d4"></div>
<div class="a" style="left:514px;top:163.5px;width:12px;height:11.8px;border:1px solid #eef2fc;border-radius:2px;background:linear-gradient(135deg,#d8e3fb,#c0d0f6 70%,#b4c6f0)"></div>
<svg class="i" style="left:514.0px;top:163.4px;width:12px;height:12px" viewBox="-6 -6 12 12"><path d="M-3.2 1.8L0 -1.4L3.2 1.8" fill="none" stroke="#4d6185" stroke-width="2"/></svg>
<div class="a" style="left:514px;top:176.2px;width:12px;height:13.3px;border:1px solid #eef2fc;border-radius:2px;background:linear-gradient(135deg,#d8e3fb,#c0d0f6 70%,#b4c6f0)"></div>
<svg class="i" style="left:514.0px;top:176.85px;width:12px;height:12px" viewBox="-6 -6 12 12"><path d="M-3 -2.5h6M-3 0h6M-3 2.5h6" stroke="#8ca4dc" stroke-width="1"/></svg>
<div class="a" style="left:514.8px;top:617px;width:11px;height:11px;border:1px solid #eef2fc;border-radius:2px;background:linear-gradient(135deg,#d8e3fb,#c0d0f6 70%,#b4c6f0)"></div>
<svg class="i" style="left:514.3px;top:616.5px;width:12px;height:12px" viewBox="-6 -6 12 12"><path d="M-3.2 -1.8L0 1.4L3.2 -1.8" fill="none" stroke="#4d6185" stroke-width="2"/></svg>
<div class="a" style="left:132px;top:631px;width:12px;height:12.5px;border:1px solid #eef2fc;border-radius:2px;background:linear-gradient(135deg,#d8e3fb,#c0d0f6 70%,#b4c6f0)"></div>
<svg class="i" style="left:132.0px;top:631.25px;width:12px;height:12px" viewBox="-6 -6 12 12"><path d="M1.6 -3.2L-1.6 0L1.6 3.2" fill="none" stroke="#4d6185" stroke-width="2"/></svg>
<div class="a" style="left:145.7px;top:631px;width:12.3px;height:12.5px;border:1px solid #eef2fc;border-radius:2px;background:linear-gradient(135deg,#d8e3fb,#c0d0f6 70%,#b4c6f0)"></div>
<svg class="i" style="left:145.85px;top:631.25px;width:12px;height:12px" viewBox="-6 -6 12 12"><path d="M-2.5 -3v6M0 -3v6M2.5 -3v6" stroke="#8ca4dc" stroke-width="1"/></svg>
<div class="a" style="left:500.5px;top:631.6px;width:12px;height:11px;border:1px solid #eef2fc;border-radius:2px;background:linear-gradient(135deg,#d8e3fb,#c0d0f6 70%,#b4c6f0)"></div>
<svg class="i" style="left:500.5px;top:631.1px;width:12px;height:12px" viewBox="-6 -6 12 12"><path d="M-1.6 -3.2L1.6 0L-1.6 3.2" fill="none" stroke="#4d6185" stroke-width="2"/></svg>
<div class="a" style="left:531px;top:161px;width:389px;height:484px;background:#f7fcf8;border-left:1px solid #9a9c94;border-top:1px solid #a8a498;box-shadow:inset 0 1px 0 #000"></div>
<div class="a" style="left:532px;top:163px;width:317px;height:39px;background:#b6b8b4"></div>
<div class="a" style="left:579.6px;top:163px;width:1.5px;height:481px;background:#000"></div>
<div class="a" style="left:848.6px;top:163px;width:1.5px;height:481px;background:#000"></div>
<div class="a" style="left:906px;top:163px;width:14px;height:481px;background:linear-gradient(90deg,#eeede5,#f6f5f0)"></div>
<div class="a" style="left:907.4px;top:163px;width:10.6px;height:10px;border:1px solid #eef2fc;border-radius:2px;background:linear-gradient(135deg,#d8e3fb,#c0d0f6 70%,#b4c6f0)"></div>
<svg class="i" style="left:906.6999999999999px;top:162.0px;width:12px;height:12px" viewBox="-6 -6 12 12"><path d="M-3.2 1.8L0 -1.4L3.2 1.8" fill="none" stroke="#4d6185" stroke-width="2"/></svg>
<div class="a" style="left:907.4px;top:176px;width:10.6px;height:12px;border:1px solid #eef2fc;border-radius:2px;background:linear-gradient(135deg,#d8e3fb,#c0d0f6 70%,#b4c6f0)"></div>
<svg class="i" style="left:906.6999999999999px;top:176.0px;width:12px;height:12px" viewBox="-6 -6 12 12"><path d="M-3 -2.5h6M-3 0h6M-3 2.5h6" stroke="#8ca4dc" stroke-width="1"/></svg>
<div class="a" style="left:907.8px;top:630px;width:11px;height:13px;border:1px solid #eef2fc;border-radius:2px;background:linear-gradient(135deg,#d8e3fb,#c0d0f6 70%,#b4c6f0)"></div>
<svg class="i" style="left:907.3px;top:630.5px;width:12px;height:12px" viewBox="-6 -6 12 12"><path d="M-3.2 -1.8L0 1.4L3.2 -1.8" fill="none" stroke="#4d6185" stroke-width="2"/></svg>
<div class="a" style="left:132px;top:167.3px;width:381px;height:8px;overflow:hidden">
<svg class="t" style="left:33.60px;top:-3.90px;width:9.24px;height:11.52px" viewBox="0 0 11 16" preserveAspectRatio="none" aria-label="1"><path fill="#000" d="M0 4h3v1h-3zM2 5h1v1h-1zM2 6h1v1h-1zM2 7h1v1h-1zM2 8h1v1h-1zM2 9h1v1h-1zM2 10h1v1h-1zM0 11h5v1h-5z" stroke="#000" stroke-width="0.15"/></svg>
<svg class="t" style="left:92.70px;top:-3.90px;width:9.24px;height:11.52px" viewBox="0 0 11 16" preserveAspectRatio="none" aria-label="2"><path fill="#000" d="M1 4h3v1h-3zM0 5h1v1h-1zM4 5h1v1h-1zM4 6h1v1h-1zM4 7h1v1h-1zM3 8h1v1h-1zM2 9h1v1h-1zM1 10h1v1h-1zM0 11h5v1h-5z" stroke="#000" stroke-width="0.15"/></svg>
<svg class="t" style="left:151.80px;top:-3.90px;width:9.24px;height:11.52px" viewBox="0 0 11 16" preserveAspectRatio="none" aria-label="3"><path fill="#000" d="M0 4h4v1h-4zM4 5h1v1h-1zM4 6h1v1h-1zM1 7h3v1h-3zM4 8h1v1h-1zM4 9h1v1h-1zM4 10h1v1h-1zM0 11h4v1h-4z" stroke="#000" stroke-width="0.15"/></svg>
<svg class="t" style="left:210.90px;top:-3.90px;width:7.70px;height:11.52px" viewBox="0 0 11 16" preserveAspectRatio="none" aria-label="4"><path fill="#000" d="M3 4h2v1h-2zM2 5h1v1h-1zM4 5h1v1h-1zM1 6h1v1h-1zM4 6h1v1h-1zM1 7h1v1h-1zM4 7h1v1h-1zM0 8h1v1h-1zM4 8h1v1h-1zM0 9h6v1h-6zM4 10h1v1h-1zM4 11h1v1h-1z" stroke="#000" stroke-width="0.15"/></svg>
<svg class="t" style="left:270.00px;top:-3.90px;width:9.24px;height:11.52px" viewBox="0 0 11 16" preserveAspectRatio="none" aria-label="5"><path fill="#000" d="M0 4h4v1h-4zM0 5h1v1h-1zM0 6h1v1h-1zM0 7h4v1h-4zM4 8h1v1h-1zM4 9h1v1h-1zM4 10h1v1h-1zM0 11h4v1h-4z" stroke="#000" stroke-width="0.15"/></svg>
<svg class="t" style="left:329.10px;top:-3.90px;width:9.24px;height:11.52px" viewBox="0 0 11 16" preserveAspectRatio="none" aria-label="6"><path fill="#000" d="M1 4h3v1h-3zM0 5h1v1h-1zM0 6h1v1h-1zM0 7h4v1h-4zM0 8h1v1h-1zM4 8h1v1h-1zM0 9h1v1h-1zM4 9h1v1h-1zM0 10h1v1h-1zM4 10h1v1h-1zM1 11h3v1h-3z" stroke="#000" stroke-width="0.15"/></svg>
</div>
<svg class="t" style="left:149.40px;top:177.55px;width:8.80px;height:11.84px" viewBox="0 0 11 16" preserveAspectRatio="none" aria-label="1"><path fill="#000" d="M0 4h3v1h-3zM2 5h1v1h-1zM2 6h1v1h-1zM2 7h1v1h-1zM2 8h1v1h-1zM2 9h1v1h-1zM2 10h1v1h-1zM0 11h5v1h-5z" stroke="#000" stroke-width="0.2"/></svg>
<svg class="t" style="left:149.40px;top:193.34px;width:8.80px;height:11.84px" viewBox="0 0 11 16" preserveAspectRatio="none" aria-label="2"><path fill="#000" d="M1 4h3v1h-3zM0 5h1v1h-1zM4 5h1v1h-1zM4 6h1v1h-1zM4 7h1v1h-1zM3 8h1v1h-1zM2 9h1v1h-1zM1 10h1v1h-1zM0 11h5v1h-5z" stroke="#000" stroke-width="0.2"/></svg>
<svg class="t" style="left:149.40px;top:209.13px;width:8.80px;height:11.84px" viewBox="0 0 11 16" preserveAspectRatio="none" aria-label="3"><path fill="#000" d="M0 4h4v1h-4zM4 5h1v1h-1zM4 6h1v1h-1zM1 7h3v1h-3zM4 8h1v1h-1zM4 9h1v1h-1zM4 10h1v1h-1zM0 11h4v1h-4z" stroke="#000" stroke-width="0.2"/></svg>
<svg class="t" style="left:149.40px;top:224.92px;width:7.33px;height:11.84px" viewBox="0 0 11 16" preserveAspectRatio="none" aria-label="4"><path fill="#000" d="M3 4h2v1h-2zM2 5h1v1h-1zM4 5h1v1h-1zM1 6h1v1h-1zM4 6h1v1h-1zM1 7h1v1h-1zM4 7h1v1h-1zM0 8h1v1h-1zM4 8h1v1h-1zM0 9h6v1h-6zM4 10h1v1h-1zM4 11h1v1h-1z" stroke="#000" stroke-width="0.2"/></svg>
<svg class="t" style="left:149.40px;top:240.71px;width:8.80px;height:11.84px" viewBox="0 0 11 16" preserveAspectRatio="none" aria-label="5"><path fill="#000" d="M0 4h4v1h-4zM0 5h1v1h-1zM0 6h1v1h-1zM0 7h4v1h-4zM4 8h1v1h-1zM4 9h1v1h-1zM4 10h1v1h-1zM0 11h4v1h-4z" stroke="#000" stroke-width="0.2"/></svg>
<svg class="t" style="left:149.40px;top:256.50px;width:8.80px;height:11.84px" viewBox="0 0 11 16" preserveAspectRatio="none" aria-label="6"><path fill="#000" d="M1 4h3v1h-3zM0 5h1v1h-1zM0 6h1v1h-1zM0 7h4v1h-4zM0 8h1v1h-1zM4 8h1v1h-1zM0 9h1v1h-1zM4 9h1v1h-1zM0 10h1v1h-1zM4 10h1v1h-1zM1 11h3v1h-3z" stroke="#000" stroke-width="0.2"/></svg>
<svg class="t" style="left:149.40px;top:272.29px;width:8.80px;height:11.84px" viewBox="0 0 11 16" preserveAspectRatio="none" aria-label="7"><path fill="#000" d="M0 4h5v1h-5zM4 5h1v1h-1zM4 6h1v1h-1zM3 7h1v1h-1zM3 8h1v1h-1zM2 9h1v1h-1zM2 10h1v1h-1zM2 11h1v1h-1z" stroke="#000" stroke-width="0.2"/></svg>
<svg class="t" style="left:149.40px;top:288.08px;width:8.80px;height:11.84px" viewBox="0 0 11 16" preserveAspectRatio="none" aria-label="8"><path fill="#000" d="M1 4h3v1h-3zM0 5h1v1h-1zM4 5h1v1h-1zM0 6h1v1h-1zM4 6h1v1h-1zM1 7h3v1h-3zM0 8h1v1h-1zM4 8h1v1h-1zM0 9h1v1h-1zM4 9h1v1h-1zM0 10h1v1h-1zM4 10h1v1h-1zM1 11h3v1h-3z" stroke="#000" stroke-width="0.2"/></svg>
<svg class="t" style="left:149.40px;top:303.87px;width:8.80px;height:11.84px" viewBox="0 0 11 16" preserveAspectRatio="none" aria-label="9"><path fill="#000" d="M1 4h3v1h-3zM0 5h1v1h-1zM4 5h1v1h-1zM0 6h1v1h-1zM4 6h1v1h-1zM0 7h1v1h-1zM4 7h1v1h-1zM1 8h4v1h-4zM4 9h1v1h-1zM0 10h1v1h-1zM4 10h1v1h-1zM1 11h3v1h-3z" stroke="#000" stroke-width="0.2"/></svg>
<svg class="t" style="left:144.40px;top:319.66px;width:13.50px;height:11.84px" viewBox="0 0 18 16" preserveAspectRatio="none" aria-label="10"><path fill="#000" d="M0 4h3v1h-3zM8 4h3v1h-3zM2 5h1v1h-1zM7 5h1v1h-1zM11 5h1v1h-1zM2 6h1v1h-1zM7 6h1v1h-1zM11 6h1v1h-1zM2 7h1v1h-1zM7 7h1v1h-1zM11 7h1v1h-1zM2 8h1v1h-1zM7 8h1v1h-1zM11 8h1v1h-1zM2 9h1v1h-1zM7 9h1v1h-1zM11 9h1v1h-1zM2 10h1v1h-1zM7 10h1v1h-1zM11 10h1v1h-1zM0 11h5v1h-5zM8 11h3v1h-3z" stroke="#000" stroke-width="0.2"/></svg>
<svg class="t" style="left:144.40px;top:335.45px;width:13.50px;height:11.84px" viewBox="0 0 18 16" preserveAspectRatio="none" aria-label="11"><path fill="#000" d="M0 4h3v1h-3zM7 4h3v1h-3zM2 5h1v1h-1zM9 5h1v1h-1zM2 6h1v1h-1zM9 6h1v1h-1zM2 7h1v1h-1zM9 7h1v1h-1zM2 8h1v1h-1zM9 8h1v1h-1zM2 9h1v1h-1zM9 9h1v1h-1zM2 10h1v1h-1zM9 10h1v1h-1zM0 11h5v1h-5zM7 11h5v1h-5z" stroke="#000" stroke-width="0.2"/></svg>
<svg class="t" style="left:144.40px;top:351.24px;width:13.50px;height:11.84px" viewBox="0 0 18 16" preserveAspectRatio="none" aria-label="12"><path fill="#000" d="M0 4h3v1h-3zM8 4h3v1h-3zM2 5h1v1h-1zM7 5h1v1h-1zM11 5h1v1h-1zM2 6h1v1h-1zM11 6h1v1h-1zM2 7h1v1h-1zM11 7h1v1h-1zM2 8h1v1h-1zM10 8h1v1h-1zM2 9h1v1h-1zM9 9h1v1h-1zM2 10h1v1h-1zM8 10h1v1h-1zM0 11h5v1h-5zM7 11h5v1h-5z" stroke="#000" stroke-width="0.2"/></svg>
<svg class="t" style="left:144.40px;top:367.03px;width:13.50px;height:11.84px" viewBox="0 0 18 16" preserveAspectRatio="none" aria-label="13"><path fill="#000" d="M0 4h3v1h-3zM7 4h4v1h-4zM2 5h1v1h-1zM11 5h1v1h-1zM2 6h1v1h-1zM11 6h1v1h-1zM2 7h1v1h-1zM8 7h3v1h-3zM2 8h1v1h-1zM11 8h1v1h-1zM2 9h1v1h-1zM11 9h1v1h-1zM2 10h1v1h-1zM11 10h1v1h-1zM0 11h5v1h-5zM7 11h4v1h-4z" stroke="#000" stroke-width="0.2"/></svg>
<svg class="t" style="left:144.40px;top:382.82px;width:12.46px;height:11.84px" viewBox="0 0 18 16" preserveAspectRatio="none" aria-label="14"><path fill="#000" d="M0 4h3v1h-3zM10 4h2v1h-2zM2 5h1v1h-1zM9 5h1v1h-1zM11 5h1v1h-1zM2 6h1v1h-1zM8 6h1v1h-1zM11 6h1v1h-1zM2 7h1v1h-1zM8 7h1v1h-1zM11 7h1v1h-1zM2 8h1v1h-1zM7 8h1v1h-1zM11 8h1v1h-1zM2 9h1v1h-1zM7 9h6v1h-6zM2 10h1v1h-1zM11 10h1v1h-1zM0 11h5v1h-5zM11 11h1v1h-1z" stroke="#000" stroke-width="0.2"/></svg>
<svg class="t" style="left:144.40px;top:398.61px;width:13.50px;height:11.84px" viewBox="0 0 18 16" preserveAspectRatio="none" aria-label="15"><path fill="#000" d="M0 4h3v1h-3zM7 4h4v1h-4zM2 5h1v1h-1zM7 5h1v1h-1zM2 6h1v1h-1zM7 6h1v1h-1zM2 7h1v1h-1zM7 7h4v1h-4zM2 8h1v1h-1zM11 8h1v1h-1zM2 9h1v1h-1zM11 9h1v1h-1zM2 10h1v1h-1zM11 10h1v1h-1zM0 11h5v1h-5zM7 11h4v1h-4z" stroke="#000" stroke-width="0.2"/></svg>
<svg class="t" style="left:144.40px;top:414.40px;width:13.50px;height:11.84px" viewBox="0 0 18 16" preserveAspectRatio="none" aria-label="16"><path fill="#000" d="M0 4h3v1h-3zM8 4h3v1h-3zM2 5h1v1h-1zM7 5h1v1h-1zM2 6h1v1h-1zM7 6h1v1h-1zM2 7h1v1h-1zM7 7h4v1h-4zM2 8h1v1h-1zM7 8h1v1h-1zM11 8h1v1h-1zM2 9h1v1h-1zM7 9h1v1h-1zM11 9h1v1h-1zM2 10h1v1h-1zM7 10h1v1h-1zM11 10h1v1h-1zM0 11h5v1h-5zM8 11h3v1h-3z" stroke="#000" stroke-width="0.2"/></svg>
<svg class="t" style="left:144.40px;top:430.19px;width:13.50px;height:11.84px" viewBox="0 0 18 16" preserveAspectRatio="none" aria-label="17"><path fill="#000" d="M0 4h3v1h-3zM7 4h5v1h-5zM2 5h1v1h-1zM11 5h1v1h-1zM2 6h1v1h-1zM11 6h1v1h-1zM2 7h1v1h-1zM10 7h1v1h-1zM2 8h1v1h-1zM10 8h1v1h-1zM2 9h1v1h-1zM9 9h1v1h-1zM2 10h1v1h-1zM9 10h1v1h-1zM0 11h5v1h-5zM9 11h1v1h-1z" stroke="#000" stroke-width="0.2"/></svg>
<svg class="t" style="left:144.40px;top:445.98px;width:13.50px;height:11.84px" viewBox="0 0 18 16" preserveAspectRatio="none" aria-label="18"><path fill="#000" d="M0 4h3v1h-3zM8 4h3v1h-3zM2 5h1v1h-1zM7 5h1v1h-1zM11 5h1v1h-1zM2 6h1v1h-1zM7 6h1v1h-1zM11 6h1v1h-1zM2 7h1v1h-1zM8 7h3v1h-3zM2 8h1v1h-1zM7 8h1v1h-1zM11 8h1v1h-1zM2 9h1v1h-1zM7 9h1v1h-1zM11 9h1v1h-1zM2 10h1v1h-1zM7 10h1v1h-1zM11 10h1v1h-1zM0 11h5v1h-5zM8 11h3v1h-3z" stroke="#000" stroke-width="0.2"/></svg>
<svg class="t" style="left:144.40px;top:461.77px;width:13.50px;height:11.84px" viewBox="0 0 18 16" preserveAspectRatio="none" aria-label="19"><path fill="#000" d="M0 4h3v1h-3zM8 4h3v1h-3zM2 5h1v1h-1zM7 5h1v1h-1zM11 5h1v1h-1zM2 6h1v1h-1zM7 6h1v1h-1zM11 6h1v1h-1zM2 7h1v1h-1zM7 7h1v1h-1zM11 7h1v1h-1zM2 8h1v1h-1zM8 8h4v1h-4zM2 9h1v1h-1zM11 9h1v1h-1zM2 10h1v1h-1zM7 10h1v1h-1zM11 10h1v1h-1zM0 11h5v1h-5zM8 11h3v1h-3z" stroke="#000" stroke-width="0.2"/></svg>
<svg class="t" style="left:144.40px;top:477.56px;width:13.50px;height:11.84px" viewBox="0 0 18 16" preserveAspectRatio="none" aria-label="20"><path fill="#000" d="M1 4h3v1h-3zM8 4h3v1h-3zM0 5h1v1h-1zM4 5h1v1h-1zM7 5h1v1h-1zM11 5h1v1h-1zM4 6h1v1h-1zM7 6h1v1h-1zM11 6h1v1h-1zM4 7h1v1h-1zM7 7h1v1h-1zM11 7h1v1h-1zM3 8h1v1h-1zM7 8h1v1h-1zM11 8h1v1h-1zM2 9h1v1h-1zM7 9h1v1h-1zM11 9h1v1h-1zM1 10h1v1h-1zM7 10h1v1h-1zM11 10h1v1h-1zM0 11h5v1h-5zM8 11h3v1h-3z" stroke="#000" stroke-width="0.2"/></svg>
<svg class="t" style="left:144.40px;top:493.35px;width:13.50px;height:11.84px" viewBox="0 0 18 16" preserveAspectRatio="none" aria-label="21"><path fill="#000" d="M1 4h3v1h-3zM7 4h3v1h-3zM0 5h1v1h-1zM4 5h1v1h-1zM9 5h1v1h-1zM4 6h1v1h-1zM9 6h1v1h-1zM4 7h1v1h-1zM9 7h1v1h-1zM3 8h1v1h-1zM9 8h1v1h-1zM2 9h1v1h-1zM9 9h1v1h-1zM1 10h1v1h-1zM9 10h1v1h-1zM0 11h5v1h-5zM7 11h5v1h-5z" stroke="#000" stroke-width="0.2"/></svg>
<svg class="t" style="left:144.40px;top:509.14px;width:13.50px;height:11.84px" viewBox="0 0 18 16" preserveAspectRatio="none" aria-label="22"><path fill="#000" d="M1 4h3v1h-3zM8 4h3v1h-3zM0 5h1v1h-1zM4 5h1v1h-1zM7 5h1v1h-1zM11 5h1v1h-1zM4 6h1v1h-1zM11 6h1v1h-1zM4 7h1v1h-1zM11 7h1v1h-1zM3 8h1v1h-1zM10 8h1v1h-1zM2 9h1v1h-1zM9 9h1v1h-1zM1 10h1v1h-1zM8 10h1v1h-1zM0 11h5v1h-5zM7 11h5v1h-5z" stroke="#000" stroke-width="0.2"/></svg>
<svg class="t" style="left:144.40px;top:524.93px;width:13.50px;height:11.84px" viewBox="0 0 18 16" preserveAspectRatio="none" aria-label="23"><path fill="#000" d="M1 4h3v1h-3zM7 4h4v1h-4zM0 5h1v1h-1zM4 5h1v1h-1zM11 5h1v1h-1zM4 6h1v1h-1zM11 6h1v1h-1zM4 7h1v1h-1zM8 7h3v1h-3zM3 8h1v1h-1zM11 8h1v1h-1zM2 9h1v1h-1zM11 9h1v1h-1zM1 10h1v1h-1zM11 10h1v1h-1zM0 11h5v1h-5zM7 11h4v1h-4z" stroke="#000" stroke-width="0.2"/></svg>
<svg class="t" style="left:144.40px;top:540.72px;width:12.46px;height:11.84px" viewBox="0 0 18 16" preserveAspectRatio="none" aria-label="24"><path fill="#000" d="M1 4h3v1h-3zM10 4h2v1h-2zM0 5h1v1h-1zM4 5h1v1h-1zM9 5h1v1h-1zM11 5h1v1h-1zM4 6h1v1h-1zM8 6h1v1h-1zM11 6h1v1h-1zM4 7h1v1h-1zM8 7h1v1h-1zM11 7h1v1h-1zM3 8h1v1h-1zM7 8h1v1h-1zM11 8h1v1h-1zM2 9h1v1h-1zM7 9h6v1h-6zM1 10h1v1h-1zM11 10h1v1h-1zM0 11h5v1h-5zM11 11h1v1h-1z" stroke="#000" stroke-width="0.2"/></svg>
<svg class="t" style="left:144.40px;top:556.51px;width:13.50px;height:11.84px" viewBox="0 0 18 16" preserveAspectRatio="none" aria-label="25"><path fill="#000" d="M1 4h3v1h-3zM7 4h4v1h-4zM0 5h1v1h-1zM4 5h1v1h-1zM7 5h1v1h-1zM4 6h1v1h-1zM7 6h1v1h-1zM4 7h1v1h-1zM7 7h4v1h-4zM3 8h1v1h-1zM11 8h1v1h-1zM2 9h1v1h-1zM11 9h1v1h-1zM1 10h1v1h-1zM11 10h1v1h-1zM0 11h5v1h-5zM7 11h4v1h-4z" stroke="#000" stroke-width="0.2"/></svg>
<svg class="t" style="left:144.40px;top:572.30px;width:13.50px;height:11.84px" viewBox="0 0 18 16" preserveAspectRatio="none" aria-label="26"><path fill="#000" d="M1 4h3v1h-3zM8 4h3v1h-3zM0 5h1v1h-1zM4 5h1v1h-1zM7 5h1v1h-1zM4 6h1v1h-1zM7 6h1v1h-1zM4 7h1v1h-1zM7 7h4v1h-4zM3 8h1v1h-1zM7 8h1v1h-1zM11 8h1v1h-1zM2 9h1v1h-1zM7 9h1v1h-1zM11 9h1v1h-1zM1 10h1v1h-1zM7 10h1v1h-1zM11 10h1v1h-1zM0 11h5v1h-5zM8 11h3v1h-3z" stroke="#000" stroke-width="0.2"/></svg>
<svg class="t" style="left:144.40px;top:588.09px;width:13.50px;height:11.84px" viewBox="0 0 18 16" preserveAspectRatio="none" aria-label="27"><path fill="#000" d="M1 4h3v1h-3zM7 4h5v1h-5zM0 5h1v1h-1zM4 5h1v1h-1zM11 5h1v1h-1zM4 6h1v1h-1zM11 6h1v1h-1zM4 7h1v1h-1zM10 7h1v1h-1zM3 8h1v1h-1zM10 8h1v1h-1zM2 9h1v1h-1zM9 9h1v1h-1zM1 10h1v1h-1zM9 10h1v1h-1zM0 11h5v1h-5zM9 11h1v1h-1z" stroke="#000" stroke-width="0.2"/></svg>
<svg class="t" style="left:144.40px;top:603.88px;width:13.50px;height:11.84px" viewBox="0 0 18 16" preserveAspectRatio="none" aria-label="28"><path fill="#000" d="M1 4h3v1h-3zM8 4h3v1h-3zM0 5h1v1h-1zM4 5h1v1h-1zM7 5h1v1h-1zM11 5h1v1h-1zM4 6h1v1h-1zM7 6h1v1h-1zM11 6h1v1h-1zM4 7h1v1h-1zM8 7h3v1h-3zM3 8h1v1h-1zM7 8h1v1h-1zM11 8h1v1h-1zM2 9h1v1h-1zM7 9h1v1h-1zM11 9h1v1h-1zM1 10h1v1h-1zM7 10h1v1h-1zM11 10h1v1h-1zM0 11h5v1h-5zM8 11h3v1h-3z" stroke="#000" stroke-width="0.2"/></svg>
<svg class="t" style="left:144.40px;top:619.67px;width:13.50px;height:11.84px" viewBox="0 0 18 16" preserveAspectRatio="none" aria-label="29"><path fill="#000" d="M1 4h3v1h-3zM8 4h3v1h-3zM0 5h1v1h-1zM4 5h1v1h-1zM7 5h1v1h-1zM11 5h1v1h-1zM4 6h1v1h-1zM7 6h1v1h-1zM11 6h1v1h-1zM4 7h1v1h-1zM7 7h1v1h-1zM11 7h1v1h-1zM3 8h1v1h-1zM8 8h4v1h-4zM2 9h1v1h-1zM11 9h1v1h-1zM1 10h1v1h-1zM7 10h1v1h-1zM11 10h1v1h-1zM0 11h5v1h-5zM8 11h3v1h-3z" stroke="#000" stroke-width="0.2"/></svg>
<svg class="i" style="left:0;top:0;width:920px;height:660px" viewBox="0 0 920 660"><rect x="225.2" y="183.9" width="1.3" height="1.3" fill="#000" opacity="1"/><rect x="284.3" y="183.9" width="1.3" height="1.3" fill="#000" opacity="1"/><rect x="343.4" y="183.9" width="1.3" height="1.3" fill="#000" opacity="1"/><rect x="402.5" y="183.9" width="1.3" height="1.3" fill="#000" opacity="1"/><rect x="461.6" y="183.9" width="1.3" height="1.3" fill="#000" opacity="1"/><rect x="225.2" y="231.3" width="1.3" height="1.3" fill="#000" opacity="1"/><rect x="284.3" y="231.3" width="1.3" height="1.3" fill="#000" opacity="1"/><rect x="343.4" y="231.3" width="1.3" height="1.3" fill="#000" opacity="1"/><rect x="402.5" y="231.3" width="1.3" height="1.3" fill="#000" opacity="1"/><rect x="461.6" y="231.3" width="1.3" height="1.3" fill="#000" opacity="1"/><rect x="225.2" y="278.6" width="1.3" height="1.3" fill="#000" opacity="1"/><rect x="284.3" y="278.6" width="1.3" height="1.3" fill="#000" opacity="1"/><rect x="343.4" y="278.6" width="1.3" height="1.3" fill="#000" opacity="1"/><rect x="402.5" y="278.6" width="1.3" height="1.3" fill="#000" opacity="1"/><rect x="461.6" y="278.6" width="1.3" height="1.3" fill="#000" opacity="1"/><rect x="225.2" y="326.0" width="1.3" height="1.3" fill="#000" opacity="1"/><rect x="284.3" y="326.0" width="1.3" height="1.3" fill="#000" opacity="1"/><rect x="343.4" y="326.0" width="1.3" height="1.3" fill="#000" opacity="1"/><rect x="402.5" y="326.0" width="1.3" height="1.3" fill="#000" opacity="1"/><rect x="461.6" y="326.0" width="1.3" height="1.3" fill="#000" opacity="1"/><rect x="166.1" y="373.4" width="1.3" height="1.3" fill="#000" opacity="1"/><rect x="225.2" y="373.4" width="1.3" height="1.3" fill="#000" opacity="1"/><rect x="284.3" y="373.4" width="1.3" height="1.3" fill="#000" opacity="1"/><rect x="343.4" y="373.4" width="1.3" height="1.3" fill="#000" opacity="1"/><rect x="402.5" y="373.4" width="1.3" height="1.3" fill="#000" opacity="1"/><rect x="461.6" y="373.4" width="1.3" height="1.3" fill="#000" opacity="1"/><rect x="166.1" y="420.8" width="1.3" height="1.3" fill="#000" opacity="1"/><rect x="225.2" y="420.8" width="1.3" height="1.3" fill="#000" opacity="1"/><rect x="284.3" y="420.8" width="1.3" height="1.3" fill="#000" opacity="1"/><rect x="343.4" y="420.8" width="1.3" height="1.3" fill="#000" opacity="1"/><rect x="402.5" y="420.8" width="1.3" height="1.3" fill="#000" opacity="1"/><rect x="461.6" y="420.8" width="1.3" height="1.3" fill="#000" opacity="1"/><rect x="166.1" y="468.1" width="1.3" height="1.3" fill="#000" opacity="1"/><rect x="225.2" y="468.1" width="1.3" height="1.3" fill="#000" opacity="1"/><rect x="284.3" y="468.1" width="1.3" height="1.3" fill="#000" opacity="1"/><rect x="343.4" y="468.1" width="1.3" height="1.3" fill="#000" opacity="1"/><rect x="402.5" y="468.1" width="1.3" height="1.3" fill="#000" opacity="1"/><rect x="461.6" y="468.1" width="1.3" height="1.3" fill="#000" opacity="1"/><rect x="166.1" y="515.5" width="1.3" height="1.3" fill="#000" opacity="1"/><rect x="225.2" y="515.5" width="1.3" height="1.3" fill="#000" opacity="1"/><rect x="284.3" y="515.5" width="1.3" height="1.3" fill="#000" opacity="1"/><rect x="343.4" y="515.5" width="1.3" height="1.3" fill="#000" opacity="1"/><rect x="402.5" y="515.5" width="1.3" height="1.3" fill="#000" opacity="1"/><rect x="461.6" y="515.5" width="1.3" height="1.3" fill="#000" opacity="1"/><rect x="166.1" y="562.9" width="1.3" height="1.3" fill="#000" opacity="1"/><rect x="225.2" y="562.9" width="1.3" height="1.3" fill="#000" opacity="1"/><rect x="284.3" y="562.9" width="1.3" height="1.3" fill="#000" opacity="1"/><rect x="343.4" y="562.9" width="1.3" height="1.3" fill="#000" opacity="1"/><rect x="402.5" y="562.9" width="1.3" height="1.3" fill="#000" opacity="1"/><rect x="461.6" y="562.9" width="1.3" height="1.3" fill="#000" opacity="1"/><rect x="166.1" y="610.2" width="1.3" height="1.3" fill="#000" opacity="0.25"/><rect x="225.2" y="610.2" width="1.3" height="1.3" fill="#000" opacity="0.25"/><rect x="284.3" y="610.2" width="1.3" height="1.3" fill="#000" opacity="0.25"/><rect x="343.4" y="610.2" width="1.3" height="1.3" fill="#000" opacity="0.25"/><rect x="402.5" y="610.2" width="1.3" height="1.3" fill="#000" opacity="0.25"/><rect x="461.6" y="610.2" width="1.3" height="1.3" fill="#000" opacity="0.25"/><rect x="160" y="178" width="13.2" height="13.8" fill="#fafcf8" stroke="#000" stroke-width="2"/><path d="M161.5 189.6H171.7V180" fill="none" stroke="#000" stroke-width="0.9"/><circle cx="166.2" cy="184.6" r="1.5" fill="#000"/><path d="M166.5 192.4V326.3H171" fill="none" stroke="#000" stroke-width="1.2"/><path d="M169 324.3L171.5 326.3L169 328.3" fill="none" stroke="#000" stroke-width="1"/><path d="M159.4 199.7H173.7 M159.4 246.9H173.7 M159.4 295.1H173.7" stroke="#000" stroke-width="1.2"/><rect x="159.4" y="224.6" width="14.3" height="15.2" fill="#f7fcf8" stroke="#000" stroke-width="1.2"/><rect x="159.4" y="272.4" width="14.3" height="15.1" fill="#f7fcf8" stroke="#000" stroke-width="1.2"/><rect x="160.2" y="193.8" width="57" height="13.2" fill="none" stroke="#0c0c6a" stroke-width="1.8"/></svg>
<svg class="t" style="left:174.50px;top:178.60px;width:8.80px;height:12.16px" viewBox="0 0 11 16" preserveAspectRatio="none" aria-label="0"><path fill="#000" d="M1 4h3v1h-3zM0 5h1v1h-1zM4 5h1v1h-1zM0 6h1v1h-1zM4 6h1v1h-1zM0 7h1v1h-1zM4 7h1v1h-1zM0 8h1v1h-1zM4 8h1v1h-1zM0 9h1v1h-1zM4 9h1v1h-1zM0 10h1v1h-1zM4 10h1v1h-1zM1 11h3v1h-3z" stroke="#000" stroke-width="0.2"/></svg>
<svg class="t" style="left:174.00px;top:194.00px;width:13.91px;height:12.16px" viewBox="0 0 17 16" preserveAspectRatio="none" aria-label="?0"><path fill="#000" d="M1 3h3v1h-3zM0 4h1v1h-1zM4 4h1v1h-1zM7 4h3v1h-3zM0 5h1v1h-1zM4 5h1v1h-1zM6 5h1v1h-1zM10 5h1v1h-1zM4 6h1v1h-1zM6 6h1v1h-1zM10 6h1v1h-1zM2 7h2v1h-2zM6 7h1v1h-1zM10 7h1v1h-1zM2 8h1v1h-1zM6 8h1v1h-1zM10 8h1v1h-1zM6 9h1v1h-1zM10 9h1v1h-1zM2 10h1v1h-1zM6 10h1v1h-1zM10 10h1v1h-1zM2 11h1v1h-1zM7 11h3v1h-3z" stroke="#000" stroke-width="0.2"/></svg>
<svg class="t" style="left:174.50px;top:225.80px;width:15.79px;height:12.16px" viewBox="0 0 24 16" preserveAspectRatio="none" aria-label="?17"><path fill="#000" d="M1 3h3v1h-3zM0 4h1v1h-1zM4 4h1v1h-1zM6 4h3v1h-3zM14 4h5v1h-5zM0 5h1v1h-1zM4 5h1v1h-1zM8 5h1v1h-1zM18 5h1v1h-1zM4 6h1v1h-1zM8 6h1v1h-1zM18 6h1v1h-1zM2 7h2v1h-2zM8 7h1v1h-1zM17 7h1v1h-1zM2 8h1v1h-1zM8 8h1v1h-1zM17 8h1v1h-1zM8 9h1v1h-1zM16 9h1v1h-1zM2 10h1v1h-1zM8 10h1v1h-1zM16 10h1v1h-1zM2 11h1v1h-1zM6 11h5v1h-5zM16 11h1v1h-1z" stroke="#000" stroke-width="0.2"/></svg>
<svg class="t" style="left:174.50px;top:241.30px;width:10.05px;height:12.16px" viewBox="0 0 17 16" preserveAspectRatio="none" aria-label="?1"><path fill="#000" d="M1 3h3v1h-3zM0 4h1v1h-1zM4 4h1v1h-1zM6 4h3v1h-3zM0 5h1v1h-1zM4 5h1v1h-1zM8 5h1v1h-1zM4 6h1v1h-1zM8 6h1v1h-1zM2 7h2v1h-2zM8 7h1v1h-1zM2 8h1v1h-1zM8 8h1v1h-1zM8 9h1v1h-1zM2 10h1v1h-1zM8 10h1v1h-1zM2 11h1v1h-1zM6 11h5v1h-5z" stroke="#000" stroke-width="0.2"/></svg>
<svg class="t" style="left:174.50px;top:273.60px;width:14.53px;height:12.16px" viewBox="0 0 24 16" preserveAspectRatio="none" aria-label="?11"><path fill="#000" d="M1 3h3v1h-3zM0 4h1v1h-1zM4 4h1v1h-1zM6 4h3v1h-3zM14 4h3v1h-3zM0 5h1v1h-1zM4 5h1v1h-1zM8 5h1v1h-1zM16 5h1v1h-1zM4 6h1v1h-1zM8 6h1v1h-1zM16 6h1v1h-1zM2 7h2v1h-2zM8 7h1v1h-1zM16 7h1v1h-1zM2 8h1v1h-1zM8 8h1v1h-1zM16 8h1v1h-1zM8 9h1v1h-1zM16 9h1v1h-1zM2 10h1v1h-1zM8 10h1v1h-1zM16 10h1v1h-1zM2 11h1v1h-1zM6 11h5v1h-5zM14 11h5v1h-5z" stroke="#000" stroke-width="0.2"/></svg>
<svg class="t" style="left:174.50px;top:289.30px;width:13.14px;height:12.16px" viewBox="0 0 17 16" preserveAspectRatio="none" aria-label="?2"><path fill="#000" d="M1 3h3v1h-3zM0 4h1v1h-1zM4 4h1v1h-1zM7 4h3v1h-3zM0 5h1v1h-1zM4 5h1v1h-1zM6 5h1v1h-1zM10 5h1v1h-1zM4 6h1v1h-1zM10 6h1v1h-1zM2 7h2v1h-2zM10 7h1v1h-1zM2 8h1v1h-1zM9 8h1v1h-1zM8 9h1v1h-1zM2 10h1v1h-1zM7 10h1v1h-1zM2 11h1v1h-1zM6 11h5v1h-5z" stroke="#000" stroke-width="0.2"/></svg>
<svg class="t" style="left:173.50px;top:320.80px;width:9.90px;height:12.16px" viewBox="0 0 11 16" preserveAspectRatio="none" aria-label="0"><path fill="#000" d="M1 4h3v1h-3zM0 5h1v1h-1zM4 5h1v1h-1zM0 6h1v1h-1zM4 6h1v1h-1zM0 7h1v1h-1zM4 7h1v1h-1zM0 8h1v1h-1zM4 8h1v1h-1zM0 9h1v1h-1zM4 9h1v1h-1zM0 10h1v1h-1zM4 10h1v1h-1zM1 11h3v1h-3z" stroke="#000" stroke-width="0.2"/></svg>
<svg class="i" style="left:0;top:0;width:920px;height:660px" viewBox="0 0 920 660"><path d="M581 182.4H599.4 M605.2 182.4H624" stroke="#000" stroke-width="1.2"/><path d="M599.6 176.5V188.7 M605 176.5V188.7" stroke="#000" stroke-width="1.4"/><rect x="625.3" y="163.3" width="40.5" height="37.6" fill="none" stroke="#10106a" stroke-width="1.8"/></svg>
<svg class="t" style="left:592.00px;top:163.05px;width:23.38px;height:12.48px" viewBox="0 0 32 16" preserveAspectRatio="none" aria-label="X001"><path fill="#000" d="M0 4h1v1h-1zM5 4h1v1h-1zM7 4h3v1h-3zM15 4h3v1h-3zM21 4h3v1h-3zM0 5h1v1h-1zM5 5h2v1h-2zM10 5h1v1h-1zM14 5h1v1h-1zM18 5h1v1h-1zM23 5h1v1h-1zM1 6h1v1h-1zM4 6h1v1h-1zM6 6h1v1h-1zM10 6h1v1h-1zM14 6h1v1h-1zM18 6h1v1h-1zM23 6h1v1h-1zM2 7h2v1h-2zM6 7h1v1h-1zM10 7h1v1h-1zM14 7h1v1h-1zM18 7h1v1h-1zM23 7h1v1h-1zM1 8h1v1h-1zM4 8h1v1h-1zM6 8h1v1h-1zM10 8h1v1h-1zM14 8h1v1h-1zM18 8h1v1h-1zM23 8h1v1h-1zM1 9h1v1h-1zM4 9h1v1h-1zM6 9h1v1h-1zM10 9h1v1h-1zM14 9h1v1h-1zM18 9h1v1h-1zM23 9h1v1h-1zM0 10h1v1h-1zM5 10h2v1h-2zM10 10h1v1h-1zM14 10h1v1h-1zM18 10h1v1h-1zM23 10h1v1h-1zM0 11h1v1h-1zM5 11h1v1h-1zM7 11h3v1h-3zM15 11h3v1h-3zM21 11h5v1h-5z" stroke="#000" stroke-width="0.45"/></svg>
<svg class="t" style="left:573.00px;top:215.15px;width:8.80px;height:12.48px" viewBox="0 0 11 16" preserveAspectRatio="none" aria-label="0"><path fill="#000" d="M1 4h3v1h-3zM0 5h1v1h-1zM4 5h1v1h-1zM0 6h1v1h-1zM4 6h1v1h-1zM0 7h1v1h-1zM4 7h1v1h-1zM0 8h1v1h-1zM4 8h1v1h-1zM0 9h1v1h-1zM4 9h1v1h-1zM0 10h1v1h-1zM4 10h1v1h-1zM1 11h3v1h-3z" stroke="#000" stroke-width="0.3"/></svg>
<div class="a" style="left:624px;top:202px;width:287px;height:41px;background:#6f8edb;border-radius:5px 5px 0 0"></div>
<div class="a" style="left:624px;top:202px;width:287px;height:23px;border-radius:5px 5px 0 0;background:linear-gradient(#8aa6e6 0%,#7393dc 25%,#6a8bd8 70%,#7096de 100%)"></div>
<svg class="t" style="left:629.00px;top:207.93px;width:12.51px;height:13.60px" viewBox="0 0 16 16" preserveAspectRatio="none" aria-label="梯"><path fill="#e6ecf8" d="M2 2h1v1h-1zM5 2h1v1h-1zM9 2h1v1h-1zM2 3h1v1h-1zM6 3h1v1h-1zM8 3h1v1h-1zM2 4h1v1h-1zM5 4h5v1h-5zM0 5h5v1h-5zM7 5h1v1h-1zM9 5h1v1h-1zM2 6h1v1h-1zM5 6h5v1h-5zM1 7h3v1h-3zM5 7h1v1h-1zM7 7h1v1h-1zM1 8h2v1h-2zM4 8h7v1h-7zM0 9h1v1h-1zM2 9h1v1h-1zM6 9h2v1h-2zM10 9h1v1h-1zM2 10h1v1h-1zM5 10h1v1h-1zM7 10h1v1h-1zM10 10h1v1h-1zM2 11h1v1h-1zM4 11h1v1h-1zM7 11h3v1h-3zM2 12h1v1h-1zM7 12h1v1h-1z" stroke="#e6ecf8" stroke-width="0.35"/></svg>
<svg class="t" style="left:638.90px;top:207.93px;width:15.13px;height:13.60px" viewBox="0 0 16 16" preserveAspectRatio="none" aria-label="形"><path fill="#e6ecf8" d="M1 2h6v1h-6zM10 2h1v1h-1zM2 3h1v1h-1zM5 3h1v1h-1zM9 3h1v1h-1zM2 4h1v1h-1zM5 4h1v1h-1zM8 4h1v1h-1zM2 5h1v1h-1zM5 5h1v1h-1zM10 5h1v1h-1zM0 6h7v1h-7zM9 6h1v1h-1zM2 7h1v1h-1zM5 7h1v1h-1zM8 7h1v1h-1zM2 8h1v1h-1zM5 8h1v1h-1zM7 8h1v1h-1zM2 9h1v1h-1zM5 9h1v1h-1zM10 9h1v1h-1zM2 10h1v1h-1zM5 10h1v1h-1zM9 10h1v1h-1zM1 11h1v1h-1zM5 11h1v1h-1zM8 11h1v1h-1zM0 12h1v1h-1zM5 12h3v1h-3z" stroke="#e6ecf8" stroke-width="0.35"/></svg>
<svg class="t" style="left:650.22px;top:207.93px;width:15.68px;height:13.60px" viewBox="0 0 16 16" preserveAspectRatio="none" aria-label="图"><path fill="#e6ecf8" d="M1 2h10v1h-10zM1 3h1v1h-1zM4 3h1v1h-1zM10 3h1v1h-1zM1 4h1v1h-1zM4 4h5v1h-5zM10 4h1v1h-1zM1 5h1v1h-1zM3 5h2v1h-2zM7 5h1v1h-1zM10 5h1v1h-1zM1 6h2v1h-2zM5 6h2v1h-2zM10 6h1v1h-1zM1 7h1v1h-1zM4 7h1v1h-1zM7 7h1v1h-1zM10 7h1v1h-1zM1 8h3v1h-3zM5 8h1v1h-1zM8 8h3v1h-3zM1 9h1v1h-1zM6 9h1v1h-1zM10 9h1v1h-1zM1 10h1v1h-1zM5 10h1v1h-1zM10 10h1v1h-1zM1 11h1v1h-1zM6 11h1v1h-1zM10 11h1v1h-1zM1 12h10v1h-10z" stroke="#e6ecf8" stroke-width="0.35"/></svg>
<svg class="t" style="left:663.00px;top:207.93px;width:14.25px;height:13.60px" viewBox="0 0 16 16" preserveAspectRatio="none" aria-label="输"><path fill="#e6ecf8" d="M1 2h1v1h-1zM7 2h1v1h-1zM1 3h1v1h-1zM6 3h1v1h-1zM8 3h1v1h-1zM0 4h4v1h-4zM5 4h1v1h-1zM9 4h1v1h-1zM1 5h1v1h-1zM4 5h1v1h-1zM6 5h3v1h-3zM10 5h1v1h-1zM0 6h1v1h-1zM2 6h1v1h-1zM0 7h7v1h-7zM10 7h1v1h-1zM2 8h1v1h-1zM4 8h1v1h-1zM6 8h1v1h-1zM8 8h1v1h-1zM10 8h1v1h-1zM2 9h5v1h-5zM8 9h1v1h-1zM10 9h1v1h-1zM0 10h3v1h-3zM4 10h1v1h-1zM6 10h1v1h-1zM8 10h1v1h-1zM10 10h1v1h-1zM2 11h1v1h-1zM4 11h3v1h-3zM8 11h1v1h-1zM10 11h1v1h-1zM2 12h1v1h-1zM4 12h1v1h-1zM6 12h1v1h-1zM9 12h2v1h-2z" stroke="#e6ecf8" stroke-width="0.35"/></svg>
<svg class="t" style="left:675.40px;top:207.93px;width:11.35px;height:13.60px" viewBox="0 0 16 16" preserveAspectRatio="none" aria-label="入"><path fill="#e6ecf8" d="M3 2h2v1h-2zM5 3h1v1h-1zM5 4h1v1h-1zM5 5h1v1h-1zM4 6h1v1h-1zM6 6h1v1h-1zM4 7h1v1h-1zM6 7h1v1h-1zM3 8h1v1h-1zM7 8h1v1h-1zM3 9h1v1h-1zM7 9h1v1h-1zM2 10h1v1h-1zM8 10h1v1h-1zM1 11h1v1h-1zM9 11h1v1h-1zM0 12h1v1h-1zM10 12h1v1h-1z" stroke="#e6ecf8" stroke-width="0.35"/></svg>
<div class="a" style="left:891px;top:206px;width:16.5px;height:16px;border:1px solid #e8ecf8;border-radius:2px;background:linear-gradient(135deg,#e09090,#c85a54 60%,#b84a44)"></div>
<svg class="i" style="left:891px;top:206px;width:16.5px;height:16px" viewBox="0 0 16.5 16"><path d="M4.5 4L12 11.5M12 4L4.5 11.5" stroke="#fff" stroke-width="2"/></svg>
<div class="a" style="left:627px;top:225px;width:281px;height:15.5px;background:#e9e4d4"></div>
<div class="b" style="left:625.8px;top:225.5px;width:15.7px;height:15.5px"></div>
<svg class="i" style="left:627px;top:227px;width:13px;height:13px" viewBox="0 0 13 13"><path d="M3 1v2h7V1" stroke="#a0208a" stroke-width="1.5" fill="none"/><path d="M2 4h9v5H4v3" stroke="#000" stroke-width="1.4" fill="none"/><path d="M1 12h10" stroke="#000" stroke-width="1.2"/></svg>
<div class="a" style="left:641.5px;top:226px;width:55px;height:14px;background:#fafbf6"></div>
<div class="b" style="left:682px;top:226.5px;width:14px;height:13px"></div>
<svg class="i" style="left:686px;top:231px;width:6px;height:4px" viewBox="0 0 6 4"><path d="M0 0h6L3 3z" fill="#000"/></svg>
<svg class="t" style="left:644.00px;top:227.00px;width:26.53px;height:12.80px" viewBox="0 0 21 16" preserveAspectRatio="none" aria-label="-. ]-"><path fill="#000" d="M12 2h3v1h-3zM14 3h1v1h-1zM14 4h1v1h-1zM14 5h1v1h-1zM14 6h1v1h-1zM0 7h5v1h-5zM14 7h5v1h-5zM14 8h1v1h-1zM14 9h1v1h-1zM6 10h1v1h-1zM14 10h1v1h-1zM6 11h1v1h-1zM14 11h1v1h-1zM12 12h3v1h-3z"/></svg>
<div class="a" style="left:697px;top:226px;width:135px;height:14px;background:#fafbf6;border-left:1px solid #808080;border-top:1px solid #808080;box-shadow:inset 1px 1px 0 #404040"></div>
<div class="b" style="left:832.5px;top:226px;width:24.5px;height:15px"></div>
<svg class="t" style="left:835.00px;top:227.12px;width:23.74px;height:13.60px" viewBox="0 0 28 16" preserveAspectRatio="none" aria-label="确定"><path fill="#000" d="M6 2h1v1h-1zM17 2h1v1h-1zM0 3h4v1h-4zM6 3h4v1h-4zM13 3h10v1h-10zM2 4h1v1h-1zM5 4h1v1h-1zM8 4h1v1h-1zM13 4h1v1h-1zM22 4h1v1h-1zM1 5h1v1h-1zM4 5h7v1h-7zM12 5h1v1h-1zM21 5h1v1h-1zM0 6h4v1h-4zM5 6h1v1h-1zM7 6h1v1h-1zM10 6h1v1h-1zM14 6h8v1h-8zM1 7h1v1h-1zM3 7h1v1h-1zM5 7h6v1h-6zM17 7h1v1h-1zM1 8h1v1h-1zM3 8h1v1h-1zM5 8h1v1h-1zM7 8h1v1h-1zM10 8h1v1h-1zM14 8h1v1h-1zM17 8h1v1h-1zM1 9h1v1h-1zM3 9h1v1h-1zM5 9h6v1h-6zM14 9h1v1h-1zM17 9h4v1h-4zM1 10h3v1h-3zM5 10h1v1h-1zM7 10h1v1h-1zM10 10h1v1h-1zM14 10h1v1h-1zM17 10h1v1h-1zM1 11h1v1h-1zM5 11h1v1h-1zM7 11h1v1h-1zM10 11h1v1h-1zM13 11h1v1h-1zM15 11h1v1h-1zM17 11h1v1h-1zM4 12h1v1h-1zM9 12h2v1h-2zM12 12h1v1h-1zM16 12h7v1h-7z"/></svg>
<div class="b" style="left:858px;top:226px;width:23.5px;height:15px"></div>
<svg class="t" style="left:860.50px;top:227.12px;width:22.52px;height:13.60px" viewBox="0 0 28 16" preserveAspectRatio="none" aria-label="取消"><path fill="#000" d="M0 2h6v1h-6zM13 2h1v1h-1zM16 2h1v1h-1zM19 2h1v1h-1zM22 2h1v1h-1zM1 3h1v1h-1zM4 3h1v1h-1zM6 3h5v1h-5zM14 3h1v1h-1zM17 3h1v1h-1zM19 3h1v1h-1zM21 3h1v1h-1zM1 4h1v1h-1zM4 4h1v1h-1zM6 4h1v1h-1zM10 4h1v1h-1zM12 4h1v1h-1zM19 4h1v1h-1zM1 5h4v1h-4zM6 5h1v1h-1zM10 5h1v1h-1zM13 5h1v1h-1zM15 5h1v1h-1zM17 5h6v1h-6zM1 6h1v1h-1zM4 6h1v1h-1zM7 6h1v1h-1zM9 6h1v1h-1zM15 6h1v1h-1zM17 6h1v1h-1zM22 6h1v1h-1zM1 7h4v1h-4zM7 7h1v1h-1zM9 7h1v1h-1zM14 7h1v1h-1zM17 7h6v1h-6zM1 8h1v1h-1zM4 8h1v1h-1zM8 8h1v1h-1zM14 8h1v1h-1zM17 8h1v1h-1zM22 8h1v1h-1zM1 9h1v1h-1zM4 9h2v1h-2zM8 9h1v1h-1zM12 9h2v1h-2zM17 9h6v1h-6zM0 10h5v1h-5zM7 10h1v1h-1zM9 10h1v1h-1zM13 10h1v1h-1zM17 10h1v1h-1zM22 10h1v1h-1zM4 11h1v1h-1zM6 11h1v1h-1zM9 11h1v1h-1zM13 11h1v1h-1zM17 11h1v1h-1zM22 11h1v1h-1zM4 12h2v1h-2zM10 12h1v1h-1zM13 12h1v1h-1zM17 12h1v1h-1zM21 12h2v1h-2z"/></svg>
<div class="b" style="left:883px;top:226px;width:24.5px;height:15px"></div>
<svg class="t" style="left:885.50px;top:227.12px;width:23.74px;height:13.60px" viewBox="0 0 28 16" preserveAspectRatio="none" aria-label="帮助"><path fill="#000" d="M3 2h1v1h-1zM19 2h1v1h-1zM1 3h5v1h-5zM7 3h4v1h-4zM13 3h4v1h-4zM19 3h1v1h-1zM3 4h1v1h-1zM7 4h1v1h-1zM10 4h1v1h-1zM13 4h1v1h-1zM16 4h1v1h-1zM19 4h1v1h-1zM1 5h5v1h-5zM7 5h1v1h-1zM9 5h1v1h-1zM13 5h1v1h-1zM16 5h1v1h-1zM18 5h5v1h-5zM3 6h1v1h-1zM7 6h1v1h-1zM10 6h1v1h-1zM13 6h4v1h-4zM19 6h1v1h-1zM22 6h1v1h-1zM0 7h6v1h-6zM7 7h4v1h-4zM13 7h1v1h-1zM16 7h1v1h-1zM19 7h1v1h-1zM22 7h1v1h-1zM2 8h1v1h-1zM5 8h1v1h-1zM7 8h1v1h-1zM13 8h4v1h-4zM19 8h1v1h-1zM22 8h1v1h-1zM1 9h9v1h-9zM13 9h1v1h-1zM16 9h1v1h-1zM19 9h1v1h-1zM22 9h1v1h-1zM2 10h1v1h-1zM5 10h1v1h-1zM9 10h1v1h-1zM13 10h1v1h-1zM15 10h4v1h-4zM22 10h1v1h-1zM2 11h1v1h-1zM5 11h1v1h-1zM8 11h2v1h-2zM12 11h3v1h-3zM18 11h1v1h-1zM20 11h1v1h-1zM22 11h1v1h-1zM5 12h1v1h-1zM17 12h1v1h-1zM21 12h1v1h-1z"/></svg>
<div class="a" style="left:0px;top:644px;width:920px;height:16px;background:#e9e4d4;border-top:1px solid #fff"></div>
<svg class="t" style="left:2.00px;top:647.62px;width:42.04px;height:13.60px" viewBox="0 0 52 16" preserveAspectRatio="none" aria-label="准备完毕"><path fill="#000" d="M4 2h1v1h-1zM6 2h1v1h-1zM15 2h1v1h-1zM29 2h1v1h-1zM37 2h1v1h-1zM42 2h1v1h-1zM0 3h1v1h-1zM4 3h1v1h-1zM7 3h1v1h-1zM15 3h6v1h-6zM25 3h10v1h-10zM37 3h1v1h-1zM42 3h1v1h-1zM45 3h1v1h-1zM1 4h1v1h-1zM4 4h7v1h-7zM14 4h2v1h-2zM19 4h1v1h-1zM25 4h1v1h-1zM34 4h1v1h-1zM37 4h4v1h-4zM42 4h3v1h-3zM1 5h1v1h-1zM3 5h2v1h-2zM7 5h1v1h-1zM13 5h1v1h-1zM16 5h3v1h-3zM24 5h1v1h-1zM27 5h5v1h-5zM33 5h1v1h-1zM37 5h1v1h-1zM42 5h1v1h-1zM46 5h1v1h-1zM4 6h1v1h-1zM7 6h1v1h-1zM16 6h1v1h-1zM18 6h2v1h-2zM37 6h1v1h-1zM40 6h1v1h-1zM42 6h1v1h-1zM46 6h1v1h-1zM2 7h1v1h-1zM4 7h6v1h-6zM14 7h2v1h-2zM20 7h3v1h-3zM25 7h10v1h-10zM37 7h3v1h-3zM43 7h4v1h-4zM2 8h1v1h-1zM4 8h1v1h-1zM7 8h1v1h-1zM12 8h9v1h-9zM28 8h1v1h-1zM30 8h1v1h-1zM41 8h1v1h-1zM0 9h2v1h-2zM4 9h6v1h-6zM14 9h1v1h-1zM17 9h1v1h-1zM20 9h1v1h-1zM27 9h1v1h-1zM30 9h1v1h-1zM36 9h11v1h-11zM1 10h1v1h-1zM4 10h1v1h-1zM7 10h1v1h-1zM14 10h7v1h-7zM27 10h1v1h-1zM30 10h1v1h-1zM34 10h1v1h-1zM41 10h1v1h-1zM1 11h1v1h-1zM4 11h1v1h-1zM7 11h1v1h-1zM14 11h1v1h-1zM17 11h1v1h-1zM20 11h1v1h-1zM26 11h1v1h-1zM30 11h1v1h-1zM34 11h1v1h-1zM41 11h1v1h-1zM1 12h1v1h-1zM4 12h7v1h-7zM14 12h7v1h-7zM25 12h1v1h-1zM31 12h4v1h-4zM41 12h1v1h-1z" stroke="#000" stroke-width="0.4"/></svg>
<div class="a" style="left:484.5px;top:646px;width:1px;height:14px;background:#a8a595;border-right:1px solid #fff;width:2px"></div>
<div class="a" style="left:555px;top:646px;width:1px;height:14px;background:#a8a595;border-right:1px solid #fff;width:2px"></div>
<div class="a" style="left:679.6px;top:646px;width:1px;height:14px;background:#a8a595;border-right:1px solid #fff;width:2px"></div>
<div class="a" style="left:714.6px;top:646px;width:1px;height:14px;background:#a8a595;border-right:1px solid #fff;width:2px"></div>
<div class="a" style="left:774px;top:646px;width:1px;height:14px;background:#a8a595;border-right:1px solid #fff;width:2px"></div>
<div class="a" style="left:819.5px;top:646px;width:1px;height:14px;background:#a8a595;border-right:1px solid #fff;width:2px"></div>
<div class="a" style="left:853px;top:646px;width:1px;height:14px;background:#a8a595;border-right:1px solid #fff;width:2px"></div>
<div class="a" style="left:875.8px;top:646px;width:1px;height:14px;background:#a8a595;border-right:1px solid #fff;width:2px"></div>
<div class="a" style="left:897px;top:646px;width:1px;height:14px;background:#a8a595;border-right:1px solid #fff;width:2px"></div>
<svg class="t" style="left:486.50px;top:648.00px;width:32.68px;height:12.80px" viewBox="0 0 45 16" preserveAspectRatio="none" aria-label="FX2N(C)"><path fill="#000" d="M30 2h1v1h-1zM39 2h1v1h-1zM29 3h1v1h-1zM40 3h1v1h-1zM0 4h5v1h-5zM6 4h1v1h-1zM11 4h1v1h-1zM13 4h3v1h-3zM19 4h1v1h-1zM24 4h1v1h-1zM29 4h1v1h-1zM32 4h4v1h-4zM40 4h1v1h-1zM0 5h1v1h-1zM6 5h1v1h-1zM11 5h2v1h-2zM16 5h1v1h-1zM19 5h2v1h-2zM24 5h1v1h-1zM28 5h1v1h-1zM31 5h1v1h-1zM36 5h1v1h-1zM41 5h1v1h-1zM0 6h1v1h-1zM7 6h1v1h-1zM10 6h1v1h-1zM16 6h1v1h-1zM19 6h1v1h-1zM21 6h1v1h-1zM24 6h1v1h-1zM28 6h1v1h-1zM31 6h1v1h-1zM41 6h1v1h-1zM0 7h4v1h-4zM8 7h2v1h-2zM16 7h1v1h-1zM19 7h1v1h-1zM22 7h1v1h-1zM24 7h1v1h-1zM28 7h1v1h-1zM31 7h1v1h-1zM41 7h1v1h-1zM0 8h1v1h-1zM7 8h1v1h-1zM10 8h1v1h-1zM15 8h1v1h-1zM19 8h1v1h-1zM23 8h2v1h-2zM28 8h1v1h-1zM31 8h1v1h-1zM41 8h1v1h-1zM0 9h1v1h-1zM7 9h1v1h-1zM10 9h1v1h-1zM14 9h1v1h-1zM19 9h1v1h-1zM24 9h1v1h-1zM28 9h1v1h-1zM31 9h1v1h-1zM41 9h1v1h-1zM0 10h1v1h-1zM6 10h1v1h-1zM11 10h1v1h-1zM13 10h1v1h-1zM19 10h1v1h-1zM24 10h1v1h-1zM29 10h1v1h-1zM31 10h1v1h-1zM36 10h1v1h-1zM40 10h1v1h-1zM0 11h1v1h-1zM6 11h1v1h-1zM11 11h6v1h-6zM19 11h1v1h-1zM24 11h1v1h-1zM29 11h1v1h-1zM32 11h4v1h-4zM40 11h1v1h-1zM30 12h1v1h-1zM39 12h1v1h-1z" stroke="#000" stroke-width="0.3"/></svg>
<svg class="t" style="left:557.00px;top:647.62px;width:21.30px;height:13.60px" viewBox="0 0 28 16" preserveAspectRatio="none" aria-label="本站"><path fill="#000" d="M5 2h1v1h-1zM13 2h1v1h-1zM19 2h1v1h-1zM5 3h1v1h-1zM14 3h1v1h-1zM19 3h1v1h-1zM0 4h11v1h-11zM12 4h5v1h-5zM19 4h4v1h-4zM4 5h3v1h-3zM19 5h1v1h-1zM3 6h1v1h-1zM5 6h1v1h-1zM7 6h1v1h-1zM12 6h1v1h-1zM15 6h1v1h-1zM19 6h1v1h-1zM3 7h1v1h-1zM5 7h1v1h-1zM7 7h1v1h-1zM13 7h1v1h-1zM15 7h1v1h-1zM17 7h5v1h-5zM2 8h1v1h-1zM5 8h1v1h-1zM8 8h1v1h-1zM13 8h1v1h-1zM15 8h1v1h-1zM17 8h1v1h-1zM21 8h1v1h-1zM1 9h1v1h-1zM5 9h1v1h-1zM9 9h1v1h-1zM14 9h1v1h-1zM17 9h1v1h-1zM21 9h1v1h-1zM0 10h1v1h-1zM3 10h5v1h-5zM10 10h1v1h-1zM14 10h2v1h-2zM17 10h1v1h-1zM21 10h1v1h-1zM5 11h1v1h-1zM12 11h2v1h-2zM17 11h1v1h-1zM21 11h1v1h-1zM5 12h1v1h-1zM17 12h5v1h-5z" stroke="#000" stroke-width="0.4"/></svg>
<svg class="t" style="left:776.00px;top:647.62px;width:24.35px;height:13.60px" viewBox="0 0 28 16" preserveAspectRatio="none" aria-label="改写"><path fill="#000" d="M7 2h1v1h-1zM13 2h10v1h-10zM0 3h5v1h-5zM7 3h1v1h-1zM13 3h1v1h-1zM22 3h1v1h-1zM4 4h1v1h-1zM6 4h5v1h-5zM12 4h1v1h-1zM15 4h1v1h-1zM21 4h1v1h-1zM4 5h2v1h-2zM9 5h1v1h-1zM15 5h6v1h-6zM1 6h4v1h-4zM6 6h1v1h-1zM9 6h1v1h-1zM15 6h1v1h-1zM1 7h1v1h-1zM6 7h1v1h-1zM9 7h1v1h-1zM15 7h7v1h-7zM1 8h1v1h-1zM6 8h1v1h-1zM9 8h1v1h-1zM21 8h1v1h-1zM1 9h1v1h-1zM7 9h2v1h-2zM13 9h7v1h-7zM21 9h1v1h-1zM1 10h1v1h-1zM3 10h1v1h-1zM7 10h2v1h-2zM21 10h1v1h-1zM1 11h2v1h-2zM6 11h1v1h-1zM9 11h1v1h-1zM18 11h1v1h-1zM20 11h1v1h-1zM1 12h1v1h-1zM4 12h2v1h-2zM10 12h1v1h-1zM19 12h1v1h-1z" stroke="#000" stroke-width="0.4"/></svg>
<svg class="t" style="left:877.50px;top:648.00px;width:19.54px;height:12.80px" viewBox="0 0 29 16" preserveAspectRatio="none" aria-label="NUM"><path fill="#000" d="M0 4h1v1h-1zM5 4h1v1h-1zM8 4h1v1h-1zM13 4h1v1h-1zM16 4h2v1h-2zM21 4h2v1h-2zM0 5h2v1h-2zM5 5h1v1h-1zM8 5h1v1h-1zM13 5h1v1h-1zM16 5h2v1h-2zM21 5h2v1h-2zM0 6h1v1h-1zM2 6h1v1h-1zM5 6h1v1h-1zM8 6h1v1h-1zM13 6h1v1h-1zM16 6h1v1h-1zM18 6h1v1h-1zM20 6h1v1h-1zM22 6h1v1h-1zM0 7h1v1h-1zM3 7h1v1h-1zM5 7h1v1h-1zM8 7h1v1h-1zM13 7h1v1h-1zM16 7h1v1h-1zM18 7h1v1h-1zM20 7h1v1h-1zM22 7h1v1h-1zM0 8h1v1h-1zM4 8h2v1h-2zM8 8h1v1h-1zM13 8h1v1h-1zM16 8h1v1h-1zM19 8h1v1h-1zM22 8h1v1h-1zM0 9h1v1h-1zM5 9h1v1h-1zM8 9h1v1h-1zM13 9h1v1h-1zM16 9h1v1h-1zM19 9h1v1h-1zM22 9h1v1h-1zM0 10h1v1h-1zM5 10h1v1h-1zM8 10h1v1h-1zM13 10h1v1h-1zM16 10h1v1h-1zM22 10h1v1h-1zM0 11h1v1h-1zM5 11h1v1h-1zM9 11h4v1h-4zM16 11h1v1h-1zM22 11h1v1h-1z" stroke="#000" stroke-width="0.3"/></svg></body></html>
